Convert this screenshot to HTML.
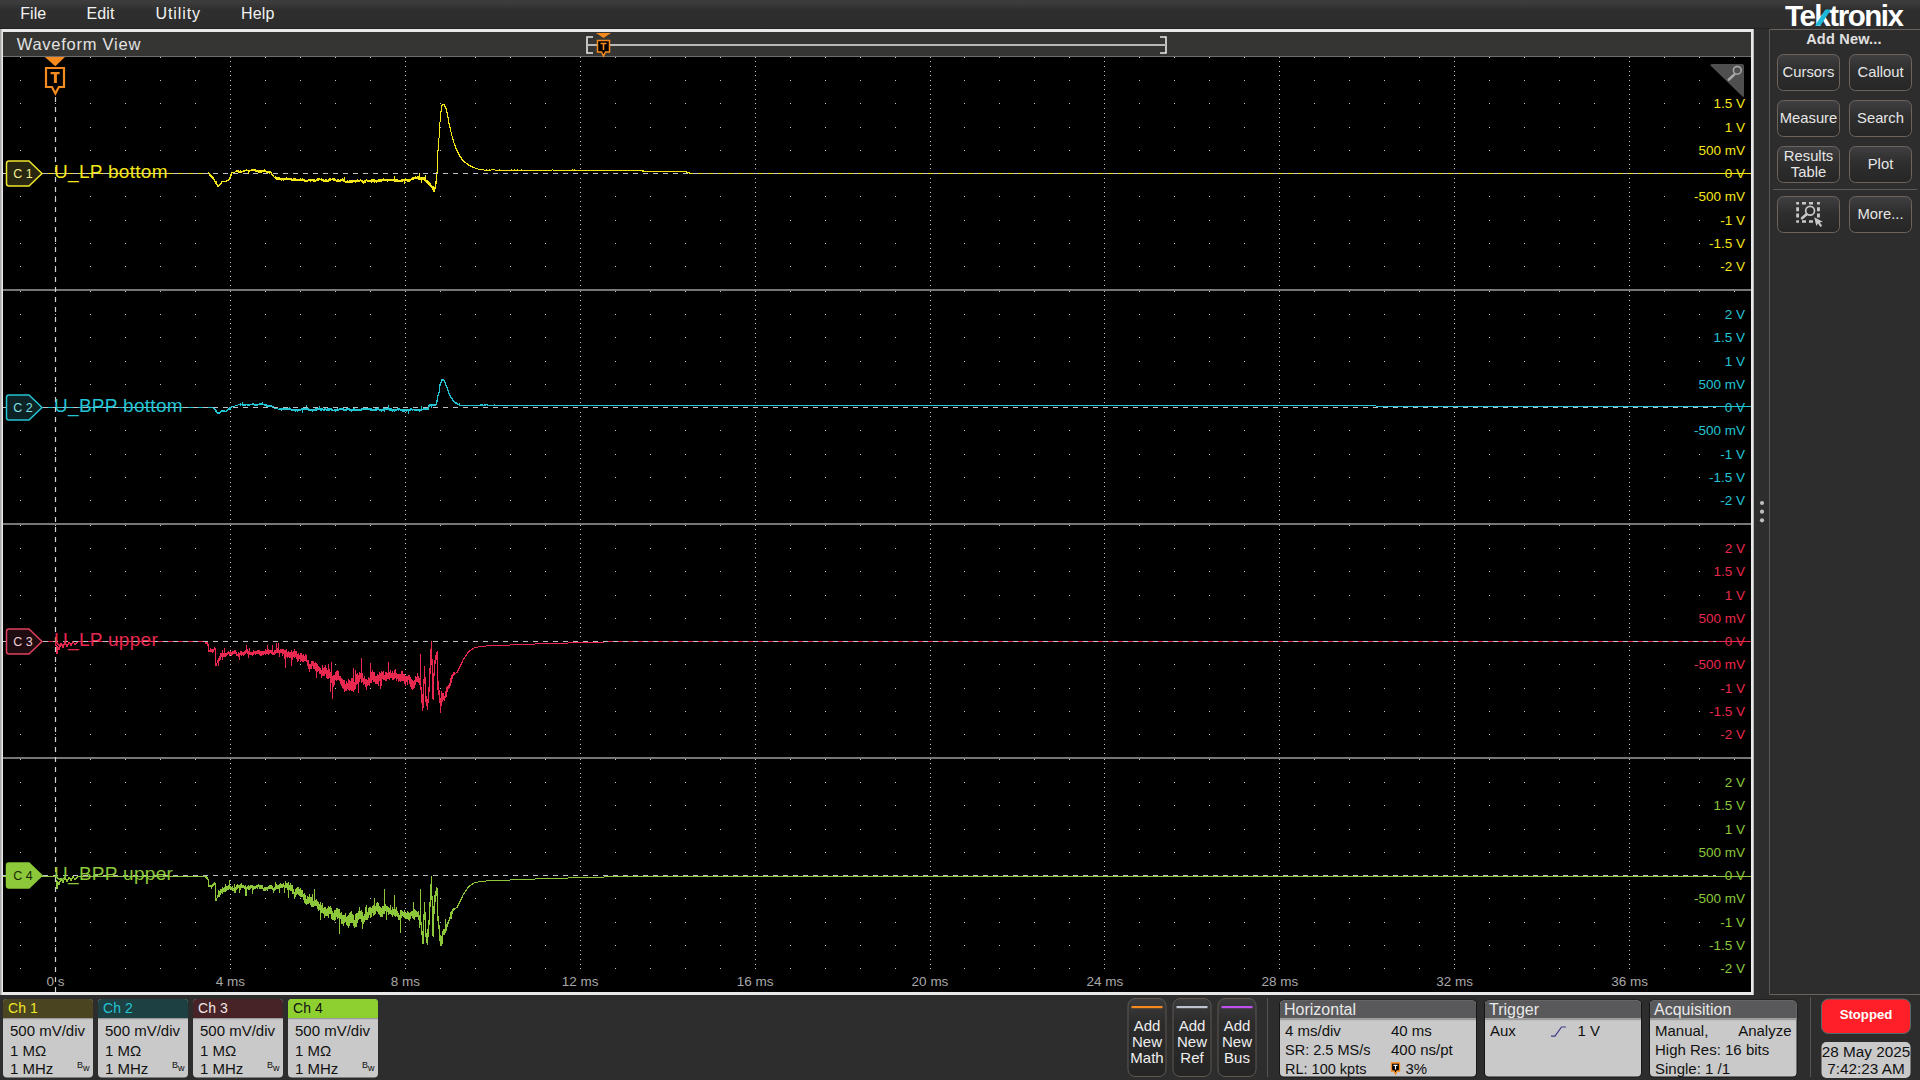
<!DOCTYPE html>
<html><head><meta charset="utf-8"><title>Waveform View</title>
<style>html,body{margin:0;padding:0;background:#2d2d2d;overflow:hidden}svg{display:block}text{font-family:"Liberation Sans",sans-serif}</style></head>
<body><svg width="1920" height="1080" viewBox="0 0 1920 1080"><defs>
<linearGradient id="mb" x1="0" y1="0" x2="0" y2="1"><stop offset="0" stop-color="#3d3d3d"/><stop offset="0.1" stop-color="#3b3b3b"/><stop offset="0.35" stop-color="#2e2e2e"/><stop offset="1" stop-color="#2d2d2d"/></linearGradient>
<linearGradient id="btn" x1="0" y1="0" x2="0" y2="1"><stop offset="0" stop-color="#404042"/><stop offset="0.45" stop-color="#2e2e2e"/><stop offset="1" stop-color="#262626"/></linearGradient>
<linearGradient id="btn2" x1="0" y1="0" x2="0" y2="1"><stop offset="0" stop-color="#3c3c3e"/><stop offset="0.3" stop-color="#2c2c2c"/><stop offset="1" stop-color="#252525"/></linearGradient>
</defs>
<rect x="0" y="0" width="1920" height="1080" fill="#2d2d2d"/>
<rect x="0" y="0" width="1920" height="29" fill="url(#mb)"/>
<rect x="0" y="28" width="1770" height="1" fill="#222"/>
<text x="20.3" y="19" font-size="16" fill="#f2f2f2" text-anchor="start" font-weight="normal" >File</text>
<text x="86.4" y="19" font-size="16" fill="#f2f2f2" text-anchor="start" font-weight="normal" letter-spacing="0.2" >Edit</text>
<text x="155.5" y="19" font-size="16" fill="#f2f2f2" text-anchor="start" font-weight="normal" letter-spacing="0.9" >Utility</text>
<text x="241" y="19" font-size="16" fill="#f2f2f2" text-anchor="start" font-weight="normal" letter-spacing="0.2" >Help</text>
<rect x="0" y="29" width="1754" height="966" fill="#e8e8e8"/>
<rect x="0" y="29" width="1.5" height="966" fill="#a8a8a8"/>
<rect x="1753" y="29" width="1" height="966" fill="#b4b4b4"/>
<rect x="3" y="32" width="1748" height="960" fill="#000"/>
<rect x="3" y="32" width="1748" height="24" fill="#353533"/>
<rect x="3" y="56" width="1748" height="1" fill="#6e6e6e"/>
<text x="16.7" y="49.7" font-size="16.5" fill="#e2e2e2" text-anchor="start" font-weight="normal" letter-spacing="0.75" >Waveform View</text>
<path d="M593,37 H587 V53 H593" fill="none" stroke="#e8e8e8" stroke-width="1.6"/>
<path d="M1160,37 H1166 V53 H1160" fill="none" stroke="#e8e8e8" stroke-width="1.6"/>
<rect x="587" y="44" width="579" height="2" fill="#b8b8b8"/>
<path d="M596,33 L611,33 L603.5,38 Z" fill="#f58a1f"/>
<path d="M597.5,40.5 H609.5 V52 H605.5 L603.5,56 L601.5,52 H597.5 Z" fill="#000" stroke="#f58a1f" stroke-width="1.5"/>
<path d="M600.5,43.5 H606.5 M603.5,43.5 V50" stroke="#f58a1f" stroke-width="1.6"/>
<rect x="3" y="289" width="1748" height="2" fill="#767676"/>
<rect x="3" y="523" width="1748" height="2" fill="#767676"/>
<rect x="3" y="757" width="1748" height="2" fill="#767676"/>
<path d="M20,57h1v1h-1zM55,57h1v1h-1zM90,57h1v1h-1zM125,57h1v1h-1zM160,57h1v1h-1zM195,57h1v1h-1zM230,57h1v1h-1zM265,57h1v1h-1zM300,57h1v1h-1zM335,57h1v1h-1zM370,57h1v1h-1zM405,57h1v1h-1zM440,57h1v1h-1zM475,57h1v1h-1zM510,57h1v1h-1zM545,57h1v1h-1zM580,57h1v1h-1zM615,57h1v1h-1zM650,57h1v1h-1zM685,57h1v1h-1zM720,57h1v1h-1zM755,57h1v1h-1zM790,57h1v1h-1zM825,57h1v1h-1zM860,57h1v1h-1zM895,57h1v1h-1zM930,57h1v1h-1zM964,57h1v1h-1zM999,57h1v1h-1zM1034,57h1v1h-1zM1069,57h1v1h-1zM1104,57h1v1h-1zM1139,57h1v1h-1zM1174,57h1v1h-1zM1209,57h1v1h-1zM1244,57h1v1h-1zM1279,57h1v1h-1zM1314,57h1v1h-1zM1349,57h1v1h-1zM1384,57h1v1h-1zM1419,57h1v1h-1zM1454,57h1v1h-1zM1489,57h1v1h-1zM1524,57h1v1h-1zM1559,57h1v1h-1zM1594,57h1v1h-1zM1629,57h1v1h-1zM1664,57h1v1h-1zM1699,57h1v1h-1zM1734,57h1v1h-1zM20,80h1v1h-1zM55,80h1v1h-1zM90,80h1v1h-1zM125,80h1v1h-1zM160,80h1v1h-1zM195,80h1v1h-1zM230,80h1v1h-1zM265,80h1v1h-1zM300,80h1v1h-1zM335,80h1v1h-1zM370,80h1v1h-1zM405,80h1v1h-1zM440,80h1v1h-1zM475,80h1v1h-1zM510,80h1v1h-1zM545,80h1v1h-1zM580,80h1v1h-1zM615,80h1v1h-1zM650,80h1v1h-1zM685,80h1v1h-1zM720,80h1v1h-1zM755,80h1v1h-1zM790,80h1v1h-1zM825,80h1v1h-1zM860,80h1v1h-1zM895,80h1v1h-1zM930,80h1v1h-1zM964,80h1v1h-1zM999,80h1v1h-1zM1034,80h1v1h-1zM1069,80h1v1h-1zM1104,80h1v1h-1zM1139,80h1v1h-1zM1174,80h1v1h-1zM1209,80h1v1h-1zM1244,80h1v1h-1zM1279,80h1v1h-1zM1314,80h1v1h-1zM1349,80h1v1h-1zM1384,80h1v1h-1zM1419,80h1v1h-1zM1454,80h1v1h-1zM1489,80h1v1h-1zM1524,80h1v1h-1zM1559,80h1v1h-1zM1594,80h1v1h-1zM1629,80h1v1h-1zM1664,80h1v1h-1zM1699,80h1v1h-1zM1734,80h1v1h-1zM20,103h1v1h-1zM55,103h1v1h-1zM90,103h1v1h-1zM125,103h1v1h-1zM160,103h1v1h-1zM195,103h1v1h-1zM230,103h1v1h-1zM265,103h1v1h-1zM300,103h1v1h-1zM335,103h1v1h-1zM370,103h1v1h-1zM405,103h1v1h-1zM440,103h1v1h-1zM475,103h1v1h-1zM510,103h1v1h-1zM545,103h1v1h-1zM580,103h1v1h-1zM615,103h1v1h-1zM650,103h1v1h-1zM685,103h1v1h-1zM720,103h1v1h-1zM755,103h1v1h-1zM790,103h1v1h-1zM825,103h1v1h-1zM860,103h1v1h-1zM895,103h1v1h-1zM930,103h1v1h-1zM964,103h1v1h-1zM999,103h1v1h-1zM1034,103h1v1h-1zM1069,103h1v1h-1zM1104,103h1v1h-1zM1139,103h1v1h-1zM1174,103h1v1h-1zM1209,103h1v1h-1zM1244,103h1v1h-1zM1279,103h1v1h-1zM1314,103h1v1h-1zM1349,103h1v1h-1zM1384,103h1v1h-1zM1419,103h1v1h-1zM1454,103h1v1h-1zM1489,103h1v1h-1zM1524,103h1v1h-1zM1559,103h1v1h-1zM1594,103h1v1h-1zM1629,103h1v1h-1zM1664,103h1v1h-1zM1699,103h1v1h-1zM1734,103h1v1h-1zM20,127h1v1h-1zM55,127h1v1h-1zM90,127h1v1h-1zM125,127h1v1h-1zM160,127h1v1h-1zM195,127h1v1h-1zM230,127h1v1h-1zM265,127h1v1h-1zM300,127h1v1h-1zM335,127h1v1h-1zM370,127h1v1h-1zM405,127h1v1h-1zM440,127h1v1h-1zM475,127h1v1h-1zM510,127h1v1h-1zM545,127h1v1h-1zM580,127h1v1h-1zM615,127h1v1h-1zM650,127h1v1h-1zM685,127h1v1h-1zM720,127h1v1h-1zM755,127h1v1h-1zM790,127h1v1h-1zM825,127h1v1h-1zM860,127h1v1h-1zM895,127h1v1h-1zM930,127h1v1h-1zM964,127h1v1h-1zM999,127h1v1h-1zM1034,127h1v1h-1zM1069,127h1v1h-1zM1104,127h1v1h-1zM1139,127h1v1h-1zM1174,127h1v1h-1zM1209,127h1v1h-1zM1244,127h1v1h-1zM1279,127h1v1h-1zM1314,127h1v1h-1zM1349,127h1v1h-1zM1384,127h1v1h-1zM1419,127h1v1h-1zM1454,127h1v1h-1zM1489,127h1v1h-1zM1524,127h1v1h-1zM1559,127h1v1h-1zM1594,127h1v1h-1zM1629,127h1v1h-1zM1664,127h1v1h-1zM1699,127h1v1h-1zM1734,127h1v1h-1zM20,150h1v1h-1zM55,150h1v1h-1zM90,150h1v1h-1zM125,150h1v1h-1zM160,150h1v1h-1zM195,150h1v1h-1zM230,150h1v1h-1zM265,150h1v1h-1zM300,150h1v1h-1zM335,150h1v1h-1zM370,150h1v1h-1zM405,150h1v1h-1zM440,150h1v1h-1zM475,150h1v1h-1zM510,150h1v1h-1zM545,150h1v1h-1zM580,150h1v1h-1zM615,150h1v1h-1zM650,150h1v1h-1zM685,150h1v1h-1zM720,150h1v1h-1zM755,150h1v1h-1zM790,150h1v1h-1zM825,150h1v1h-1zM860,150h1v1h-1zM895,150h1v1h-1zM930,150h1v1h-1zM964,150h1v1h-1zM999,150h1v1h-1zM1034,150h1v1h-1zM1069,150h1v1h-1zM1104,150h1v1h-1zM1139,150h1v1h-1zM1174,150h1v1h-1zM1209,150h1v1h-1zM1244,150h1v1h-1zM1279,150h1v1h-1zM1314,150h1v1h-1zM1349,150h1v1h-1zM1384,150h1v1h-1zM1419,150h1v1h-1zM1454,150h1v1h-1zM1489,150h1v1h-1zM1524,150h1v1h-1zM1559,150h1v1h-1zM1594,150h1v1h-1zM1629,150h1v1h-1zM1664,150h1v1h-1zM1699,150h1v1h-1zM1734,150h1v1h-1zM20,196h1v1h-1zM55,196h1v1h-1zM90,196h1v1h-1zM125,196h1v1h-1zM160,196h1v1h-1zM195,196h1v1h-1zM230,196h1v1h-1zM265,196h1v1h-1zM300,196h1v1h-1zM335,196h1v1h-1zM370,196h1v1h-1zM405,196h1v1h-1zM440,196h1v1h-1zM475,196h1v1h-1zM510,196h1v1h-1zM545,196h1v1h-1zM580,196h1v1h-1zM615,196h1v1h-1zM650,196h1v1h-1zM685,196h1v1h-1zM720,196h1v1h-1zM755,196h1v1h-1zM790,196h1v1h-1zM825,196h1v1h-1zM860,196h1v1h-1zM895,196h1v1h-1zM930,196h1v1h-1zM964,196h1v1h-1zM999,196h1v1h-1zM1034,196h1v1h-1zM1069,196h1v1h-1zM1104,196h1v1h-1zM1139,196h1v1h-1zM1174,196h1v1h-1zM1209,196h1v1h-1zM1244,196h1v1h-1zM1279,196h1v1h-1zM1314,196h1v1h-1zM1349,196h1v1h-1zM1384,196h1v1h-1zM1419,196h1v1h-1zM1454,196h1v1h-1zM1489,196h1v1h-1zM1524,196h1v1h-1zM1559,196h1v1h-1zM1594,196h1v1h-1zM1629,196h1v1h-1zM1664,196h1v1h-1zM1699,196h1v1h-1zM1734,196h1v1h-1zM20,220h1v1h-1zM55,220h1v1h-1zM90,220h1v1h-1zM125,220h1v1h-1zM160,220h1v1h-1zM195,220h1v1h-1zM230,220h1v1h-1zM265,220h1v1h-1zM300,220h1v1h-1zM335,220h1v1h-1zM370,220h1v1h-1zM405,220h1v1h-1zM440,220h1v1h-1zM475,220h1v1h-1zM510,220h1v1h-1zM545,220h1v1h-1zM580,220h1v1h-1zM615,220h1v1h-1zM650,220h1v1h-1zM685,220h1v1h-1zM720,220h1v1h-1zM755,220h1v1h-1zM790,220h1v1h-1zM825,220h1v1h-1zM860,220h1v1h-1zM895,220h1v1h-1zM930,220h1v1h-1zM964,220h1v1h-1zM999,220h1v1h-1zM1034,220h1v1h-1zM1069,220h1v1h-1zM1104,220h1v1h-1zM1139,220h1v1h-1zM1174,220h1v1h-1zM1209,220h1v1h-1zM1244,220h1v1h-1zM1279,220h1v1h-1zM1314,220h1v1h-1zM1349,220h1v1h-1zM1384,220h1v1h-1zM1419,220h1v1h-1zM1454,220h1v1h-1zM1489,220h1v1h-1zM1524,220h1v1h-1zM1559,220h1v1h-1zM1594,220h1v1h-1zM1629,220h1v1h-1zM1664,220h1v1h-1zM1699,220h1v1h-1zM1734,220h1v1h-1zM20,243h1v1h-1zM55,243h1v1h-1zM90,243h1v1h-1zM125,243h1v1h-1zM160,243h1v1h-1zM195,243h1v1h-1zM230,243h1v1h-1zM265,243h1v1h-1zM300,243h1v1h-1zM335,243h1v1h-1zM370,243h1v1h-1zM405,243h1v1h-1zM440,243h1v1h-1zM475,243h1v1h-1zM510,243h1v1h-1zM545,243h1v1h-1zM580,243h1v1h-1zM615,243h1v1h-1zM650,243h1v1h-1zM685,243h1v1h-1zM720,243h1v1h-1zM755,243h1v1h-1zM790,243h1v1h-1zM825,243h1v1h-1zM860,243h1v1h-1zM895,243h1v1h-1zM930,243h1v1h-1zM964,243h1v1h-1zM999,243h1v1h-1zM1034,243h1v1h-1zM1069,243h1v1h-1zM1104,243h1v1h-1zM1139,243h1v1h-1zM1174,243h1v1h-1zM1209,243h1v1h-1zM1244,243h1v1h-1zM1279,243h1v1h-1zM1314,243h1v1h-1zM1349,243h1v1h-1zM1384,243h1v1h-1zM1419,243h1v1h-1zM1454,243h1v1h-1zM1489,243h1v1h-1zM1524,243h1v1h-1zM1559,243h1v1h-1zM1594,243h1v1h-1zM1629,243h1v1h-1zM1664,243h1v1h-1zM1699,243h1v1h-1zM1734,243h1v1h-1zM20,266h1v1h-1zM55,266h1v1h-1zM90,266h1v1h-1zM125,266h1v1h-1zM160,266h1v1h-1zM195,266h1v1h-1zM230,266h1v1h-1zM265,266h1v1h-1zM300,266h1v1h-1zM335,266h1v1h-1zM370,266h1v1h-1zM405,266h1v1h-1zM440,266h1v1h-1zM475,266h1v1h-1zM510,266h1v1h-1zM545,266h1v1h-1zM580,266h1v1h-1zM615,266h1v1h-1zM650,266h1v1h-1zM685,266h1v1h-1zM720,266h1v1h-1zM755,266h1v1h-1zM790,266h1v1h-1zM825,266h1v1h-1zM860,266h1v1h-1zM895,266h1v1h-1zM930,266h1v1h-1zM964,266h1v1h-1zM999,266h1v1h-1zM1034,266h1v1h-1zM1069,266h1v1h-1zM1104,266h1v1h-1zM1139,266h1v1h-1zM1174,266h1v1h-1zM1209,266h1v1h-1zM1244,266h1v1h-1zM1279,266h1v1h-1zM1314,266h1v1h-1zM1349,266h1v1h-1zM1384,266h1v1h-1zM1419,266h1v1h-1zM1454,266h1v1h-1zM1489,266h1v1h-1zM1524,266h1v1h-1zM1559,266h1v1h-1zM1594,266h1v1h-1zM1629,266h1v1h-1zM1664,266h1v1h-1zM1699,266h1v1h-1zM1734,266h1v1h-1zM20,291h1v1h-1zM55,291h1v1h-1zM90,291h1v1h-1zM125,291h1v1h-1zM160,291h1v1h-1zM195,291h1v1h-1zM230,291h1v1h-1zM265,291h1v1h-1zM300,291h1v1h-1zM335,291h1v1h-1zM370,291h1v1h-1zM405,291h1v1h-1zM440,291h1v1h-1zM475,291h1v1h-1zM510,291h1v1h-1zM545,291h1v1h-1zM580,291h1v1h-1zM615,291h1v1h-1zM650,291h1v1h-1zM685,291h1v1h-1zM720,291h1v1h-1zM755,291h1v1h-1zM790,291h1v1h-1zM825,291h1v1h-1zM860,291h1v1h-1zM895,291h1v1h-1zM930,291h1v1h-1zM964,291h1v1h-1zM999,291h1v1h-1zM1034,291h1v1h-1zM1069,291h1v1h-1zM1104,291h1v1h-1zM1139,291h1v1h-1zM1174,291h1v1h-1zM1209,291h1v1h-1zM1244,291h1v1h-1zM1279,291h1v1h-1zM1314,291h1v1h-1zM1349,291h1v1h-1zM1384,291h1v1h-1zM1419,291h1v1h-1zM1454,291h1v1h-1zM1489,291h1v1h-1zM1524,291h1v1h-1zM1559,291h1v1h-1zM1594,291h1v1h-1zM1629,291h1v1h-1zM1664,291h1v1h-1zM1699,291h1v1h-1zM1734,291h1v1h-1zM20,314h1v1h-1zM55,314h1v1h-1zM90,314h1v1h-1zM125,314h1v1h-1zM160,314h1v1h-1zM195,314h1v1h-1zM230,314h1v1h-1zM265,314h1v1h-1zM300,314h1v1h-1zM335,314h1v1h-1zM370,314h1v1h-1zM405,314h1v1h-1zM440,314h1v1h-1zM475,314h1v1h-1zM510,314h1v1h-1zM545,314h1v1h-1zM580,314h1v1h-1zM615,314h1v1h-1zM650,314h1v1h-1zM685,314h1v1h-1zM720,314h1v1h-1zM755,314h1v1h-1zM790,314h1v1h-1zM825,314h1v1h-1zM860,314h1v1h-1zM895,314h1v1h-1zM930,314h1v1h-1zM964,314h1v1h-1zM999,314h1v1h-1zM1034,314h1v1h-1zM1069,314h1v1h-1zM1104,314h1v1h-1zM1139,314h1v1h-1zM1174,314h1v1h-1zM1209,314h1v1h-1zM1244,314h1v1h-1zM1279,314h1v1h-1zM1314,314h1v1h-1zM1349,314h1v1h-1zM1384,314h1v1h-1zM1419,314h1v1h-1zM1454,314h1v1h-1zM1489,314h1v1h-1zM1524,314h1v1h-1zM1559,314h1v1h-1zM1594,314h1v1h-1zM1629,314h1v1h-1zM1664,314h1v1h-1zM1699,314h1v1h-1zM1734,314h1v1h-1zM20,337h1v1h-1zM55,337h1v1h-1zM90,337h1v1h-1zM125,337h1v1h-1zM160,337h1v1h-1zM195,337h1v1h-1zM230,337h1v1h-1zM265,337h1v1h-1zM300,337h1v1h-1zM335,337h1v1h-1zM370,337h1v1h-1zM405,337h1v1h-1zM440,337h1v1h-1zM475,337h1v1h-1zM510,337h1v1h-1zM545,337h1v1h-1zM580,337h1v1h-1zM615,337h1v1h-1zM650,337h1v1h-1zM685,337h1v1h-1zM720,337h1v1h-1zM755,337h1v1h-1zM790,337h1v1h-1zM825,337h1v1h-1zM860,337h1v1h-1zM895,337h1v1h-1zM930,337h1v1h-1zM964,337h1v1h-1zM999,337h1v1h-1zM1034,337h1v1h-1zM1069,337h1v1h-1zM1104,337h1v1h-1zM1139,337h1v1h-1zM1174,337h1v1h-1zM1209,337h1v1h-1zM1244,337h1v1h-1zM1279,337h1v1h-1zM1314,337h1v1h-1zM1349,337h1v1h-1zM1384,337h1v1h-1zM1419,337h1v1h-1zM1454,337h1v1h-1zM1489,337h1v1h-1zM1524,337h1v1h-1zM1559,337h1v1h-1zM1594,337h1v1h-1zM1629,337h1v1h-1zM1664,337h1v1h-1zM1699,337h1v1h-1zM1734,337h1v1h-1zM20,361h1v1h-1zM55,361h1v1h-1zM90,361h1v1h-1zM125,361h1v1h-1zM160,361h1v1h-1zM195,361h1v1h-1zM230,361h1v1h-1zM265,361h1v1h-1zM300,361h1v1h-1zM335,361h1v1h-1zM370,361h1v1h-1zM405,361h1v1h-1zM440,361h1v1h-1zM475,361h1v1h-1zM510,361h1v1h-1zM545,361h1v1h-1zM580,361h1v1h-1zM615,361h1v1h-1zM650,361h1v1h-1zM685,361h1v1h-1zM720,361h1v1h-1zM755,361h1v1h-1zM790,361h1v1h-1zM825,361h1v1h-1zM860,361h1v1h-1zM895,361h1v1h-1zM930,361h1v1h-1zM964,361h1v1h-1zM999,361h1v1h-1zM1034,361h1v1h-1zM1069,361h1v1h-1zM1104,361h1v1h-1zM1139,361h1v1h-1zM1174,361h1v1h-1zM1209,361h1v1h-1zM1244,361h1v1h-1zM1279,361h1v1h-1zM1314,361h1v1h-1zM1349,361h1v1h-1zM1384,361h1v1h-1zM1419,361h1v1h-1zM1454,361h1v1h-1zM1489,361h1v1h-1zM1524,361h1v1h-1zM1559,361h1v1h-1zM1594,361h1v1h-1zM1629,361h1v1h-1zM1664,361h1v1h-1zM1699,361h1v1h-1zM1734,361h1v1h-1zM20,384h1v1h-1zM55,384h1v1h-1zM90,384h1v1h-1zM125,384h1v1h-1zM160,384h1v1h-1zM195,384h1v1h-1zM230,384h1v1h-1zM265,384h1v1h-1zM300,384h1v1h-1zM335,384h1v1h-1zM370,384h1v1h-1zM405,384h1v1h-1zM440,384h1v1h-1zM475,384h1v1h-1zM510,384h1v1h-1zM545,384h1v1h-1zM580,384h1v1h-1zM615,384h1v1h-1zM650,384h1v1h-1zM685,384h1v1h-1zM720,384h1v1h-1zM755,384h1v1h-1zM790,384h1v1h-1zM825,384h1v1h-1zM860,384h1v1h-1zM895,384h1v1h-1zM930,384h1v1h-1zM964,384h1v1h-1zM999,384h1v1h-1zM1034,384h1v1h-1zM1069,384h1v1h-1zM1104,384h1v1h-1zM1139,384h1v1h-1zM1174,384h1v1h-1zM1209,384h1v1h-1zM1244,384h1v1h-1zM1279,384h1v1h-1zM1314,384h1v1h-1zM1349,384h1v1h-1zM1384,384h1v1h-1zM1419,384h1v1h-1zM1454,384h1v1h-1zM1489,384h1v1h-1zM1524,384h1v1h-1zM1559,384h1v1h-1zM1594,384h1v1h-1zM1629,384h1v1h-1zM1664,384h1v1h-1zM1699,384h1v1h-1zM1734,384h1v1h-1zM20,430h1v1h-1zM55,430h1v1h-1zM90,430h1v1h-1zM125,430h1v1h-1zM160,430h1v1h-1zM195,430h1v1h-1zM230,430h1v1h-1zM265,430h1v1h-1zM300,430h1v1h-1zM335,430h1v1h-1zM370,430h1v1h-1zM405,430h1v1h-1zM440,430h1v1h-1zM475,430h1v1h-1zM510,430h1v1h-1zM545,430h1v1h-1zM580,430h1v1h-1zM615,430h1v1h-1zM650,430h1v1h-1zM685,430h1v1h-1zM720,430h1v1h-1zM755,430h1v1h-1zM790,430h1v1h-1zM825,430h1v1h-1zM860,430h1v1h-1zM895,430h1v1h-1zM930,430h1v1h-1zM964,430h1v1h-1zM999,430h1v1h-1zM1034,430h1v1h-1zM1069,430h1v1h-1zM1104,430h1v1h-1zM1139,430h1v1h-1zM1174,430h1v1h-1zM1209,430h1v1h-1zM1244,430h1v1h-1zM1279,430h1v1h-1zM1314,430h1v1h-1zM1349,430h1v1h-1zM1384,430h1v1h-1zM1419,430h1v1h-1zM1454,430h1v1h-1zM1489,430h1v1h-1zM1524,430h1v1h-1zM1559,430h1v1h-1zM1594,430h1v1h-1zM1629,430h1v1h-1zM1664,430h1v1h-1zM1699,430h1v1h-1zM1734,430h1v1h-1zM20,454h1v1h-1zM55,454h1v1h-1zM90,454h1v1h-1zM125,454h1v1h-1zM160,454h1v1h-1zM195,454h1v1h-1zM230,454h1v1h-1zM265,454h1v1h-1zM300,454h1v1h-1zM335,454h1v1h-1zM370,454h1v1h-1zM405,454h1v1h-1zM440,454h1v1h-1zM475,454h1v1h-1zM510,454h1v1h-1zM545,454h1v1h-1zM580,454h1v1h-1zM615,454h1v1h-1zM650,454h1v1h-1zM685,454h1v1h-1zM720,454h1v1h-1zM755,454h1v1h-1zM790,454h1v1h-1zM825,454h1v1h-1zM860,454h1v1h-1zM895,454h1v1h-1zM930,454h1v1h-1zM964,454h1v1h-1zM999,454h1v1h-1zM1034,454h1v1h-1zM1069,454h1v1h-1zM1104,454h1v1h-1zM1139,454h1v1h-1zM1174,454h1v1h-1zM1209,454h1v1h-1zM1244,454h1v1h-1zM1279,454h1v1h-1zM1314,454h1v1h-1zM1349,454h1v1h-1zM1384,454h1v1h-1zM1419,454h1v1h-1zM1454,454h1v1h-1zM1489,454h1v1h-1zM1524,454h1v1h-1zM1559,454h1v1h-1zM1594,454h1v1h-1zM1629,454h1v1h-1zM1664,454h1v1h-1zM1699,454h1v1h-1zM1734,454h1v1h-1zM20,477h1v1h-1zM55,477h1v1h-1zM90,477h1v1h-1zM125,477h1v1h-1zM160,477h1v1h-1zM195,477h1v1h-1zM230,477h1v1h-1zM265,477h1v1h-1zM300,477h1v1h-1zM335,477h1v1h-1zM370,477h1v1h-1zM405,477h1v1h-1zM440,477h1v1h-1zM475,477h1v1h-1zM510,477h1v1h-1zM545,477h1v1h-1zM580,477h1v1h-1zM615,477h1v1h-1zM650,477h1v1h-1zM685,477h1v1h-1zM720,477h1v1h-1zM755,477h1v1h-1zM790,477h1v1h-1zM825,477h1v1h-1zM860,477h1v1h-1zM895,477h1v1h-1zM930,477h1v1h-1zM964,477h1v1h-1zM999,477h1v1h-1zM1034,477h1v1h-1zM1069,477h1v1h-1zM1104,477h1v1h-1zM1139,477h1v1h-1zM1174,477h1v1h-1zM1209,477h1v1h-1zM1244,477h1v1h-1zM1279,477h1v1h-1zM1314,477h1v1h-1zM1349,477h1v1h-1zM1384,477h1v1h-1zM1419,477h1v1h-1zM1454,477h1v1h-1zM1489,477h1v1h-1zM1524,477h1v1h-1zM1559,477h1v1h-1zM1594,477h1v1h-1zM1629,477h1v1h-1zM1664,477h1v1h-1zM1699,477h1v1h-1zM1734,477h1v1h-1zM20,500h1v1h-1zM55,500h1v1h-1zM90,500h1v1h-1zM125,500h1v1h-1zM160,500h1v1h-1zM195,500h1v1h-1zM230,500h1v1h-1zM265,500h1v1h-1zM300,500h1v1h-1zM335,500h1v1h-1zM370,500h1v1h-1zM405,500h1v1h-1zM440,500h1v1h-1zM475,500h1v1h-1zM510,500h1v1h-1zM545,500h1v1h-1zM580,500h1v1h-1zM615,500h1v1h-1zM650,500h1v1h-1zM685,500h1v1h-1zM720,500h1v1h-1zM755,500h1v1h-1zM790,500h1v1h-1zM825,500h1v1h-1zM860,500h1v1h-1zM895,500h1v1h-1zM930,500h1v1h-1zM964,500h1v1h-1zM999,500h1v1h-1zM1034,500h1v1h-1zM1069,500h1v1h-1zM1104,500h1v1h-1zM1139,500h1v1h-1zM1174,500h1v1h-1zM1209,500h1v1h-1zM1244,500h1v1h-1zM1279,500h1v1h-1zM1314,500h1v1h-1zM1349,500h1v1h-1zM1384,500h1v1h-1zM1419,500h1v1h-1zM1454,500h1v1h-1zM1489,500h1v1h-1zM1524,500h1v1h-1zM1559,500h1v1h-1zM1594,500h1v1h-1zM1629,500h1v1h-1zM1664,500h1v1h-1zM1699,500h1v1h-1zM1734,500h1v1h-1zM20,525h1v1h-1zM55,525h1v1h-1zM90,525h1v1h-1zM125,525h1v1h-1zM160,525h1v1h-1zM195,525h1v1h-1zM230,525h1v1h-1zM265,525h1v1h-1zM300,525h1v1h-1zM335,525h1v1h-1zM370,525h1v1h-1zM405,525h1v1h-1zM440,525h1v1h-1zM475,525h1v1h-1zM510,525h1v1h-1zM545,525h1v1h-1zM580,525h1v1h-1zM615,525h1v1h-1zM650,525h1v1h-1zM685,525h1v1h-1zM720,525h1v1h-1zM755,525h1v1h-1zM790,525h1v1h-1zM825,525h1v1h-1zM860,525h1v1h-1zM895,525h1v1h-1zM930,525h1v1h-1zM964,525h1v1h-1zM999,525h1v1h-1zM1034,525h1v1h-1zM1069,525h1v1h-1zM1104,525h1v1h-1zM1139,525h1v1h-1zM1174,525h1v1h-1zM1209,525h1v1h-1zM1244,525h1v1h-1zM1279,525h1v1h-1zM1314,525h1v1h-1zM1349,525h1v1h-1zM1384,525h1v1h-1zM1419,525h1v1h-1zM1454,525h1v1h-1zM1489,525h1v1h-1zM1524,525h1v1h-1zM1559,525h1v1h-1zM1594,525h1v1h-1zM1629,525h1v1h-1zM1664,525h1v1h-1zM1699,525h1v1h-1zM1734,525h1v1h-1zM20,548h1v1h-1zM55,548h1v1h-1zM90,548h1v1h-1zM125,548h1v1h-1zM160,548h1v1h-1zM195,548h1v1h-1zM230,548h1v1h-1zM265,548h1v1h-1zM300,548h1v1h-1zM335,548h1v1h-1zM370,548h1v1h-1zM405,548h1v1h-1zM440,548h1v1h-1zM475,548h1v1h-1zM510,548h1v1h-1zM545,548h1v1h-1zM580,548h1v1h-1zM615,548h1v1h-1zM650,548h1v1h-1zM685,548h1v1h-1zM720,548h1v1h-1zM755,548h1v1h-1zM790,548h1v1h-1zM825,548h1v1h-1zM860,548h1v1h-1zM895,548h1v1h-1zM930,548h1v1h-1zM964,548h1v1h-1zM999,548h1v1h-1zM1034,548h1v1h-1zM1069,548h1v1h-1zM1104,548h1v1h-1zM1139,548h1v1h-1zM1174,548h1v1h-1zM1209,548h1v1h-1zM1244,548h1v1h-1zM1279,548h1v1h-1zM1314,548h1v1h-1zM1349,548h1v1h-1zM1384,548h1v1h-1zM1419,548h1v1h-1zM1454,548h1v1h-1zM1489,548h1v1h-1zM1524,548h1v1h-1zM1559,548h1v1h-1zM1594,548h1v1h-1zM1629,548h1v1h-1zM1664,548h1v1h-1zM1699,548h1v1h-1zM1734,548h1v1h-1zM20,571h1v1h-1zM55,571h1v1h-1zM90,571h1v1h-1zM125,571h1v1h-1zM160,571h1v1h-1zM195,571h1v1h-1zM230,571h1v1h-1zM265,571h1v1h-1zM300,571h1v1h-1zM335,571h1v1h-1zM370,571h1v1h-1zM405,571h1v1h-1zM440,571h1v1h-1zM475,571h1v1h-1zM510,571h1v1h-1zM545,571h1v1h-1zM580,571h1v1h-1zM615,571h1v1h-1zM650,571h1v1h-1zM685,571h1v1h-1zM720,571h1v1h-1zM755,571h1v1h-1zM790,571h1v1h-1zM825,571h1v1h-1zM860,571h1v1h-1zM895,571h1v1h-1zM930,571h1v1h-1zM964,571h1v1h-1zM999,571h1v1h-1zM1034,571h1v1h-1zM1069,571h1v1h-1zM1104,571h1v1h-1zM1139,571h1v1h-1zM1174,571h1v1h-1zM1209,571h1v1h-1zM1244,571h1v1h-1zM1279,571h1v1h-1zM1314,571h1v1h-1zM1349,571h1v1h-1zM1384,571h1v1h-1zM1419,571h1v1h-1zM1454,571h1v1h-1zM1489,571h1v1h-1zM1524,571h1v1h-1zM1559,571h1v1h-1zM1594,571h1v1h-1zM1629,571h1v1h-1zM1664,571h1v1h-1zM1699,571h1v1h-1zM1734,571h1v1h-1zM20,595h1v1h-1zM55,595h1v1h-1zM90,595h1v1h-1zM125,595h1v1h-1zM160,595h1v1h-1zM195,595h1v1h-1zM230,595h1v1h-1zM265,595h1v1h-1zM300,595h1v1h-1zM335,595h1v1h-1zM370,595h1v1h-1zM405,595h1v1h-1zM440,595h1v1h-1zM475,595h1v1h-1zM510,595h1v1h-1zM545,595h1v1h-1zM580,595h1v1h-1zM615,595h1v1h-1zM650,595h1v1h-1zM685,595h1v1h-1zM720,595h1v1h-1zM755,595h1v1h-1zM790,595h1v1h-1zM825,595h1v1h-1zM860,595h1v1h-1zM895,595h1v1h-1zM930,595h1v1h-1zM964,595h1v1h-1zM999,595h1v1h-1zM1034,595h1v1h-1zM1069,595h1v1h-1zM1104,595h1v1h-1zM1139,595h1v1h-1zM1174,595h1v1h-1zM1209,595h1v1h-1zM1244,595h1v1h-1zM1279,595h1v1h-1zM1314,595h1v1h-1zM1349,595h1v1h-1zM1384,595h1v1h-1zM1419,595h1v1h-1zM1454,595h1v1h-1zM1489,595h1v1h-1zM1524,595h1v1h-1zM1559,595h1v1h-1zM1594,595h1v1h-1zM1629,595h1v1h-1zM1664,595h1v1h-1zM1699,595h1v1h-1zM1734,595h1v1h-1zM20,618h1v1h-1zM55,618h1v1h-1zM90,618h1v1h-1zM125,618h1v1h-1zM160,618h1v1h-1zM195,618h1v1h-1zM230,618h1v1h-1zM265,618h1v1h-1zM300,618h1v1h-1zM335,618h1v1h-1zM370,618h1v1h-1zM405,618h1v1h-1zM440,618h1v1h-1zM475,618h1v1h-1zM510,618h1v1h-1zM545,618h1v1h-1zM580,618h1v1h-1zM615,618h1v1h-1zM650,618h1v1h-1zM685,618h1v1h-1zM720,618h1v1h-1zM755,618h1v1h-1zM790,618h1v1h-1zM825,618h1v1h-1zM860,618h1v1h-1zM895,618h1v1h-1zM930,618h1v1h-1zM964,618h1v1h-1zM999,618h1v1h-1zM1034,618h1v1h-1zM1069,618h1v1h-1zM1104,618h1v1h-1zM1139,618h1v1h-1zM1174,618h1v1h-1zM1209,618h1v1h-1zM1244,618h1v1h-1zM1279,618h1v1h-1zM1314,618h1v1h-1zM1349,618h1v1h-1zM1384,618h1v1h-1zM1419,618h1v1h-1zM1454,618h1v1h-1zM1489,618h1v1h-1zM1524,618h1v1h-1zM1559,618h1v1h-1zM1594,618h1v1h-1zM1629,618h1v1h-1zM1664,618h1v1h-1zM1699,618h1v1h-1zM1734,618h1v1h-1zM20,664h1v1h-1zM55,664h1v1h-1zM90,664h1v1h-1zM125,664h1v1h-1zM160,664h1v1h-1zM195,664h1v1h-1zM230,664h1v1h-1zM265,664h1v1h-1zM300,664h1v1h-1zM335,664h1v1h-1zM370,664h1v1h-1zM405,664h1v1h-1zM440,664h1v1h-1zM475,664h1v1h-1zM510,664h1v1h-1zM545,664h1v1h-1zM580,664h1v1h-1zM615,664h1v1h-1zM650,664h1v1h-1zM685,664h1v1h-1zM720,664h1v1h-1zM755,664h1v1h-1zM790,664h1v1h-1zM825,664h1v1h-1zM860,664h1v1h-1zM895,664h1v1h-1zM930,664h1v1h-1zM964,664h1v1h-1zM999,664h1v1h-1zM1034,664h1v1h-1zM1069,664h1v1h-1zM1104,664h1v1h-1zM1139,664h1v1h-1zM1174,664h1v1h-1zM1209,664h1v1h-1zM1244,664h1v1h-1zM1279,664h1v1h-1zM1314,664h1v1h-1zM1349,664h1v1h-1zM1384,664h1v1h-1zM1419,664h1v1h-1zM1454,664h1v1h-1zM1489,664h1v1h-1zM1524,664h1v1h-1zM1559,664h1v1h-1zM1594,664h1v1h-1zM1629,664h1v1h-1zM1664,664h1v1h-1zM1699,664h1v1h-1zM1734,664h1v1h-1zM20,688h1v1h-1zM55,688h1v1h-1zM90,688h1v1h-1zM125,688h1v1h-1zM160,688h1v1h-1zM195,688h1v1h-1zM230,688h1v1h-1zM265,688h1v1h-1zM300,688h1v1h-1zM335,688h1v1h-1zM370,688h1v1h-1zM405,688h1v1h-1zM440,688h1v1h-1zM475,688h1v1h-1zM510,688h1v1h-1zM545,688h1v1h-1zM580,688h1v1h-1zM615,688h1v1h-1zM650,688h1v1h-1zM685,688h1v1h-1zM720,688h1v1h-1zM755,688h1v1h-1zM790,688h1v1h-1zM825,688h1v1h-1zM860,688h1v1h-1zM895,688h1v1h-1zM930,688h1v1h-1zM964,688h1v1h-1zM999,688h1v1h-1zM1034,688h1v1h-1zM1069,688h1v1h-1zM1104,688h1v1h-1zM1139,688h1v1h-1zM1174,688h1v1h-1zM1209,688h1v1h-1zM1244,688h1v1h-1zM1279,688h1v1h-1zM1314,688h1v1h-1zM1349,688h1v1h-1zM1384,688h1v1h-1zM1419,688h1v1h-1zM1454,688h1v1h-1zM1489,688h1v1h-1zM1524,688h1v1h-1zM1559,688h1v1h-1zM1594,688h1v1h-1zM1629,688h1v1h-1zM1664,688h1v1h-1zM1699,688h1v1h-1zM1734,688h1v1h-1zM20,711h1v1h-1zM55,711h1v1h-1zM90,711h1v1h-1zM125,711h1v1h-1zM160,711h1v1h-1zM195,711h1v1h-1zM230,711h1v1h-1zM265,711h1v1h-1zM300,711h1v1h-1zM335,711h1v1h-1zM370,711h1v1h-1zM405,711h1v1h-1zM440,711h1v1h-1zM475,711h1v1h-1zM510,711h1v1h-1zM545,711h1v1h-1zM580,711h1v1h-1zM615,711h1v1h-1zM650,711h1v1h-1zM685,711h1v1h-1zM720,711h1v1h-1zM755,711h1v1h-1zM790,711h1v1h-1zM825,711h1v1h-1zM860,711h1v1h-1zM895,711h1v1h-1zM930,711h1v1h-1zM964,711h1v1h-1zM999,711h1v1h-1zM1034,711h1v1h-1zM1069,711h1v1h-1zM1104,711h1v1h-1zM1139,711h1v1h-1zM1174,711h1v1h-1zM1209,711h1v1h-1zM1244,711h1v1h-1zM1279,711h1v1h-1zM1314,711h1v1h-1zM1349,711h1v1h-1zM1384,711h1v1h-1zM1419,711h1v1h-1zM1454,711h1v1h-1zM1489,711h1v1h-1zM1524,711h1v1h-1zM1559,711h1v1h-1zM1594,711h1v1h-1zM1629,711h1v1h-1zM1664,711h1v1h-1zM1699,711h1v1h-1zM1734,711h1v1h-1zM20,734h1v1h-1zM55,734h1v1h-1zM90,734h1v1h-1zM125,734h1v1h-1zM160,734h1v1h-1zM195,734h1v1h-1zM230,734h1v1h-1zM265,734h1v1h-1zM300,734h1v1h-1zM335,734h1v1h-1zM370,734h1v1h-1zM405,734h1v1h-1zM440,734h1v1h-1zM475,734h1v1h-1zM510,734h1v1h-1zM545,734h1v1h-1zM580,734h1v1h-1zM615,734h1v1h-1zM650,734h1v1h-1zM685,734h1v1h-1zM720,734h1v1h-1zM755,734h1v1h-1zM790,734h1v1h-1zM825,734h1v1h-1zM860,734h1v1h-1zM895,734h1v1h-1zM930,734h1v1h-1zM964,734h1v1h-1zM999,734h1v1h-1zM1034,734h1v1h-1zM1069,734h1v1h-1zM1104,734h1v1h-1zM1139,734h1v1h-1zM1174,734h1v1h-1zM1209,734h1v1h-1zM1244,734h1v1h-1zM1279,734h1v1h-1zM1314,734h1v1h-1zM1349,734h1v1h-1zM1384,734h1v1h-1zM1419,734h1v1h-1zM1454,734h1v1h-1zM1489,734h1v1h-1zM1524,734h1v1h-1zM1559,734h1v1h-1zM1594,734h1v1h-1zM1629,734h1v1h-1zM1664,734h1v1h-1zM1699,734h1v1h-1zM1734,734h1v1h-1zM20,759h1v1h-1zM55,759h1v1h-1zM90,759h1v1h-1zM125,759h1v1h-1zM160,759h1v1h-1zM195,759h1v1h-1zM230,759h1v1h-1zM265,759h1v1h-1zM300,759h1v1h-1zM335,759h1v1h-1zM370,759h1v1h-1zM405,759h1v1h-1zM440,759h1v1h-1zM475,759h1v1h-1zM510,759h1v1h-1zM545,759h1v1h-1zM580,759h1v1h-1zM615,759h1v1h-1zM650,759h1v1h-1zM685,759h1v1h-1zM720,759h1v1h-1zM755,759h1v1h-1zM790,759h1v1h-1zM825,759h1v1h-1zM860,759h1v1h-1zM895,759h1v1h-1zM930,759h1v1h-1zM964,759h1v1h-1zM999,759h1v1h-1zM1034,759h1v1h-1zM1069,759h1v1h-1zM1104,759h1v1h-1zM1139,759h1v1h-1zM1174,759h1v1h-1zM1209,759h1v1h-1zM1244,759h1v1h-1zM1279,759h1v1h-1zM1314,759h1v1h-1zM1349,759h1v1h-1zM1384,759h1v1h-1zM1419,759h1v1h-1zM1454,759h1v1h-1zM1489,759h1v1h-1zM1524,759h1v1h-1zM1559,759h1v1h-1zM1594,759h1v1h-1zM1629,759h1v1h-1zM1664,759h1v1h-1zM1699,759h1v1h-1zM1734,759h1v1h-1zM20,782h1v1h-1zM55,782h1v1h-1zM90,782h1v1h-1zM125,782h1v1h-1zM160,782h1v1h-1zM195,782h1v1h-1zM230,782h1v1h-1zM265,782h1v1h-1zM300,782h1v1h-1zM335,782h1v1h-1zM370,782h1v1h-1zM405,782h1v1h-1zM440,782h1v1h-1zM475,782h1v1h-1zM510,782h1v1h-1zM545,782h1v1h-1zM580,782h1v1h-1zM615,782h1v1h-1zM650,782h1v1h-1zM685,782h1v1h-1zM720,782h1v1h-1zM755,782h1v1h-1zM790,782h1v1h-1zM825,782h1v1h-1zM860,782h1v1h-1zM895,782h1v1h-1zM930,782h1v1h-1zM964,782h1v1h-1zM999,782h1v1h-1zM1034,782h1v1h-1zM1069,782h1v1h-1zM1104,782h1v1h-1zM1139,782h1v1h-1zM1174,782h1v1h-1zM1209,782h1v1h-1zM1244,782h1v1h-1zM1279,782h1v1h-1zM1314,782h1v1h-1zM1349,782h1v1h-1zM1384,782h1v1h-1zM1419,782h1v1h-1zM1454,782h1v1h-1zM1489,782h1v1h-1zM1524,782h1v1h-1zM1559,782h1v1h-1zM1594,782h1v1h-1zM1629,782h1v1h-1zM1664,782h1v1h-1zM1699,782h1v1h-1zM1734,782h1v1h-1zM20,805h1v1h-1zM55,805h1v1h-1zM90,805h1v1h-1zM125,805h1v1h-1zM160,805h1v1h-1zM195,805h1v1h-1zM230,805h1v1h-1zM265,805h1v1h-1zM300,805h1v1h-1zM335,805h1v1h-1zM370,805h1v1h-1zM405,805h1v1h-1zM440,805h1v1h-1zM475,805h1v1h-1zM510,805h1v1h-1zM545,805h1v1h-1zM580,805h1v1h-1zM615,805h1v1h-1zM650,805h1v1h-1zM685,805h1v1h-1zM720,805h1v1h-1zM755,805h1v1h-1zM790,805h1v1h-1zM825,805h1v1h-1zM860,805h1v1h-1zM895,805h1v1h-1zM930,805h1v1h-1zM964,805h1v1h-1zM999,805h1v1h-1zM1034,805h1v1h-1zM1069,805h1v1h-1zM1104,805h1v1h-1zM1139,805h1v1h-1zM1174,805h1v1h-1zM1209,805h1v1h-1zM1244,805h1v1h-1zM1279,805h1v1h-1zM1314,805h1v1h-1zM1349,805h1v1h-1zM1384,805h1v1h-1zM1419,805h1v1h-1zM1454,805h1v1h-1zM1489,805h1v1h-1zM1524,805h1v1h-1zM1559,805h1v1h-1zM1594,805h1v1h-1zM1629,805h1v1h-1zM1664,805h1v1h-1zM1699,805h1v1h-1zM1734,805h1v1h-1zM20,829h1v1h-1zM55,829h1v1h-1zM90,829h1v1h-1zM125,829h1v1h-1zM160,829h1v1h-1zM195,829h1v1h-1zM230,829h1v1h-1zM265,829h1v1h-1zM300,829h1v1h-1zM335,829h1v1h-1zM370,829h1v1h-1zM405,829h1v1h-1zM440,829h1v1h-1zM475,829h1v1h-1zM510,829h1v1h-1zM545,829h1v1h-1zM580,829h1v1h-1zM615,829h1v1h-1zM650,829h1v1h-1zM685,829h1v1h-1zM720,829h1v1h-1zM755,829h1v1h-1zM790,829h1v1h-1zM825,829h1v1h-1zM860,829h1v1h-1zM895,829h1v1h-1zM930,829h1v1h-1zM964,829h1v1h-1zM999,829h1v1h-1zM1034,829h1v1h-1zM1069,829h1v1h-1zM1104,829h1v1h-1zM1139,829h1v1h-1zM1174,829h1v1h-1zM1209,829h1v1h-1zM1244,829h1v1h-1zM1279,829h1v1h-1zM1314,829h1v1h-1zM1349,829h1v1h-1zM1384,829h1v1h-1zM1419,829h1v1h-1zM1454,829h1v1h-1zM1489,829h1v1h-1zM1524,829h1v1h-1zM1559,829h1v1h-1zM1594,829h1v1h-1zM1629,829h1v1h-1zM1664,829h1v1h-1zM1699,829h1v1h-1zM1734,829h1v1h-1zM20,852h1v1h-1zM55,852h1v1h-1zM90,852h1v1h-1zM125,852h1v1h-1zM160,852h1v1h-1zM195,852h1v1h-1zM230,852h1v1h-1zM265,852h1v1h-1zM300,852h1v1h-1zM335,852h1v1h-1zM370,852h1v1h-1zM405,852h1v1h-1zM440,852h1v1h-1zM475,852h1v1h-1zM510,852h1v1h-1zM545,852h1v1h-1zM580,852h1v1h-1zM615,852h1v1h-1zM650,852h1v1h-1zM685,852h1v1h-1zM720,852h1v1h-1zM755,852h1v1h-1zM790,852h1v1h-1zM825,852h1v1h-1zM860,852h1v1h-1zM895,852h1v1h-1zM930,852h1v1h-1zM964,852h1v1h-1zM999,852h1v1h-1zM1034,852h1v1h-1zM1069,852h1v1h-1zM1104,852h1v1h-1zM1139,852h1v1h-1zM1174,852h1v1h-1zM1209,852h1v1h-1zM1244,852h1v1h-1zM1279,852h1v1h-1zM1314,852h1v1h-1zM1349,852h1v1h-1zM1384,852h1v1h-1zM1419,852h1v1h-1zM1454,852h1v1h-1zM1489,852h1v1h-1zM1524,852h1v1h-1zM1559,852h1v1h-1zM1594,852h1v1h-1zM1629,852h1v1h-1zM1664,852h1v1h-1zM1699,852h1v1h-1zM1734,852h1v1h-1zM20,898h1v1h-1zM55,898h1v1h-1zM90,898h1v1h-1zM125,898h1v1h-1zM160,898h1v1h-1zM195,898h1v1h-1zM230,898h1v1h-1zM265,898h1v1h-1zM300,898h1v1h-1zM335,898h1v1h-1zM370,898h1v1h-1zM405,898h1v1h-1zM440,898h1v1h-1zM475,898h1v1h-1zM510,898h1v1h-1zM545,898h1v1h-1zM580,898h1v1h-1zM615,898h1v1h-1zM650,898h1v1h-1zM685,898h1v1h-1zM720,898h1v1h-1zM755,898h1v1h-1zM790,898h1v1h-1zM825,898h1v1h-1zM860,898h1v1h-1zM895,898h1v1h-1zM930,898h1v1h-1zM964,898h1v1h-1zM999,898h1v1h-1zM1034,898h1v1h-1zM1069,898h1v1h-1zM1104,898h1v1h-1zM1139,898h1v1h-1zM1174,898h1v1h-1zM1209,898h1v1h-1zM1244,898h1v1h-1zM1279,898h1v1h-1zM1314,898h1v1h-1zM1349,898h1v1h-1zM1384,898h1v1h-1zM1419,898h1v1h-1zM1454,898h1v1h-1zM1489,898h1v1h-1zM1524,898h1v1h-1zM1559,898h1v1h-1zM1594,898h1v1h-1zM1629,898h1v1h-1zM1664,898h1v1h-1zM1699,898h1v1h-1zM1734,898h1v1h-1zM20,922h1v1h-1zM55,922h1v1h-1zM90,922h1v1h-1zM125,922h1v1h-1zM160,922h1v1h-1zM195,922h1v1h-1zM230,922h1v1h-1zM265,922h1v1h-1zM300,922h1v1h-1zM335,922h1v1h-1zM370,922h1v1h-1zM405,922h1v1h-1zM440,922h1v1h-1zM475,922h1v1h-1zM510,922h1v1h-1zM545,922h1v1h-1zM580,922h1v1h-1zM615,922h1v1h-1zM650,922h1v1h-1zM685,922h1v1h-1zM720,922h1v1h-1zM755,922h1v1h-1zM790,922h1v1h-1zM825,922h1v1h-1zM860,922h1v1h-1zM895,922h1v1h-1zM930,922h1v1h-1zM964,922h1v1h-1zM999,922h1v1h-1zM1034,922h1v1h-1zM1069,922h1v1h-1zM1104,922h1v1h-1zM1139,922h1v1h-1zM1174,922h1v1h-1zM1209,922h1v1h-1zM1244,922h1v1h-1zM1279,922h1v1h-1zM1314,922h1v1h-1zM1349,922h1v1h-1zM1384,922h1v1h-1zM1419,922h1v1h-1zM1454,922h1v1h-1zM1489,922h1v1h-1zM1524,922h1v1h-1zM1559,922h1v1h-1zM1594,922h1v1h-1zM1629,922h1v1h-1zM1664,922h1v1h-1zM1699,922h1v1h-1zM1734,922h1v1h-1zM20,945h1v1h-1zM55,945h1v1h-1zM90,945h1v1h-1zM125,945h1v1h-1zM160,945h1v1h-1zM195,945h1v1h-1zM230,945h1v1h-1zM265,945h1v1h-1zM300,945h1v1h-1zM335,945h1v1h-1zM370,945h1v1h-1zM405,945h1v1h-1zM440,945h1v1h-1zM475,945h1v1h-1zM510,945h1v1h-1zM545,945h1v1h-1zM580,945h1v1h-1zM615,945h1v1h-1zM650,945h1v1h-1zM685,945h1v1h-1zM720,945h1v1h-1zM755,945h1v1h-1zM790,945h1v1h-1zM825,945h1v1h-1zM860,945h1v1h-1zM895,945h1v1h-1zM930,945h1v1h-1zM964,945h1v1h-1zM999,945h1v1h-1zM1034,945h1v1h-1zM1069,945h1v1h-1zM1104,945h1v1h-1zM1139,945h1v1h-1zM1174,945h1v1h-1zM1209,945h1v1h-1zM1244,945h1v1h-1zM1279,945h1v1h-1zM1314,945h1v1h-1zM1349,945h1v1h-1zM1384,945h1v1h-1zM1419,945h1v1h-1zM1454,945h1v1h-1zM1489,945h1v1h-1zM1524,945h1v1h-1zM1559,945h1v1h-1zM1594,945h1v1h-1zM1629,945h1v1h-1zM1664,945h1v1h-1zM1699,945h1v1h-1zM1734,945h1v1h-1zM20,968h1v1h-1zM55,968h1v1h-1zM90,968h1v1h-1zM125,968h1v1h-1zM160,968h1v1h-1zM195,968h1v1h-1zM230,968h1v1h-1zM265,968h1v1h-1zM300,968h1v1h-1zM335,968h1v1h-1zM370,968h1v1h-1zM405,968h1v1h-1zM440,968h1v1h-1zM475,968h1v1h-1zM510,968h1v1h-1zM545,968h1v1h-1zM580,968h1v1h-1zM615,968h1v1h-1zM650,968h1v1h-1zM685,968h1v1h-1zM720,968h1v1h-1zM755,968h1v1h-1zM790,968h1v1h-1zM825,968h1v1h-1zM860,968h1v1h-1zM895,968h1v1h-1zM930,968h1v1h-1zM964,968h1v1h-1zM999,968h1v1h-1zM1034,968h1v1h-1zM1069,968h1v1h-1zM1104,968h1v1h-1zM1139,968h1v1h-1zM1174,968h1v1h-1zM1209,968h1v1h-1zM1244,968h1v1h-1zM1279,968h1v1h-1zM1314,968h1v1h-1zM1349,968h1v1h-1zM1384,968h1v1h-1zM1419,968h1v1h-1zM1454,968h1v1h-1zM1489,968h1v1h-1zM1524,968h1v1h-1zM1559,968h1v1h-1zM1594,968h1v1h-1zM1629,968h1v1h-1zM1664,968h1v1h-1zM1699,968h1v1h-1zM1734,968h1v1h-1zM230,57h1v1h-1zM230,61h1v1h-1zM230,66h1v1h-1zM230,71h1v1h-1zM230,75h1v1h-1zM230,80h1v1h-1zM230,85h1v1h-1zM230,89h1v1h-1zM230,94h1v1h-1zM230,99h1v1h-1zM230,103h1v1h-1zM230,108h1v1h-1zM230,113h1v1h-1zM230,117h1v1h-1zM230,122h1v1h-1zM230,127h1v1h-1zM230,131h1v1h-1zM230,136h1v1h-1zM230,141h1v1h-1zM230,145h1v1h-1zM230,150h1v1h-1zM230,155h1v1h-1zM230,159h1v1h-1zM230,164h1v1h-1zM230,168h1v1h-1zM230,178h1v1h-1zM230,182h1v1h-1zM230,187h1v1h-1zM230,192h1v1h-1zM230,196h1v1h-1zM230,201h1v1h-1zM230,206h1v1h-1zM230,210h1v1h-1zM230,215h1v1h-1zM230,220h1v1h-1zM230,224h1v1h-1zM230,229h1v1h-1zM230,234h1v1h-1zM230,238h1v1h-1zM230,243h1v1h-1zM230,248h1v1h-1zM230,252h1v1h-1zM230,257h1v1h-1zM230,262h1v1h-1zM230,266h1v1h-1zM230,271h1v1h-1zM230,276h1v1h-1zM230,280h1v1h-1zM230,285h1v1h-1zM230,291h1v1h-1zM230,295h1v1h-1zM230,300h1v1h-1zM230,305h1v1h-1zM230,309h1v1h-1zM230,314h1v1h-1zM230,319h1v1h-1zM230,323h1v1h-1zM230,328h1v1h-1zM230,333h1v1h-1zM230,337h1v1h-1zM230,342h1v1h-1zM230,347h1v1h-1zM230,351h1v1h-1zM230,356h1v1h-1zM230,361h1v1h-1zM230,365h1v1h-1zM230,370h1v1h-1zM230,375h1v1h-1zM230,379h1v1h-1zM230,384h1v1h-1zM230,389h1v1h-1zM230,393h1v1h-1zM230,398h1v1h-1zM230,402h1v1h-1zM230,412h1v1h-1zM230,416h1v1h-1zM230,421h1v1h-1zM230,426h1v1h-1zM230,430h1v1h-1zM230,435h1v1h-1zM230,440h1v1h-1zM230,444h1v1h-1zM230,449h1v1h-1zM230,454h1v1h-1zM230,458h1v1h-1zM230,463h1v1h-1zM230,468h1v1h-1zM230,472h1v1h-1zM230,477h1v1h-1zM230,482h1v1h-1zM230,486h1v1h-1zM230,491h1v1h-1zM230,496h1v1h-1zM230,500h1v1h-1zM230,505h1v1h-1zM230,510h1v1h-1zM230,514h1v1h-1zM230,519h1v1h-1zM230,525h1v1h-1zM230,529h1v1h-1zM230,534h1v1h-1zM230,539h1v1h-1zM230,543h1v1h-1zM230,548h1v1h-1zM230,553h1v1h-1zM230,557h1v1h-1zM230,562h1v1h-1zM230,567h1v1h-1zM230,571h1v1h-1zM230,576h1v1h-1zM230,581h1v1h-1zM230,585h1v1h-1zM230,590h1v1h-1zM230,595h1v1h-1zM230,599h1v1h-1zM230,604h1v1h-1zM230,609h1v1h-1zM230,613h1v1h-1zM230,618h1v1h-1zM230,623h1v1h-1zM230,627h1v1h-1zM230,632h1v1h-1zM230,636h1v1h-1zM230,646h1v1h-1zM230,650h1v1h-1zM230,655h1v1h-1zM230,660h1v1h-1zM230,664h1v1h-1zM230,669h1v1h-1zM230,674h1v1h-1zM230,678h1v1h-1zM230,683h1v1h-1zM230,688h1v1h-1zM230,692h1v1h-1zM230,697h1v1h-1zM230,702h1v1h-1zM230,706h1v1h-1zM230,711h1v1h-1zM230,716h1v1h-1zM230,720h1v1h-1zM230,725h1v1h-1zM230,730h1v1h-1zM230,734h1v1h-1zM230,739h1v1h-1zM230,744h1v1h-1zM230,748h1v1h-1zM230,753h1v1h-1zM230,759h1v1h-1zM230,763h1v1h-1zM230,768h1v1h-1zM230,773h1v1h-1zM230,777h1v1h-1zM230,782h1v1h-1zM230,787h1v1h-1zM230,791h1v1h-1zM230,796h1v1h-1zM230,801h1v1h-1zM230,805h1v1h-1zM230,810h1v1h-1zM230,815h1v1h-1zM230,819h1v1h-1zM230,824h1v1h-1zM230,829h1v1h-1zM230,833h1v1h-1zM230,838h1v1h-1zM230,843h1v1h-1zM230,847h1v1h-1zM230,852h1v1h-1zM230,857h1v1h-1zM230,861h1v1h-1zM230,866h1v1h-1zM230,870h1v1h-1zM230,880h1v1h-1zM230,884h1v1h-1zM230,889h1v1h-1zM230,894h1v1h-1zM230,898h1v1h-1zM230,903h1v1h-1zM230,908h1v1h-1zM230,912h1v1h-1zM230,917h1v1h-1zM230,922h1v1h-1zM230,926h1v1h-1zM230,931h1v1h-1zM230,936h1v1h-1zM230,940h1v1h-1zM230,945h1v1h-1zM230,950h1v1h-1zM230,954h1v1h-1zM230,959h1v1h-1zM230,964h1v1h-1zM230,968h1v1h-1zM230,973h1v1h-1zM230,978h1v1h-1zM230,982h1v1h-1zM230,987h1v1h-1zM405,57h1v1h-1zM405,61h1v1h-1zM405,66h1v1h-1zM405,71h1v1h-1zM405,75h1v1h-1zM405,80h1v1h-1zM405,85h1v1h-1zM405,89h1v1h-1zM405,94h1v1h-1zM405,99h1v1h-1zM405,103h1v1h-1zM405,108h1v1h-1zM405,113h1v1h-1zM405,117h1v1h-1zM405,122h1v1h-1zM405,127h1v1h-1zM405,131h1v1h-1zM405,136h1v1h-1zM405,141h1v1h-1zM405,145h1v1h-1zM405,150h1v1h-1zM405,155h1v1h-1zM405,159h1v1h-1zM405,164h1v1h-1zM405,168h1v1h-1zM405,178h1v1h-1zM405,182h1v1h-1zM405,187h1v1h-1zM405,192h1v1h-1zM405,196h1v1h-1zM405,201h1v1h-1zM405,206h1v1h-1zM405,210h1v1h-1zM405,215h1v1h-1zM405,220h1v1h-1zM405,224h1v1h-1zM405,229h1v1h-1zM405,234h1v1h-1zM405,238h1v1h-1zM405,243h1v1h-1zM405,248h1v1h-1zM405,252h1v1h-1zM405,257h1v1h-1zM405,262h1v1h-1zM405,266h1v1h-1zM405,271h1v1h-1zM405,276h1v1h-1zM405,280h1v1h-1zM405,285h1v1h-1zM405,291h1v1h-1zM405,295h1v1h-1zM405,300h1v1h-1zM405,305h1v1h-1zM405,309h1v1h-1zM405,314h1v1h-1zM405,319h1v1h-1zM405,323h1v1h-1zM405,328h1v1h-1zM405,333h1v1h-1zM405,337h1v1h-1zM405,342h1v1h-1zM405,347h1v1h-1zM405,351h1v1h-1zM405,356h1v1h-1zM405,361h1v1h-1zM405,365h1v1h-1zM405,370h1v1h-1zM405,375h1v1h-1zM405,379h1v1h-1zM405,384h1v1h-1zM405,389h1v1h-1zM405,393h1v1h-1zM405,398h1v1h-1zM405,402h1v1h-1zM405,412h1v1h-1zM405,416h1v1h-1zM405,421h1v1h-1zM405,426h1v1h-1zM405,430h1v1h-1zM405,435h1v1h-1zM405,440h1v1h-1zM405,444h1v1h-1zM405,449h1v1h-1zM405,454h1v1h-1zM405,458h1v1h-1zM405,463h1v1h-1zM405,468h1v1h-1zM405,472h1v1h-1zM405,477h1v1h-1zM405,482h1v1h-1zM405,486h1v1h-1zM405,491h1v1h-1zM405,496h1v1h-1zM405,500h1v1h-1zM405,505h1v1h-1zM405,510h1v1h-1zM405,514h1v1h-1zM405,519h1v1h-1zM405,525h1v1h-1zM405,529h1v1h-1zM405,534h1v1h-1zM405,539h1v1h-1zM405,543h1v1h-1zM405,548h1v1h-1zM405,553h1v1h-1zM405,557h1v1h-1zM405,562h1v1h-1zM405,567h1v1h-1zM405,571h1v1h-1zM405,576h1v1h-1zM405,581h1v1h-1zM405,585h1v1h-1zM405,590h1v1h-1zM405,595h1v1h-1zM405,599h1v1h-1zM405,604h1v1h-1zM405,609h1v1h-1zM405,613h1v1h-1zM405,618h1v1h-1zM405,623h1v1h-1zM405,627h1v1h-1zM405,632h1v1h-1zM405,636h1v1h-1zM405,646h1v1h-1zM405,650h1v1h-1zM405,655h1v1h-1zM405,660h1v1h-1zM405,664h1v1h-1zM405,669h1v1h-1zM405,674h1v1h-1zM405,678h1v1h-1zM405,683h1v1h-1zM405,688h1v1h-1zM405,692h1v1h-1zM405,697h1v1h-1zM405,702h1v1h-1zM405,706h1v1h-1zM405,711h1v1h-1zM405,716h1v1h-1zM405,720h1v1h-1zM405,725h1v1h-1zM405,730h1v1h-1zM405,734h1v1h-1zM405,739h1v1h-1zM405,744h1v1h-1zM405,748h1v1h-1zM405,753h1v1h-1zM405,759h1v1h-1zM405,763h1v1h-1zM405,768h1v1h-1zM405,773h1v1h-1zM405,777h1v1h-1zM405,782h1v1h-1zM405,787h1v1h-1zM405,791h1v1h-1zM405,796h1v1h-1zM405,801h1v1h-1zM405,805h1v1h-1zM405,810h1v1h-1zM405,815h1v1h-1zM405,819h1v1h-1zM405,824h1v1h-1zM405,829h1v1h-1zM405,833h1v1h-1zM405,838h1v1h-1zM405,843h1v1h-1zM405,847h1v1h-1zM405,852h1v1h-1zM405,857h1v1h-1zM405,861h1v1h-1zM405,866h1v1h-1zM405,870h1v1h-1zM405,880h1v1h-1zM405,884h1v1h-1zM405,889h1v1h-1zM405,894h1v1h-1zM405,898h1v1h-1zM405,903h1v1h-1zM405,908h1v1h-1zM405,912h1v1h-1zM405,917h1v1h-1zM405,922h1v1h-1zM405,926h1v1h-1zM405,931h1v1h-1zM405,936h1v1h-1zM405,940h1v1h-1zM405,945h1v1h-1zM405,950h1v1h-1zM405,954h1v1h-1zM405,959h1v1h-1zM405,964h1v1h-1zM405,968h1v1h-1zM405,973h1v1h-1zM405,978h1v1h-1zM405,982h1v1h-1zM405,987h1v1h-1zM580,57h1v1h-1zM580,61h1v1h-1zM580,66h1v1h-1zM580,71h1v1h-1zM580,75h1v1h-1zM580,80h1v1h-1zM580,85h1v1h-1zM580,89h1v1h-1zM580,94h1v1h-1zM580,99h1v1h-1zM580,103h1v1h-1zM580,108h1v1h-1zM580,113h1v1h-1zM580,117h1v1h-1zM580,122h1v1h-1zM580,127h1v1h-1zM580,131h1v1h-1zM580,136h1v1h-1zM580,141h1v1h-1zM580,145h1v1h-1zM580,150h1v1h-1zM580,155h1v1h-1zM580,159h1v1h-1zM580,164h1v1h-1zM580,168h1v1h-1zM580,178h1v1h-1zM580,182h1v1h-1zM580,187h1v1h-1zM580,192h1v1h-1zM580,196h1v1h-1zM580,201h1v1h-1zM580,206h1v1h-1zM580,210h1v1h-1zM580,215h1v1h-1zM580,220h1v1h-1zM580,224h1v1h-1zM580,229h1v1h-1zM580,234h1v1h-1zM580,238h1v1h-1zM580,243h1v1h-1zM580,248h1v1h-1zM580,252h1v1h-1zM580,257h1v1h-1zM580,262h1v1h-1zM580,266h1v1h-1zM580,271h1v1h-1zM580,276h1v1h-1zM580,280h1v1h-1zM580,285h1v1h-1zM580,291h1v1h-1zM580,295h1v1h-1zM580,300h1v1h-1zM580,305h1v1h-1zM580,309h1v1h-1zM580,314h1v1h-1zM580,319h1v1h-1zM580,323h1v1h-1zM580,328h1v1h-1zM580,333h1v1h-1zM580,337h1v1h-1zM580,342h1v1h-1zM580,347h1v1h-1zM580,351h1v1h-1zM580,356h1v1h-1zM580,361h1v1h-1zM580,365h1v1h-1zM580,370h1v1h-1zM580,375h1v1h-1zM580,379h1v1h-1zM580,384h1v1h-1zM580,389h1v1h-1zM580,393h1v1h-1zM580,398h1v1h-1zM580,402h1v1h-1zM580,412h1v1h-1zM580,416h1v1h-1zM580,421h1v1h-1zM580,426h1v1h-1zM580,430h1v1h-1zM580,435h1v1h-1zM580,440h1v1h-1zM580,444h1v1h-1zM580,449h1v1h-1zM580,454h1v1h-1zM580,458h1v1h-1zM580,463h1v1h-1zM580,468h1v1h-1zM580,472h1v1h-1zM580,477h1v1h-1zM580,482h1v1h-1zM580,486h1v1h-1zM580,491h1v1h-1zM580,496h1v1h-1zM580,500h1v1h-1zM580,505h1v1h-1zM580,510h1v1h-1zM580,514h1v1h-1zM580,519h1v1h-1zM580,525h1v1h-1zM580,529h1v1h-1zM580,534h1v1h-1zM580,539h1v1h-1zM580,543h1v1h-1zM580,548h1v1h-1zM580,553h1v1h-1zM580,557h1v1h-1zM580,562h1v1h-1zM580,567h1v1h-1zM580,571h1v1h-1zM580,576h1v1h-1zM580,581h1v1h-1zM580,585h1v1h-1zM580,590h1v1h-1zM580,595h1v1h-1zM580,599h1v1h-1zM580,604h1v1h-1zM580,609h1v1h-1zM580,613h1v1h-1zM580,618h1v1h-1zM580,623h1v1h-1zM580,627h1v1h-1zM580,632h1v1h-1zM580,636h1v1h-1zM580,646h1v1h-1zM580,650h1v1h-1zM580,655h1v1h-1zM580,660h1v1h-1zM580,664h1v1h-1zM580,669h1v1h-1zM580,674h1v1h-1zM580,678h1v1h-1zM580,683h1v1h-1zM580,688h1v1h-1zM580,692h1v1h-1zM580,697h1v1h-1zM580,702h1v1h-1zM580,706h1v1h-1zM580,711h1v1h-1zM580,716h1v1h-1zM580,720h1v1h-1zM580,725h1v1h-1zM580,730h1v1h-1zM580,734h1v1h-1zM580,739h1v1h-1zM580,744h1v1h-1zM580,748h1v1h-1zM580,753h1v1h-1zM580,759h1v1h-1zM580,763h1v1h-1zM580,768h1v1h-1zM580,773h1v1h-1zM580,777h1v1h-1zM580,782h1v1h-1zM580,787h1v1h-1zM580,791h1v1h-1zM580,796h1v1h-1zM580,801h1v1h-1zM580,805h1v1h-1zM580,810h1v1h-1zM580,815h1v1h-1zM580,819h1v1h-1zM580,824h1v1h-1zM580,829h1v1h-1zM580,833h1v1h-1zM580,838h1v1h-1zM580,843h1v1h-1zM580,847h1v1h-1zM580,852h1v1h-1zM580,857h1v1h-1zM580,861h1v1h-1zM580,866h1v1h-1zM580,870h1v1h-1zM580,880h1v1h-1zM580,884h1v1h-1zM580,889h1v1h-1zM580,894h1v1h-1zM580,898h1v1h-1zM580,903h1v1h-1zM580,908h1v1h-1zM580,912h1v1h-1zM580,917h1v1h-1zM580,922h1v1h-1zM580,926h1v1h-1zM580,931h1v1h-1zM580,936h1v1h-1zM580,940h1v1h-1zM580,945h1v1h-1zM580,950h1v1h-1zM580,954h1v1h-1zM580,959h1v1h-1zM580,964h1v1h-1zM580,968h1v1h-1zM580,973h1v1h-1zM580,978h1v1h-1zM580,982h1v1h-1zM580,987h1v1h-1zM755,57h1v1h-1zM755,61h1v1h-1zM755,66h1v1h-1zM755,71h1v1h-1zM755,75h1v1h-1zM755,80h1v1h-1zM755,85h1v1h-1zM755,89h1v1h-1zM755,94h1v1h-1zM755,99h1v1h-1zM755,103h1v1h-1zM755,108h1v1h-1zM755,113h1v1h-1zM755,117h1v1h-1zM755,122h1v1h-1zM755,127h1v1h-1zM755,131h1v1h-1zM755,136h1v1h-1zM755,141h1v1h-1zM755,145h1v1h-1zM755,150h1v1h-1zM755,155h1v1h-1zM755,159h1v1h-1zM755,164h1v1h-1zM755,168h1v1h-1zM755,178h1v1h-1zM755,182h1v1h-1zM755,187h1v1h-1zM755,192h1v1h-1zM755,196h1v1h-1zM755,201h1v1h-1zM755,206h1v1h-1zM755,210h1v1h-1zM755,215h1v1h-1zM755,220h1v1h-1zM755,224h1v1h-1zM755,229h1v1h-1zM755,234h1v1h-1zM755,238h1v1h-1zM755,243h1v1h-1zM755,248h1v1h-1zM755,252h1v1h-1zM755,257h1v1h-1zM755,262h1v1h-1zM755,266h1v1h-1zM755,271h1v1h-1zM755,276h1v1h-1zM755,280h1v1h-1zM755,285h1v1h-1zM755,291h1v1h-1zM755,295h1v1h-1zM755,300h1v1h-1zM755,305h1v1h-1zM755,309h1v1h-1zM755,314h1v1h-1zM755,319h1v1h-1zM755,323h1v1h-1zM755,328h1v1h-1zM755,333h1v1h-1zM755,337h1v1h-1zM755,342h1v1h-1zM755,347h1v1h-1zM755,351h1v1h-1zM755,356h1v1h-1zM755,361h1v1h-1zM755,365h1v1h-1zM755,370h1v1h-1zM755,375h1v1h-1zM755,379h1v1h-1zM755,384h1v1h-1zM755,389h1v1h-1zM755,393h1v1h-1zM755,398h1v1h-1zM755,402h1v1h-1zM755,412h1v1h-1zM755,416h1v1h-1zM755,421h1v1h-1zM755,426h1v1h-1zM755,430h1v1h-1zM755,435h1v1h-1zM755,440h1v1h-1zM755,444h1v1h-1zM755,449h1v1h-1zM755,454h1v1h-1zM755,458h1v1h-1zM755,463h1v1h-1zM755,468h1v1h-1zM755,472h1v1h-1zM755,477h1v1h-1zM755,482h1v1h-1zM755,486h1v1h-1zM755,491h1v1h-1zM755,496h1v1h-1zM755,500h1v1h-1zM755,505h1v1h-1zM755,510h1v1h-1zM755,514h1v1h-1zM755,519h1v1h-1zM755,525h1v1h-1zM755,529h1v1h-1zM755,534h1v1h-1zM755,539h1v1h-1zM755,543h1v1h-1zM755,548h1v1h-1zM755,553h1v1h-1zM755,557h1v1h-1zM755,562h1v1h-1zM755,567h1v1h-1zM755,571h1v1h-1zM755,576h1v1h-1zM755,581h1v1h-1zM755,585h1v1h-1zM755,590h1v1h-1zM755,595h1v1h-1zM755,599h1v1h-1zM755,604h1v1h-1zM755,609h1v1h-1zM755,613h1v1h-1zM755,618h1v1h-1zM755,623h1v1h-1zM755,627h1v1h-1zM755,632h1v1h-1zM755,636h1v1h-1zM755,646h1v1h-1zM755,650h1v1h-1zM755,655h1v1h-1zM755,660h1v1h-1zM755,664h1v1h-1zM755,669h1v1h-1zM755,674h1v1h-1zM755,678h1v1h-1zM755,683h1v1h-1zM755,688h1v1h-1zM755,692h1v1h-1zM755,697h1v1h-1zM755,702h1v1h-1zM755,706h1v1h-1zM755,711h1v1h-1zM755,716h1v1h-1zM755,720h1v1h-1zM755,725h1v1h-1zM755,730h1v1h-1zM755,734h1v1h-1zM755,739h1v1h-1zM755,744h1v1h-1zM755,748h1v1h-1zM755,753h1v1h-1zM755,759h1v1h-1zM755,763h1v1h-1zM755,768h1v1h-1zM755,773h1v1h-1zM755,777h1v1h-1zM755,782h1v1h-1zM755,787h1v1h-1zM755,791h1v1h-1zM755,796h1v1h-1zM755,801h1v1h-1zM755,805h1v1h-1zM755,810h1v1h-1zM755,815h1v1h-1zM755,819h1v1h-1zM755,824h1v1h-1zM755,829h1v1h-1zM755,833h1v1h-1zM755,838h1v1h-1zM755,843h1v1h-1zM755,847h1v1h-1zM755,852h1v1h-1zM755,857h1v1h-1zM755,861h1v1h-1zM755,866h1v1h-1zM755,870h1v1h-1zM755,880h1v1h-1zM755,884h1v1h-1zM755,889h1v1h-1zM755,894h1v1h-1zM755,898h1v1h-1zM755,903h1v1h-1zM755,908h1v1h-1zM755,912h1v1h-1zM755,917h1v1h-1zM755,922h1v1h-1zM755,926h1v1h-1zM755,931h1v1h-1zM755,936h1v1h-1zM755,940h1v1h-1zM755,945h1v1h-1zM755,950h1v1h-1zM755,954h1v1h-1zM755,959h1v1h-1zM755,964h1v1h-1zM755,968h1v1h-1zM755,973h1v1h-1zM755,978h1v1h-1zM755,982h1v1h-1zM755,987h1v1h-1zM930,57h1v1h-1zM930,61h1v1h-1zM930,66h1v1h-1zM930,71h1v1h-1zM930,75h1v1h-1zM930,80h1v1h-1zM930,85h1v1h-1zM930,89h1v1h-1zM930,94h1v1h-1zM930,99h1v1h-1zM930,103h1v1h-1zM930,108h1v1h-1zM930,113h1v1h-1zM930,117h1v1h-1zM930,122h1v1h-1zM930,127h1v1h-1zM930,131h1v1h-1zM930,136h1v1h-1zM930,141h1v1h-1zM930,145h1v1h-1zM930,150h1v1h-1zM930,155h1v1h-1zM930,159h1v1h-1zM930,164h1v1h-1zM930,168h1v1h-1zM930,178h1v1h-1zM930,182h1v1h-1zM930,187h1v1h-1zM930,192h1v1h-1zM930,196h1v1h-1zM930,201h1v1h-1zM930,206h1v1h-1zM930,210h1v1h-1zM930,215h1v1h-1zM930,220h1v1h-1zM930,224h1v1h-1zM930,229h1v1h-1zM930,234h1v1h-1zM930,238h1v1h-1zM930,243h1v1h-1zM930,248h1v1h-1zM930,252h1v1h-1zM930,257h1v1h-1zM930,262h1v1h-1zM930,266h1v1h-1zM930,271h1v1h-1zM930,276h1v1h-1zM930,280h1v1h-1zM930,285h1v1h-1zM930,291h1v1h-1zM930,295h1v1h-1zM930,300h1v1h-1zM930,305h1v1h-1zM930,309h1v1h-1zM930,314h1v1h-1zM930,319h1v1h-1zM930,323h1v1h-1zM930,328h1v1h-1zM930,333h1v1h-1zM930,337h1v1h-1zM930,342h1v1h-1zM930,347h1v1h-1zM930,351h1v1h-1zM930,356h1v1h-1zM930,361h1v1h-1zM930,365h1v1h-1zM930,370h1v1h-1zM930,375h1v1h-1zM930,379h1v1h-1zM930,384h1v1h-1zM930,389h1v1h-1zM930,393h1v1h-1zM930,398h1v1h-1zM930,402h1v1h-1zM930,412h1v1h-1zM930,416h1v1h-1zM930,421h1v1h-1zM930,426h1v1h-1zM930,430h1v1h-1zM930,435h1v1h-1zM930,440h1v1h-1zM930,444h1v1h-1zM930,449h1v1h-1zM930,454h1v1h-1zM930,458h1v1h-1zM930,463h1v1h-1zM930,468h1v1h-1zM930,472h1v1h-1zM930,477h1v1h-1zM930,482h1v1h-1zM930,486h1v1h-1zM930,491h1v1h-1zM930,496h1v1h-1zM930,500h1v1h-1zM930,505h1v1h-1zM930,510h1v1h-1zM930,514h1v1h-1zM930,519h1v1h-1zM930,525h1v1h-1zM930,529h1v1h-1zM930,534h1v1h-1zM930,539h1v1h-1zM930,543h1v1h-1zM930,548h1v1h-1zM930,553h1v1h-1zM930,557h1v1h-1zM930,562h1v1h-1zM930,567h1v1h-1zM930,571h1v1h-1zM930,576h1v1h-1zM930,581h1v1h-1zM930,585h1v1h-1zM930,590h1v1h-1zM930,595h1v1h-1zM930,599h1v1h-1zM930,604h1v1h-1zM930,609h1v1h-1zM930,613h1v1h-1zM930,618h1v1h-1zM930,623h1v1h-1zM930,627h1v1h-1zM930,632h1v1h-1zM930,636h1v1h-1zM930,646h1v1h-1zM930,650h1v1h-1zM930,655h1v1h-1zM930,660h1v1h-1zM930,664h1v1h-1zM930,669h1v1h-1zM930,674h1v1h-1zM930,678h1v1h-1zM930,683h1v1h-1zM930,688h1v1h-1zM930,692h1v1h-1zM930,697h1v1h-1zM930,702h1v1h-1zM930,706h1v1h-1zM930,711h1v1h-1zM930,716h1v1h-1zM930,720h1v1h-1zM930,725h1v1h-1zM930,730h1v1h-1zM930,734h1v1h-1zM930,739h1v1h-1zM930,744h1v1h-1zM930,748h1v1h-1zM930,753h1v1h-1zM930,759h1v1h-1zM930,763h1v1h-1zM930,768h1v1h-1zM930,773h1v1h-1zM930,777h1v1h-1zM930,782h1v1h-1zM930,787h1v1h-1zM930,791h1v1h-1zM930,796h1v1h-1zM930,801h1v1h-1zM930,805h1v1h-1zM930,810h1v1h-1zM930,815h1v1h-1zM930,819h1v1h-1zM930,824h1v1h-1zM930,829h1v1h-1zM930,833h1v1h-1zM930,838h1v1h-1zM930,843h1v1h-1zM930,847h1v1h-1zM930,852h1v1h-1zM930,857h1v1h-1zM930,861h1v1h-1zM930,866h1v1h-1zM930,870h1v1h-1zM930,880h1v1h-1zM930,884h1v1h-1zM930,889h1v1h-1zM930,894h1v1h-1zM930,898h1v1h-1zM930,903h1v1h-1zM930,908h1v1h-1zM930,912h1v1h-1zM930,917h1v1h-1zM930,922h1v1h-1zM930,926h1v1h-1zM930,931h1v1h-1zM930,936h1v1h-1zM930,940h1v1h-1zM930,945h1v1h-1zM930,950h1v1h-1zM930,954h1v1h-1zM930,959h1v1h-1zM930,964h1v1h-1zM930,968h1v1h-1zM930,973h1v1h-1zM930,978h1v1h-1zM930,982h1v1h-1zM930,987h1v1h-1zM1104,57h1v1h-1zM1104,61h1v1h-1zM1104,66h1v1h-1zM1104,71h1v1h-1zM1104,75h1v1h-1zM1104,80h1v1h-1zM1104,85h1v1h-1zM1104,89h1v1h-1zM1104,94h1v1h-1zM1104,99h1v1h-1zM1104,103h1v1h-1zM1104,108h1v1h-1zM1104,113h1v1h-1zM1104,117h1v1h-1zM1104,122h1v1h-1zM1104,127h1v1h-1zM1104,131h1v1h-1zM1104,136h1v1h-1zM1104,141h1v1h-1zM1104,145h1v1h-1zM1104,150h1v1h-1zM1104,155h1v1h-1zM1104,159h1v1h-1zM1104,164h1v1h-1zM1104,168h1v1h-1zM1104,178h1v1h-1zM1104,182h1v1h-1zM1104,187h1v1h-1zM1104,192h1v1h-1zM1104,196h1v1h-1zM1104,201h1v1h-1zM1104,206h1v1h-1zM1104,210h1v1h-1zM1104,215h1v1h-1zM1104,220h1v1h-1zM1104,224h1v1h-1zM1104,229h1v1h-1zM1104,234h1v1h-1zM1104,238h1v1h-1zM1104,243h1v1h-1zM1104,248h1v1h-1zM1104,252h1v1h-1zM1104,257h1v1h-1zM1104,262h1v1h-1zM1104,266h1v1h-1zM1104,271h1v1h-1zM1104,276h1v1h-1zM1104,280h1v1h-1zM1104,285h1v1h-1zM1104,291h1v1h-1zM1104,295h1v1h-1zM1104,300h1v1h-1zM1104,305h1v1h-1zM1104,309h1v1h-1zM1104,314h1v1h-1zM1104,319h1v1h-1zM1104,323h1v1h-1zM1104,328h1v1h-1zM1104,333h1v1h-1zM1104,337h1v1h-1zM1104,342h1v1h-1zM1104,347h1v1h-1zM1104,351h1v1h-1zM1104,356h1v1h-1zM1104,361h1v1h-1zM1104,365h1v1h-1zM1104,370h1v1h-1zM1104,375h1v1h-1zM1104,379h1v1h-1zM1104,384h1v1h-1zM1104,389h1v1h-1zM1104,393h1v1h-1zM1104,398h1v1h-1zM1104,402h1v1h-1zM1104,412h1v1h-1zM1104,416h1v1h-1zM1104,421h1v1h-1zM1104,426h1v1h-1zM1104,430h1v1h-1zM1104,435h1v1h-1zM1104,440h1v1h-1zM1104,444h1v1h-1zM1104,449h1v1h-1zM1104,454h1v1h-1zM1104,458h1v1h-1zM1104,463h1v1h-1zM1104,468h1v1h-1zM1104,472h1v1h-1zM1104,477h1v1h-1zM1104,482h1v1h-1zM1104,486h1v1h-1zM1104,491h1v1h-1zM1104,496h1v1h-1zM1104,500h1v1h-1zM1104,505h1v1h-1zM1104,510h1v1h-1zM1104,514h1v1h-1zM1104,519h1v1h-1zM1104,525h1v1h-1zM1104,529h1v1h-1zM1104,534h1v1h-1zM1104,539h1v1h-1zM1104,543h1v1h-1zM1104,548h1v1h-1zM1104,553h1v1h-1zM1104,557h1v1h-1zM1104,562h1v1h-1zM1104,567h1v1h-1zM1104,571h1v1h-1zM1104,576h1v1h-1zM1104,581h1v1h-1zM1104,585h1v1h-1zM1104,590h1v1h-1zM1104,595h1v1h-1zM1104,599h1v1h-1zM1104,604h1v1h-1zM1104,609h1v1h-1zM1104,613h1v1h-1zM1104,618h1v1h-1zM1104,623h1v1h-1zM1104,627h1v1h-1zM1104,632h1v1h-1zM1104,636h1v1h-1zM1104,646h1v1h-1zM1104,650h1v1h-1zM1104,655h1v1h-1zM1104,660h1v1h-1zM1104,664h1v1h-1zM1104,669h1v1h-1zM1104,674h1v1h-1zM1104,678h1v1h-1zM1104,683h1v1h-1zM1104,688h1v1h-1zM1104,692h1v1h-1zM1104,697h1v1h-1zM1104,702h1v1h-1zM1104,706h1v1h-1zM1104,711h1v1h-1zM1104,716h1v1h-1zM1104,720h1v1h-1zM1104,725h1v1h-1zM1104,730h1v1h-1zM1104,734h1v1h-1zM1104,739h1v1h-1zM1104,744h1v1h-1zM1104,748h1v1h-1zM1104,753h1v1h-1zM1104,759h1v1h-1zM1104,763h1v1h-1zM1104,768h1v1h-1zM1104,773h1v1h-1zM1104,777h1v1h-1zM1104,782h1v1h-1zM1104,787h1v1h-1zM1104,791h1v1h-1zM1104,796h1v1h-1zM1104,801h1v1h-1zM1104,805h1v1h-1zM1104,810h1v1h-1zM1104,815h1v1h-1zM1104,819h1v1h-1zM1104,824h1v1h-1zM1104,829h1v1h-1zM1104,833h1v1h-1zM1104,838h1v1h-1zM1104,843h1v1h-1zM1104,847h1v1h-1zM1104,852h1v1h-1zM1104,857h1v1h-1zM1104,861h1v1h-1zM1104,866h1v1h-1zM1104,870h1v1h-1zM1104,880h1v1h-1zM1104,884h1v1h-1zM1104,889h1v1h-1zM1104,894h1v1h-1zM1104,898h1v1h-1zM1104,903h1v1h-1zM1104,908h1v1h-1zM1104,912h1v1h-1zM1104,917h1v1h-1zM1104,922h1v1h-1zM1104,926h1v1h-1zM1104,931h1v1h-1zM1104,936h1v1h-1zM1104,940h1v1h-1zM1104,945h1v1h-1zM1104,950h1v1h-1zM1104,954h1v1h-1zM1104,959h1v1h-1zM1104,964h1v1h-1zM1104,968h1v1h-1zM1104,973h1v1h-1zM1104,978h1v1h-1zM1104,982h1v1h-1zM1104,987h1v1h-1zM1279,57h1v1h-1zM1279,61h1v1h-1zM1279,66h1v1h-1zM1279,71h1v1h-1zM1279,75h1v1h-1zM1279,80h1v1h-1zM1279,85h1v1h-1zM1279,89h1v1h-1zM1279,94h1v1h-1zM1279,99h1v1h-1zM1279,103h1v1h-1zM1279,108h1v1h-1zM1279,113h1v1h-1zM1279,117h1v1h-1zM1279,122h1v1h-1zM1279,127h1v1h-1zM1279,131h1v1h-1zM1279,136h1v1h-1zM1279,141h1v1h-1zM1279,145h1v1h-1zM1279,150h1v1h-1zM1279,155h1v1h-1zM1279,159h1v1h-1zM1279,164h1v1h-1zM1279,168h1v1h-1zM1279,178h1v1h-1zM1279,182h1v1h-1zM1279,187h1v1h-1zM1279,192h1v1h-1zM1279,196h1v1h-1zM1279,201h1v1h-1zM1279,206h1v1h-1zM1279,210h1v1h-1zM1279,215h1v1h-1zM1279,220h1v1h-1zM1279,224h1v1h-1zM1279,229h1v1h-1zM1279,234h1v1h-1zM1279,238h1v1h-1zM1279,243h1v1h-1zM1279,248h1v1h-1zM1279,252h1v1h-1zM1279,257h1v1h-1zM1279,262h1v1h-1zM1279,266h1v1h-1zM1279,271h1v1h-1zM1279,276h1v1h-1zM1279,280h1v1h-1zM1279,285h1v1h-1zM1279,291h1v1h-1zM1279,295h1v1h-1zM1279,300h1v1h-1zM1279,305h1v1h-1zM1279,309h1v1h-1zM1279,314h1v1h-1zM1279,319h1v1h-1zM1279,323h1v1h-1zM1279,328h1v1h-1zM1279,333h1v1h-1zM1279,337h1v1h-1zM1279,342h1v1h-1zM1279,347h1v1h-1zM1279,351h1v1h-1zM1279,356h1v1h-1zM1279,361h1v1h-1zM1279,365h1v1h-1zM1279,370h1v1h-1zM1279,375h1v1h-1zM1279,379h1v1h-1zM1279,384h1v1h-1zM1279,389h1v1h-1zM1279,393h1v1h-1zM1279,398h1v1h-1zM1279,402h1v1h-1zM1279,412h1v1h-1zM1279,416h1v1h-1zM1279,421h1v1h-1zM1279,426h1v1h-1zM1279,430h1v1h-1zM1279,435h1v1h-1zM1279,440h1v1h-1zM1279,444h1v1h-1zM1279,449h1v1h-1zM1279,454h1v1h-1zM1279,458h1v1h-1zM1279,463h1v1h-1zM1279,468h1v1h-1zM1279,472h1v1h-1zM1279,477h1v1h-1zM1279,482h1v1h-1zM1279,486h1v1h-1zM1279,491h1v1h-1zM1279,496h1v1h-1zM1279,500h1v1h-1zM1279,505h1v1h-1zM1279,510h1v1h-1zM1279,514h1v1h-1zM1279,519h1v1h-1zM1279,525h1v1h-1zM1279,529h1v1h-1zM1279,534h1v1h-1zM1279,539h1v1h-1zM1279,543h1v1h-1zM1279,548h1v1h-1zM1279,553h1v1h-1zM1279,557h1v1h-1zM1279,562h1v1h-1zM1279,567h1v1h-1zM1279,571h1v1h-1zM1279,576h1v1h-1zM1279,581h1v1h-1zM1279,585h1v1h-1zM1279,590h1v1h-1zM1279,595h1v1h-1zM1279,599h1v1h-1zM1279,604h1v1h-1zM1279,609h1v1h-1zM1279,613h1v1h-1zM1279,618h1v1h-1zM1279,623h1v1h-1zM1279,627h1v1h-1zM1279,632h1v1h-1zM1279,636h1v1h-1zM1279,646h1v1h-1zM1279,650h1v1h-1zM1279,655h1v1h-1zM1279,660h1v1h-1zM1279,664h1v1h-1zM1279,669h1v1h-1zM1279,674h1v1h-1zM1279,678h1v1h-1zM1279,683h1v1h-1zM1279,688h1v1h-1zM1279,692h1v1h-1zM1279,697h1v1h-1zM1279,702h1v1h-1zM1279,706h1v1h-1zM1279,711h1v1h-1zM1279,716h1v1h-1zM1279,720h1v1h-1zM1279,725h1v1h-1zM1279,730h1v1h-1zM1279,734h1v1h-1zM1279,739h1v1h-1zM1279,744h1v1h-1zM1279,748h1v1h-1zM1279,753h1v1h-1zM1279,759h1v1h-1zM1279,763h1v1h-1zM1279,768h1v1h-1zM1279,773h1v1h-1zM1279,777h1v1h-1zM1279,782h1v1h-1zM1279,787h1v1h-1zM1279,791h1v1h-1zM1279,796h1v1h-1zM1279,801h1v1h-1zM1279,805h1v1h-1zM1279,810h1v1h-1zM1279,815h1v1h-1zM1279,819h1v1h-1zM1279,824h1v1h-1zM1279,829h1v1h-1zM1279,833h1v1h-1zM1279,838h1v1h-1zM1279,843h1v1h-1zM1279,847h1v1h-1zM1279,852h1v1h-1zM1279,857h1v1h-1zM1279,861h1v1h-1zM1279,866h1v1h-1zM1279,870h1v1h-1zM1279,880h1v1h-1zM1279,884h1v1h-1zM1279,889h1v1h-1zM1279,894h1v1h-1zM1279,898h1v1h-1zM1279,903h1v1h-1zM1279,908h1v1h-1zM1279,912h1v1h-1zM1279,917h1v1h-1zM1279,922h1v1h-1zM1279,926h1v1h-1zM1279,931h1v1h-1zM1279,936h1v1h-1zM1279,940h1v1h-1zM1279,945h1v1h-1zM1279,950h1v1h-1zM1279,954h1v1h-1zM1279,959h1v1h-1zM1279,964h1v1h-1zM1279,968h1v1h-1zM1279,973h1v1h-1zM1279,978h1v1h-1zM1279,982h1v1h-1zM1279,987h1v1h-1zM1454,57h1v1h-1zM1454,61h1v1h-1zM1454,66h1v1h-1zM1454,71h1v1h-1zM1454,75h1v1h-1zM1454,80h1v1h-1zM1454,85h1v1h-1zM1454,89h1v1h-1zM1454,94h1v1h-1zM1454,99h1v1h-1zM1454,103h1v1h-1zM1454,108h1v1h-1zM1454,113h1v1h-1zM1454,117h1v1h-1zM1454,122h1v1h-1zM1454,127h1v1h-1zM1454,131h1v1h-1zM1454,136h1v1h-1zM1454,141h1v1h-1zM1454,145h1v1h-1zM1454,150h1v1h-1zM1454,155h1v1h-1zM1454,159h1v1h-1zM1454,164h1v1h-1zM1454,168h1v1h-1zM1454,178h1v1h-1zM1454,182h1v1h-1zM1454,187h1v1h-1zM1454,192h1v1h-1zM1454,196h1v1h-1zM1454,201h1v1h-1zM1454,206h1v1h-1zM1454,210h1v1h-1zM1454,215h1v1h-1zM1454,220h1v1h-1zM1454,224h1v1h-1zM1454,229h1v1h-1zM1454,234h1v1h-1zM1454,238h1v1h-1zM1454,243h1v1h-1zM1454,248h1v1h-1zM1454,252h1v1h-1zM1454,257h1v1h-1zM1454,262h1v1h-1zM1454,266h1v1h-1zM1454,271h1v1h-1zM1454,276h1v1h-1zM1454,280h1v1h-1zM1454,285h1v1h-1zM1454,291h1v1h-1zM1454,295h1v1h-1zM1454,300h1v1h-1zM1454,305h1v1h-1zM1454,309h1v1h-1zM1454,314h1v1h-1zM1454,319h1v1h-1zM1454,323h1v1h-1zM1454,328h1v1h-1zM1454,333h1v1h-1zM1454,337h1v1h-1zM1454,342h1v1h-1zM1454,347h1v1h-1zM1454,351h1v1h-1zM1454,356h1v1h-1zM1454,361h1v1h-1zM1454,365h1v1h-1zM1454,370h1v1h-1zM1454,375h1v1h-1zM1454,379h1v1h-1zM1454,384h1v1h-1zM1454,389h1v1h-1zM1454,393h1v1h-1zM1454,398h1v1h-1zM1454,402h1v1h-1zM1454,412h1v1h-1zM1454,416h1v1h-1zM1454,421h1v1h-1zM1454,426h1v1h-1zM1454,430h1v1h-1zM1454,435h1v1h-1zM1454,440h1v1h-1zM1454,444h1v1h-1zM1454,449h1v1h-1zM1454,454h1v1h-1zM1454,458h1v1h-1zM1454,463h1v1h-1zM1454,468h1v1h-1zM1454,472h1v1h-1zM1454,477h1v1h-1zM1454,482h1v1h-1zM1454,486h1v1h-1zM1454,491h1v1h-1zM1454,496h1v1h-1zM1454,500h1v1h-1zM1454,505h1v1h-1zM1454,510h1v1h-1zM1454,514h1v1h-1zM1454,519h1v1h-1zM1454,525h1v1h-1zM1454,529h1v1h-1zM1454,534h1v1h-1zM1454,539h1v1h-1zM1454,543h1v1h-1zM1454,548h1v1h-1zM1454,553h1v1h-1zM1454,557h1v1h-1zM1454,562h1v1h-1zM1454,567h1v1h-1zM1454,571h1v1h-1zM1454,576h1v1h-1zM1454,581h1v1h-1zM1454,585h1v1h-1zM1454,590h1v1h-1zM1454,595h1v1h-1zM1454,599h1v1h-1zM1454,604h1v1h-1zM1454,609h1v1h-1zM1454,613h1v1h-1zM1454,618h1v1h-1zM1454,623h1v1h-1zM1454,627h1v1h-1zM1454,632h1v1h-1zM1454,636h1v1h-1zM1454,646h1v1h-1zM1454,650h1v1h-1zM1454,655h1v1h-1zM1454,660h1v1h-1zM1454,664h1v1h-1zM1454,669h1v1h-1zM1454,674h1v1h-1zM1454,678h1v1h-1zM1454,683h1v1h-1zM1454,688h1v1h-1zM1454,692h1v1h-1zM1454,697h1v1h-1zM1454,702h1v1h-1zM1454,706h1v1h-1zM1454,711h1v1h-1zM1454,716h1v1h-1zM1454,720h1v1h-1zM1454,725h1v1h-1zM1454,730h1v1h-1zM1454,734h1v1h-1zM1454,739h1v1h-1zM1454,744h1v1h-1zM1454,748h1v1h-1zM1454,753h1v1h-1zM1454,759h1v1h-1zM1454,763h1v1h-1zM1454,768h1v1h-1zM1454,773h1v1h-1zM1454,777h1v1h-1zM1454,782h1v1h-1zM1454,787h1v1h-1zM1454,791h1v1h-1zM1454,796h1v1h-1zM1454,801h1v1h-1zM1454,805h1v1h-1zM1454,810h1v1h-1zM1454,815h1v1h-1zM1454,819h1v1h-1zM1454,824h1v1h-1zM1454,829h1v1h-1zM1454,833h1v1h-1zM1454,838h1v1h-1zM1454,843h1v1h-1zM1454,847h1v1h-1zM1454,852h1v1h-1zM1454,857h1v1h-1zM1454,861h1v1h-1zM1454,866h1v1h-1zM1454,870h1v1h-1zM1454,880h1v1h-1zM1454,884h1v1h-1zM1454,889h1v1h-1zM1454,894h1v1h-1zM1454,898h1v1h-1zM1454,903h1v1h-1zM1454,908h1v1h-1zM1454,912h1v1h-1zM1454,917h1v1h-1zM1454,922h1v1h-1zM1454,926h1v1h-1zM1454,931h1v1h-1zM1454,936h1v1h-1zM1454,940h1v1h-1zM1454,945h1v1h-1zM1454,950h1v1h-1zM1454,954h1v1h-1zM1454,959h1v1h-1zM1454,964h1v1h-1zM1454,968h1v1h-1zM1454,973h1v1h-1zM1454,978h1v1h-1zM1454,982h1v1h-1zM1454,987h1v1h-1zM1629,57h1v1h-1zM1629,61h1v1h-1zM1629,66h1v1h-1zM1629,71h1v1h-1zM1629,75h1v1h-1zM1629,80h1v1h-1zM1629,85h1v1h-1zM1629,89h1v1h-1zM1629,94h1v1h-1zM1629,99h1v1h-1zM1629,103h1v1h-1zM1629,108h1v1h-1zM1629,113h1v1h-1zM1629,117h1v1h-1zM1629,122h1v1h-1zM1629,127h1v1h-1zM1629,131h1v1h-1zM1629,136h1v1h-1zM1629,141h1v1h-1zM1629,145h1v1h-1zM1629,150h1v1h-1zM1629,155h1v1h-1zM1629,159h1v1h-1zM1629,164h1v1h-1zM1629,168h1v1h-1zM1629,178h1v1h-1zM1629,182h1v1h-1zM1629,187h1v1h-1zM1629,192h1v1h-1zM1629,196h1v1h-1zM1629,201h1v1h-1zM1629,206h1v1h-1zM1629,210h1v1h-1zM1629,215h1v1h-1zM1629,220h1v1h-1zM1629,224h1v1h-1zM1629,229h1v1h-1zM1629,234h1v1h-1zM1629,238h1v1h-1zM1629,243h1v1h-1zM1629,248h1v1h-1zM1629,252h1v1h-1zM1629,257h1v1h-1zM1629,262h1v1h-1zM1629,266h1v1h-1zM1629,271h1v1h-1zM1629,276h1v1h-1zM1629,280h1v1h-1zM1629,285h1v1h-1zM1629,291h1v1h-1zM1629,295h1v1h-1zM1629,300h1v1h-1zM1629,305h1v1h-1zM1629,309h1v1h-1zM1629,314h1v1h-1zM1629,319h1v1h-1zM1629,323h1v1h-1zM1629,328h1v1h-1zM1629,333h1v1h-1zM1629,337h1v1h-1zM1629,342h1v1h-1zM1629,347h1v1h-1zM1629,351h1v1h-1zM1629,356h1v1h-1zM1629,361h1v1h-1zM1629,365h1v1h-1zM1629,370h1v1h-1zM1629,375h1v1h-1zM1629,379h1v1h-1zM1629,384h1v1h-1zM1629,389h1v1h-1zM1629,393h1v1h-1zM1629,398h1v1h-1zM1629,402h1v1h-1zM1629,412h1v1h-1zM1629,416h1v1h-1zM1629,421h1v1h-1zM1629,426h1v1h-1zM1629,430h1v1h-1zM1629,435h1v1h-1zM1629,440h1v1h-1zM1629,444h1v1h-1zM1629,449h1v1h-1zM1629,454h1v1h-1zM1629,458h1v1h-1zM1629,463h1v1h-1zM1629,468h1v1h-1zM1629,472h1v1h-1zM1629,477h1v1h-1zM1629,482h1v1h-1zM1629,486h1v1h-1zM1629,491h1v1h-1zM1629,496h1v1h-1zM1629,500h1v1h-1zM1629,505h1v1h-1zM1629,510h1v1h-1zM1629,514h1v1h-1zM1629,519h1v1h-1zM1629,525h1v1h-1zM1629,529h1v1h-1zM1629,534h1v1h-1zM1629,539h1v1h-1zM1629,543h1v1h-1zM1629,548h1v1h-1zM1629,553h1v1h-1zM1629,557h1v1h-1zM1629,562h1v1h-1zM1629,567h1v1h-1zM1629,571h1v1h-1zM1629,576h1v1h-1zM1629,581h1v1h-1zM1629,585h1v1h-1zM1629,590h1v1h-1zM1629,595h1v1h-1zM1629,599h1v1h-1zM1629,604h1v1h-1zM1629,609h1v1h-1zM1629,613h1v1h-1zM1629,618h1v1h-1zM1629,623h1v1h-1zM1629,627h1v1h-1zM1629,632h1v1h-1zM1629,636h1v1h-1zM1629,646h1v1h-1zM1629,650h1v1h-1zM1629,655h1v1h-1zM1629,660h1v1h-1zM1629,664h1v1h-1zM1629,669h1v1h-1zM1629,674h1v1h-1zM1629,678h1v1h-1zM1629,683h1v1h-1zM1629,688h1v1h-1zM1629,692h1v1h-1zM1629,697h1v1h-1zM1629,702h1v1h-1zM1629,706h1v1h-1zM1629,711h1v1h-1zM1629,716h1v1h-1zM1629,720h1v1h-1zM1629,725h1v1h-1zM1629,730h1v1h-1zM1629,734h1v1h-1zM1629,739h1v1h-1zM1629,744h1v1h-1zM1629,748h1v1h-1zM1629,753h1v1h-1zM1629,759h1v1h-1zM1629,763h1v1h-1zM1629,768h1v1h-1zM1629,773h1v1h-1zM1629,777h1v1h-1zM1629,782h1v1h-1zM1629,787h1v1h-1zM1629,791h1v1h-1zM1629,796h1v1h-1zM1629,801h1v1h-1zM1629,805h1v1h-1zM1629,810h1v1h-1zM1629,815h1v1h-1zM1629,819h1v1h-1zM1629,824h1v1h-1zM1629,829h1v1h-1zM1629,833h1v1h-1zM1629,838h1v1h-1zM1629,843h1v1h-1zM1629,847h1v1h-1zM1629,852h1v1h-1zM1629,857h1v1h-1zM1629,861h1v1h-1zM1629,866h1v1h-1zM1629,870h1v1h-1zM1629,880h1v1h-1zM1629,884h1v1h-1zM1629,889h1v1h-1zM1629,894h1v1h-1zM1629,898h1v1h-1zM1629,903h1v1h-1zM1629,908h1v1h-1zM1629,912h1v1h-1zM1629,917h1v1h-1zM1629,922h1v1h-1zM1629,926h1v1h-1zM1629,931h1v1h-1zM1629,936h1v1h-1zM1629,940h1v1h-1zM1629,945h1v1h-1zM1629,950h1v1h-1zM1629,954h1v1h-1zM1629,959h1v1h-1zM1629,964h1v1h-1zM1629,968h1v1h-1zM1629,973h1v1h-1zM1629,978h1v1h-1zM1629,982h1v1h-1zM1629,987h1v1h-1z" fill="#c4c4c4" shape-rendering="crispEdges"/>
<rect x="1710.5" y="95.6" width="36.5" height="16" fill="#000"/>
<rect x="1721.7" y="118.9" width="25.3" height="16" fill="#000"/>
<rect x="1695.5" y="142.2" width="51.5" height="16" fill="#000"/>
<rect x="1721.7" y="165.5" width="25.3" height="16" fill="#000"/>
<rect x="1691.0" y="188.8" width="56.0" height="16" fill="#000"/>
<rect x="1717.2" y="212.1" width="29.8" height="16" fill="#000"/>
<rect x="1706.0" y="235.4" width="41.0" height="16" fill="#000"/>
<rect x="1717.2" y="258.7" width="29.8" height="16" fill="#000"/>
<rect x="1721.7" y="306.3" width="25.3" height="16" fill="#000"/>
<rect x="1710.5" y="329.6" width="36.5" height="16" fill="#000"/>
<rect x="1721.7" y="352.9" width="25.3" height="16" fill="#000"/>
<rect x="1695.5" y="376.2" width="51.5" height="16" fill="#000"/>
<rect x="1721.7" y="399.5" width="25.3" height="16" fill="#000"/>
<rect x="1691.0" y="422.8" width="56.0" height="16" fill="#000"/>
<rect x="1717.2" y="446.1" width="29.8" height="16" fill="#000"/>
<rect x="1706.0" y="469.4" width="41.0" height="16" fill="#000"/>
<rect x="1717.2" y="492.7" width="29.8" height="16" fill="#000"/>
<rect x="1721.7" y="540.3" width="25.3" height="16" fill="#000"/>
<rect x="1710.5" y="563.6" width="36.5" height="16" fill="#000"/>
<rect x="1721.7" y="586.9" width="25.3" height="16" fill="#000"/>
<rect x="1695.5" y="610.2" width="51.5" height="16" fill="#000"/>
<rect x="1721.7" y="633.5" width="25.3" height="16" fill="#000"/>
<rect x="1691.0" y="656.8" width="56.0" height="16" fill="#000"/>
<rect x="1717.2" y="680.1" width="29.8" height="16" fill="#000"/>
<rect x="1706.0" y="703.4" width="41.0" height="16" fill="#000"/>
<rect x="1717.2" y="726.7" width="29.8" height="16" fill="#000"/>
<rect x="1721.7" y="774.3" width="25.3" height="16" fill="#000"/>
<rect x="1710.5" y="797.6" width="36.5" height="16" fill="#000"/>
<rect x="1721.7" y="820.9" width="25.3" height="16" fill="#000"/>
<rect x="1695.5" y="844.2" width="51.5" height="16" fill="#000"/>
<rect x="1721.7" y="867.5" width="25.3" height="16" fill="#000"/>
<rect x="1691.0" y="890.8" width="56.0" height="16" fill="#000"/>
<rect x="1717.2" y="914.1" width="29.8" height="16" fill="#000"/>
<rect x="1706.0" y="937.4" width="41.0" height="16" fill="#000"/>
<rect x="1717.2" y="960.7" width="29.8" height="16" fill="#000"/>
<rect x="44.5" y="973" width="22.0" height="17" fill="#000"/>
<rect x="213.8" y="973" width="33.3" height="17" fill="#000"/>
<rect x="388.7" y="973" width="33.3" height="17" fill="#000"/>
<rect x="559.8" y="973" width="40.8" height="17" fill="#000"/>
<rect x="734.7" y="973" width="40.8" height="17" fill="#000"/>
<rect x="909.6" y="973" width="40.8" height="17" fill="#000"/>
<rect x="1084.5" y="973" width="40.8" height="17" fill="#000"/>
<rect x="1259.4" y="973" width="40.8" height="17" fill="#000"/>
<rect x="1434.3" y="973" width="40.8" height="17" fill="#000"/>
<rect x="1609.2" y="973" width="40.8" height="17" fill="#000"/>
<path d="M3,173h1V174h-1zM4,173h1V174h-1zM5,173h1V174h-1zM6,173h1V174h-1zM7,173h1V174h-1zM8,173h1V174h-1zM9,173h1V174h-1zM10,173h1V174h-1zM11,173h1V174h-1zM12,173h1V174h-1zM13,173h1V174h-1zM14,173h1V174h-1zM15,173h1V174h-1zM16,173h1V174h-1zM17,173h1V174h-1zM18,173h1V174h-1zM19,173h1V174h-1zM20,173h1V174h-1zM21,173h1V174h-1zM22,173h1V174h-1zM23,173h1V174h-1zM24,173h1V174h-1zM25,173h1V174h-1zM26,173h1V174h-1zM27,173h1V174h-1zM28,173h1V174h-1zM29,173h1V174h-1zM30,173h1V174h-1zM31,173h1V174h-1zM32,173h1V174h-1zM33,173h1V174h-1zM34,173h1V174h-1zM35,173h1V174h-1zM36,173h1V174h-1zM37,173h1V174h-1zM38,173h1V174h-1zM39,173h1V174h-1zM40,173h1V174h-1zM41,173h1V174h-1zM42,173h1V174h-1zM43,173h1V174h-1zM44,173h1V174h-1zM45,173h1V174h-1zM46,173h1V174h-1zM47,173h1V174h-1zM48,173h1V174h-1zM49,173h1V174h-1zM50,173h1V174h-1zM51,173h1V174h-1zM52,173h1V174h-1zM53,173h1V174h-1zM54,173h1V174h-1zM55,173h1V174h-1zM56,173h1V174h-1zM57,173h1V174h-1zM58,173h1V174h-1zM59,173h1V174h-1zM60,173h1V174h-1zM61,173h1V174h-1zM62,173h1V174h-1zM63,173h1V174h-1zM64,173h1V174h-1zM65,173h1V174h-1zM66,173h1V174h-1zM67,173h1V174h-1zM68,173h1V174h-1zM69,173h1V174h-1zM70,173h1V174h-1zM71,173h1V174h-1zM72,173h1V174h-1zM73,173h1V174h-1zM74,173h1V174h-1zM75,173h1V174h-1zM76,173h1V174h-1zM77,173h1V174h-1zM78,173h1V174h-1zM79,173h1V174h-1zM80,173h1V174h-1zM81,173h1V174h-1zM82,173h1V174h-1zM83,173h1V174h-1zM84,173h1V174h-1zM85,173h1V174h-1zM86,173h1V174h-1zM87,173h1V174h-1zM88,173h1V174h-1zM89,173h1V174h-1zM90,173h1V174h-1zM91,173h1V174h-1zM92,173h1V174h-1zM93,173h1V174h-1zM94,173h1V174h-1zM95,173h1V174h-1zM96,173h1V174h-1zM97,173h1V174h-1zM98,173h1V174h-1zM99,173h1V174h-1zM100,173h1V174h-1zM101,173h1V174h-1zM102,173h1V174h-1zM103,173h1V174h-1zM104,173h1V174h-1zM105,173h1V174h-1zM106,173h1V174h-1zM107,173h1V174h-1zM108,173h1V174h-1zM109,173h1V174h-1zM110,173h1V174h-1zM111,173h1V174h-1zM112,173h1V174h-1zM113,173h1V174h-1zM114,173h1V174h-1zM115,173h1V174h-1zM116,173h1V174h-1zM117,173h1V174h-1zM118,173h1V174h-1zM119,173h1V174h-1zM120,173h1V174h-1zM121,173h1V174h-1zM122,173h1V174h-1zM123,173h1V174h-1zM124,173h1V174h-1zM125,173h1V174h-1zM126,173h1V174h-1zM127,173h1V174h-1zM128,173h1V174h-1zM129,173h1V174h-1zM130,173h1V174h-1zM131,173h1V174h-1zM132,173h1V174h-1zM133,173h1V174h-1zM134,173h1V174h-1zM135,173h1V174h-1zM136,173h1V174h-1zM137,173h1V174h-1zM138,173h1V174h-1zM139,173h1V174h-1zM140,173h1V174h-1zM141,173h1V174h-1zM142,173h1V174h-1zM143,173h1V174h-1zM144,173h1V174h-1zM145,173h1V174h-1zM146,173h1V174h-1zM147,173h1V174h-1zM148,173h1V174h-1zM149,173h1V174h-1zM150,173h1V174h-1zM151,173h1V174h-1zM152,173h1V174h-1zM153,173h1V174h-1zM154,173h1V174h-1zM155,173h1V174h-1zM156,173h1V174h-1zM157,173h1V174h-1zM158,173h1V174h-1zM159,173h1V174h-1zM160,173h1V174h-1zM161,173h1V174h-1zM162,173h1V174h-1zM163,173h1V174h-1zM164,173h1V174h-1zM165,173h1V174h-1zM166,173h1V174h-1zM167,173h1V174h-1zM168,173h1V174h-1zM169,173h1V174h-1zM170,173h1V174h-1zM171,173h1V174h-1zM172,173h1V174h-1zM173,173h1V174h-1zM174,173h1V174h-1zM175,173h1V174h-1zM176,173h1V174h-1zM177,173h1V174h-1zM178,173h1V174h-1zM179,173h1V174h-1zM180,173h1V174h-1zM181,173h1V174h-1zM182,173h1V174h-1zM183,173h1V174h-1zM184,173h1V174h-1zM185,173h1V174h-1zM186,173h1V174h-1zM187,173h1V174h-1zM188,173h1V174h-1zM189,173h1V174h-1zM190,173h1V174h-1zM191,173h1V174h-1zM192,173h1V174h-1zM193,173h1V174h-1zM194,173h1V174h-1zM195,173h1V174h-1zM196,173h1V174h-1zM197,173h1V174h-1zM198,173h1V174h-1zM199,173h1V174h-1zM200,173h1V174h-1zM201,173h1V174h-1zM202,173h1V174h-1zM203,173h1V174h-1zM204,173h1V174h-1zM205,173h1V174h-1zM206,173h1V174h-1zM207,173h1V174h-1zM208,172h1V174h-1zM209,173h1V176h-1zM210,174h1V177h-1zM211,175h1V178h-1zM212,176h1V179h-1zM213,177h1V180h-1zM214,179h1V182h-1zM215,181h1V184h-1zM216,181h1V185h-1zM217,184h1V187h-1zM218,185h1V187h-1zM219,184h1V186h-1zM220,183h1V185h-1zM221,181h1V184h-1zM222,181h1V182h-1zM223,181h1V182h-1zM224,181h1V182h-1zM225,181h1V182h-1zM226,180h1V182h-1zM227,180h1V181h-1zM228,179h1V181h-1zM229,177h1V180h-1zM230,174h1V178h-1zM231,172h1V176h-1zM232,172h1V173h-1zM233,172h1V173h-1zM234,172h1V173h-1zM235,171h1V172h-1zM236,170h1V172h-1zM237,170h1V172h-1zM238,170h1V173h-1zM239,171h1V173h-1zM240,170h1V173h-1zM241,171h1V173h-1zM242,171h1V172h-1zM243,170h1V172h-1zM244,170h1V172h-1zM245,170h1V171h-1zM246,169h1V171h-1zM247,170h1V171h-1zM248,170h1V174h-1zM249,170h1V172h-1zM250,170h1V171h-1zM251,169h1V171h-1zM252,169h1V171h-1zM253,169h1V171h-1zM254,169h1V171h-1zM255,169h1V172h-1zM256,170h1V172h-1zM257,170h1V172h-1zM258,170h1V173h-1zM259,170h1V173h-1zM260,170h1V173h-1zM261,170h1V173h-1zM262,170h1V172h-1zM263,170h1V172h-1zM264,169h1V172h-1zM265,170h1V172h-1zM266,171h1V173h-1zM267,171h1V173h-1zM268,171h1V173h-1zM269,171h1V174h-1zM270,171h1V173h-1zM271,172h1V175h-1zM272,174h1V176h-1zM273,175h1V177h-1zM274,177h1V178h-1zM275,176h1V179h-1zM276,177h1V180h-1zM277,177h1V180h-1zM278,177h1V180h-1zM279,177h1V180h-1zM280,178h1V180h-1zM281,178h1V181h-1zM282,178h1V180h-1zM283,178h1V181h-1zM284,178h1V180h-1zM285,178h1V180h-1zM286,177h1V180h-1zM287,178h1V180h-1zM288,178h1V180h-1zM289,178h1V180h-1zM290,178h1V180h-1zM291,178h1V181h-1zM292,179h1V181h-1zM293,178h1V181h-1zM294,178h1V181h-1zM295,178h1V181h-1zM296,179h1V181h-1zM297,179h1V181h-1zM298,179h1V181h-1zM299,179h1V181h-1zM300,178h1V181h-1zM301,179h1V181h-1zM302,178h1V181h-1zM303,179h1V181h-1zM304,179h1V182h-1zM305,180h1V182h-1zM306,180h1V182h-1zM307,180h1V182h-1zM308,179h1V181h-1zM309,179h1V181h-1zM310,179h1V182h-1zM311,179h1V181h-1zM312,179h1V181h-1zM313,179h1V182h-1zM314,179h1V182h-1zM315,180h1V182h-1zM316,179h1V181h-1zM317,178h1V181h-1zM318,178h1V181h-1zM319,178h1V180h-1zM320,179h1V180h-1zM321,178h1V181h-1zM322,179h1V181h-1zM323,179h1V182h-1zM324,180h1V182h-1zM325,179h1V182h-1zM326,179h1V182h-1zM327,180h1V182h-1zM328,179h1V182h-1zM329,178h1V181h-1zM330,178h1V181h-1zM331,179h1V180h-1zM332,178h1V180h-1zM333,178h1V181h-1zM334,178h1V181h-1zM335,179h1V181h-1zM336,180h1V182h-1zM337,179h1V182h-1zM338,179h1V182h-1zM339,180h1V182h-1zM340,179h1V182h-1zM341,179h1V181h-1zM342,178h1V181h-1zM343,179h1V182h-1zM344,177h1V182h-1zM345,181h1V183h-1zM346,181h1V183h-1zM347,180h1V183h-1zM348,181h1V183h-1zM349,180h1V183h-1zM350,180h1V183h-1zM351,180h1V183h-1zM352,180h1V183h-1zM353,180h1V182h-1zM354,180h1V182h-1zM355,180h1V183h-1zM356,180h1V182h-1zM357,179h1V182h-1zM358,180h1V182h-1zM359,180h1V182h-1zM360,179h1V181h-1zM361,180h1V182h-1zM362,180h1V183h-1zM363,181h1V184h-1zM364,180h1V183h-1zM365,180h1V183h-1zM366,179h1V181h-1zM367,180h1V182h-1zM368,180h1V182h-1zM369,180h1V182h-1zM370,180h1V182h-1zM371,179h1V183h-1zM372,179h1V182h-1zM373,179h1V182h-1zM374,179h1V183h-1zM375,180h1V182h-1zM376,180h1V183h-1zM377,180h1V182h-1zM378,179h1V182h-1zM379,179h1V182h-1zM380,179h1V182h-1zM381,179h1V182h-1zM382,179h1V181h-1zM383,178h1V181h-1zM384,179h1V181h-1zM385,179h1V181h-1zM386,179h1V181h-1zM387,179h1V182h-1zM388,179h1V181h-1zM389,179h1V181h-1zM390,179h1V181h-1zM391,179h1V181h-1zM392,179h1V181h-1zM393,179h1V181h-1zM394,176h1V182h-1zM395,179h1V182h-1zM396,179h1V182h-1zM397,179h1V182h-1zM398,180h1V182h-1zM399,180h1V182h-1zM400,180h1V182h-1zM401,179h1V182h-1zM402,179h1V182h-1zM403,179h1V181h-1zM404,179h1V184h-1zM405,178h1V181h-1zM406,179h1V181h-1zM407,179h1V182h-1zM408,179h1V182h-1zM409,179h1V182h-1zM410,179h1V181h-1zM411,178h1V180h-1zM412,177h1V180h-1zM413,177h1V180h-1zM414,177h1V179h-1zM415,176h1V179h-1zM416,177h1V179h-1zM417,176h1V179h-1zM418,176h1V180h-1zM419,173h1V180h-1zM420,177h1V180h-1zM421,177h1V183h-1zM422,177h1V180h-1zM423,177h1V180h-1zM424,177h1V181h-1zM425,175h1V182h-1zM426,180h1V183h-1zM427,180h1V184h-1zM428,181h1V185h-1zM429,182h1V186h-1zM430,183h1V187h-1zM431,185h1V188h-1zM432,186h1V190h-1zM433,186h1V192h-1zM434,187h1V192h-1zM435,181h1V189h-1zM436,172h1V184h-1zM437,150h1V173h-1zM438,138h1V151h-1zM439,122h1V138h-1zM440,111h1V122h-1zM441,105h1V112h-1zM442,104h1V106h-1zM443,104h1V105h-1zM444,104h1V107h-1zM445,106h1V109h-1zM446,108h1V113h-1zM447,112h1V118h-1zM448,117h1V124h-1zM449,123h1V128h-1zM450,127h1V132h-1zM451,132h1V136h-1zM452,136h1V140h-1zM453,139h1V143h-1zM454,143h1V146h-1zM455,145h1V149h-1zM456,148h1V151h-1zM457,150h1V153h-1zM458,152h1V155h-1zM459,154h1V157h-1zM460,156h1V158h-1zM461,157h1V160h-1zM462,159h1V161h-1zM463,160h1V162h-1zM464,161h1V163h-1zM465,162h1V163h-1zM466,163h1V164h-1zM467,163h1V165h-1zM468,164h1V166h-1zM469,165h1V166h-1zM470,165h1V167h-1zM471,166h1V167h-1zM472,166h1V168h-1zM473,167h1V168h-1zM474,167h1V168h-1zM475,168h1V169h-1zM476,168h1V169h-1zM477,168h1V169h-1zM478,169h1V170h-1zM479,169h1V170h-1zM480,169h1V170h-1zM481,169h1V170h-1zM482,169h1V170h-1zM483,169h1V170h-1zM484,170h1V171h-1zM485,170h1V171h-1zM486,169h1V171h-1zM487,170h1V171h-1zM488,170h1V171h-1zM489,169h1V171h-1zM490,170h1V171h-1zM491,169h1V170h-1zM492,169h1V170h-1zM493,169h1V170h-1zM494,169h1V170h-1zM495,170h1V171h-1zM496,170h1V171h-1zM497,170h1V171h-1zM498,170h1V171h-1zM499,169h1V171h-1zM500,170h1V171h-1zM501,170h1V171h-1zM502,170h1V171h-1zM503,170h1V171h-1zM504,170h1V171h-1zM505,170h1V171h-1zM506,170h1V171h-1zM507,170h1V171h-1zM508,170h1V171h-1zM509,170h1V171h-1zM510,170h1V171h-1zM511,169h1V171h-1zM512,170h1V171h-1zM513,170h1V171h-1zM514,169h1V171h-1zM515,170h1V171h-1zM516,170h1V171h-1zM517,169h1V171h-1zM518,170h1V171h-1zM519,170h1V171h-1zM520,170h1V171h-1zM521,169h1V171h-1zM522,170h1V171h-1zM523,170h1V171h-1zM524,170h1V171h-1zM525,170h1V171h-1zM526,170h1V171h-1zM527,170h1V171h-1zM528,170h1V171h-1zM529,170h1V171h-1zM530,170h1V171h-1zM531,170h1V171h-1zM532,170h1V171h-1zM533,170h1V171h-1zM534,170h1V171h-1zM535,170h1V171h-1zM536,170h1V171h-1zM537,170h1V171h-1zM538,170h1V171h-1zM539,170h1V171h-1zM540,170h1V171h-1zM541,170h1V171h-1zM542,170h1V171h-1zM543,170h1V171h-1zM544,170h1V171h-1zM545,170h1V171h-1zM546,170h1V171h-1zM547,170h1V171h-1zM548,170h1V171h-1zM549,170h1V171h-1zM550,170h1V171h-1zM551,170h1V171h-1zM552,169h1V170h-1zM553,170h1V171h-1zM554,170h1V171h-1zM555,170h1V171h-1zM556,170h1V171h-1zM557,170h1V171h-1zM558,170h1V171h-1zM559,170h1V171h-1zM560,170h1V171h-1zM561,170h1V171h-1zM562,170h1V171h-1zM563,170h1V171h-1zM564,170h1V171h-1zM565,170h1V171h-1zM566,170h1V171h-1zM567,170h1V171h-1zM568,170h1V171h-1zM569,170h1V171h-1zM570,170h1V171h-1zM571,170h1V171h-1zM572,169h1V171h-1zM573,170h1V171h-1zM574,169h1V171h-1zM575,170h1V171h-1zM576,170h1V171h-1zM577,170h1V171h-1zM578,170h1V171h-1zM579,170h1V171h-1zM580,170h1V171h-1zM581,170h1V171h-1zM582,170h1V171h-1zM583,170h1V171h-1zM584,170h1V171h-1zM585,170h1V171h-1zM586,170h1V171h-1zM587,170h1V171h-1zM588,170h1V171h-1zM589,170h1V171h-1zM590,170h1V171h-1zM591,170h1V171h-1zM592,170h1V171h-1zM593,170h1V171h-1zM594,170h1V171h-1zM595,170h1V171h-1zM596,170h1V171h-1zM597,170h1V171h-1zM598,170h1V171h-1zM599,170h1V171h-1zM600,170h1V171h-1zM601,170h1V171h-1zM602,170h1V171h-1zM603,170h1V171h-1zM604,170h1V171h-1zM605,170h1V171h-1zM606,170h1V171h-1zM607,170h1V171h-1zM608,170h1V171h-1zM609,170h1V171h-1zM610,170h1V171h-1zM611,170h1V171h-1zM612,170h1V171h-1zM613,170h1V171h-1zM614,170h1V171h-1zM615,170h1V171h-1zM616,170h1V171h-1zM617,170h1V171h-1zM618,170h1V171h-1zM619,170h1V171h-1zM620,170h1V171h-1zM621,170h1V171h-1zM622,170h1V171h-1zM623,170h1V171h-1zM624,170h1V171h-1zM625,170h1V171h-1zM626,170h1V171h-1zM627,170h1V171h-1zM628,170h1V171h-1zM629,170h1V171h-1zM630,170h1V171h-1zM631,170h1V171h-1zM632,170h1V171h-1zM633,170h1V171h-1zM634,170h1V171h-1zM635,170h1V171h-1zM636,170h1V171h-1zM637,170h1V171h-1zM638,170h1V171h-1zM639,170h1V171h-1zM640,170h1V171h-1zM641,170h1V171h-1zM642,170h1V172h-1zM643,170h1V172h-1zM644,171h1V172h-1zM645,171h1V172h-1zM646,171h1V172h-1zM647,171h1V172h-1zM648,171h1V172h-1zM649,171h1V172h-1zM650,171h1V172h-1zM651,171h1V172h-1zM652,171h1V172h-1zM653,171h1V172h-1zM654,171h1V172h-1zM655,171h1V172h-1zM656,171h1V172h-1zM657,171h1V172h-1zM658,171h1V172h-1zM659,171h1V172h-1zM660,171h1V172h-1zM661,171h1V172h-1zM662,171h1V172h-1zM663,171h1V172h-1zM664,171h1V172h-1zM665,171h1V172h-1zM666,171h1V172h-1zM667,171h1V172h-1zM668,171h1V172h-1zM669,171h1V172h-1zM670,171h1V172h-1zM671,171h1V172h-1zM672,171h1V172h-1zM673,171h1V172h-1zM674,171h1V172h-1zM675,171h1V172h-1zM676,171h1V172h-1zM677,171h1V172h-1zM678,171h1V172h-1zM679,171h1V172h-1zM680,171h1V172h-1zM681,171h1V172h-1zM682,171h1V172h-1zM683,171h1V172h-1zM684,171h1V172h-1zM685,171h1V172h-1zM686,171h1V173h-1zM687,172h1V173h-1zM688,172h1V173h-1zM689,172h1V174h-1zM690,173h1V174h-1zM691,173h1V174h-1zM692,173h1V174h-1zM693,173h1V174h-1zM694,173h1V174h-1zM695,173h1V174h-1zM696,173h1V174h-1zM697,173h1V174h-1zM698,173h1V174h-1zM699,173h1V174h-1zM700,173h1V174h-1zM701,173h1V174h-1zM702,173h1V174h-1zM703,173h1V174h-1zM704,173h1V174h-1zM705,173h1V174h-1zM706,173h1V174h-1zM707,173h1V174h-1zM708,173h1V174h-1zM709,173h1V174h-1zM710,173h1V174h-1zM711,173h1V174h-1zM712,173h1V174h-1zM713,173h1V174h-1zM714,173h1V174h-1zM715,173h1V174h-1zM716,173h1V174h-1zM717,173h1V174h-1zM718,173h1V174h-1zM719,173h1V174h-1zM720,173h1V174h-1zM721,173h1V174h-1zM722,173h1V174h-1zM723,173h1V174h-1zM724,173h1V174h-1zM725,173h1V174h-1zM726,173h1V174h-1zM727,173h1V174h-1zM728,173h1V174h-1zM729,173h1V174h-1zM730,173h1V174h-1zM731,173h1V174h-1zM732,173h1V174h-1zM733,173h1V174h-1zM734,173h1V174h-1zM735,173h1V174h-1zM736,173h1V174h-1zM737,173h1V174h-1zM738,173h1V174h-1zM739,173h1V174h-1zM740,173h1V174h-1zM741,173h1V174h-1zM742,173h1V174h-1zM743,173h1V174h-1zM744,173h1V174h-1zM745,173h1V174h-1zM746,173h1V174h-1zM747,173h1V174h-1zM748,173h1V174h-1zM749,173h1V174h-1zM750,173h1V174h-1zM751,173h1V174h-1zM752,173h1V174h-1zM753,173h1V174h-1zM754,173h1V174h-1zM755,173h1V174h-1zM756,173h1V174h-1zM757,173h1V174h-1zM758,173h1V174h-1zM759,173h1V174h-1zM760,173h1V174h-1zM761,173h1V174h-1zM762,173h1V174h-1zM763,173h1V174h-1zM764,173h1V174h-1zM765,173h1V174h-1zM766,173h1V174h-1zM767,173h1V174h-1zM768,173h1V174h-1zM769,173h1V174h-1zM770,173h1V174h-1zM771,173h1V174h-1zM772,173h1V174h-1zM773,173h1V174h-1zM774,173h1V174h-1zM775,173h1V174h-1zM776,173h1V174h-1zM777,173h1V174h-1zM778,173h1V174h-1zM779,173h1V174h-1zM780,173h1V174h-1zM781,173h1V174h-1zM782,173h1V174h-1zM783,173h1V174h-1zM784,173h1V174h-1zM785,173h1V174h-1zM786,173h1V174h-1zM787,173h1V174h-1zM788,173h1V174h-1zM789,173h1V174h-1zM790,173h1V174h-1zM791,173h1V174h-1zM792,173h1V174h-1zM793,173h1V174h-1zM794,173h1V174h-1zM795,173h1V174h-1zM796,173h1V174h-1zM797,173h1V174h-1zM798,173h1V174h-1zM799,173h1V174h-1zM800,173h1V174h-1zM801,173h1V174h-1zM802,173h1V174h-1zM803,173h1V174h-1zM804,173h1V174h-1zM805,173h1V174h-1zM806,173h1V174h-1zM807,173h1V174h-1zM808,173h1V174h-1zM809,173h1V174h-1zM810,173h1V174h-1zM811,173h1V174h-1zM812,173h1V174h-1zM813,173h1V174h-1zM814,173h1V174h-1zM815,173h1V174h-1zM816,173h1V174h-1zM817,173h1V174h-1zM818,173h1V174h-1zM819,173h1V174h-1zM820,173h1V174h-1zM821,173h1V174h-1zM822,173h1V174h-1zM823,173h1V174h-1zM824,173h1V174h-1zM825,173h1V174h-1zM826,173h1V174h-1zM827,173h1V174h-1zM828,173h1V174h-1zM829,173h1V174h-1zM830,173h1V174h-1zM831,173h1V174h-1zM832,173h1V174h-1zM833,173h1V174h-1zM834,173h1V174h-1zM835,173h1V174h-1zM836,173h1V174h-1zM837,173h1V174h-1zM838,173h1V174h-1zM839,173h1V174h-1zM840,173h1V174h-1zM841,173h1V174h-1zM842,173h1V174h-1zM843,173h1V174h-1zM844,173h1V174h-1zM845,173h1V174h-1zM846,173h1V174h-1zM847,173h1V174h-1zM848,173h1V174h-1zM849,173h1V174h-1zM850,173h1V174h-1zM851,173h1V174h-1zM852,173h1V174h-1zM853,173h1V174h-1zM854,173h1V174h-1zM855,173h1V174h-1zM856,173h1V174h-1zM857,173h1V174h-1zM858,173h1V174h-1zM859,173h1V174h-1zM860,173h1V174h-1zM861,173h1V174h-1zM862,173h1V174h-1zM863,173h1V174h-1zM864,173h1V174h-1zM865,173h1V174h-1zM866,173h1V174h-1zM867,173h1V174h-1zM868,173h1V174h-1zM869,173h1V174h-1zM870,173h1V174h-1zM871,173h1V174h-1zM872,173h1V174h-1zM873,173h1V174h-1zM874,173h1V174h-1zM875,173h1V174h-1zM876,173h1V174h-1zM877,173h1V174h-1zM878,173h1V174h-1zM879,173h1V174h-1zM880,173h1V174h-1zM881,173h1V174h-1zM882,173h1V174h-1zM883,173h1V174h-1zM884,173h1V174h-1zM885,173h1V174h-1zM886,173h1V174h-1zM887,173h1V174h-1zM888,173h1V174h-1zM889,173h1V174h-1zM890,173h1V174h-1zM891,173h1V174h-1zM892,173h1V174h-1zM893,173h1V174h-1zM894,173h1V174h-1zM895,173h1V174h-1zM896,173h1V174h-1zM897,173h1V174h-1zM898,173h1V174h-1zM899,173h1V174h-1zM900,173h1V174h-1zM901,173h1V174h-1zM902,173h1V174h-1zM903,173h1V174h-1zM904,173h1V174h-1zM905,173h1V174h-1zM906,173h1V174h-1zM907,173h1V174h-1zM908,173h1V174h-1zM909,173h1V174h-1zM910,173h1V174h-1zM911,173h1V174h-1zM912,173h1V174h-1zM913,173h1V174h-1zM914,173h1V174h-1zM915,173h1V174h-1zM916,173h1V174h-1zM917,173h1V174h-1zM918,173h1V174h-1zM919,173h1V174h-1zM920,173h1V174h-1zM921,173h1V174h-1zM922,173h1V174h-1zM923,173h1V174h-1zM924,173h1V174h-1zM925,173h1V174h-1zM926,173h1V174h-1zM927,173h1V174h-1zM928,173h1V174h-1zM929,173h1V174h-1zM930,173h1V174h-1zM931,173h1V174h-1zM932,173h1V174h-1zM933,173h1V174h-1zM934,173h1V174h-1zM935,173h1V174h-1zM936,173h1V174h-1zM937,173h1V174h-1zM938,173h1V174h-1zM939,173h1V174h-1zM940,173h1V174h-1zM941,173h1V174h-1zM942,173h1V174h-1zM943,173h1V174h-1zM944,173h1V174h-1zM945,173h1V174h-1zM946,173h1V174h-1zM947,173h1V174h-1zM948,173h1V174h-1zM949,173h1V174h-1zM950,173h1V174h-1zM951,173h1V174h-1zM952,173h1V174h-1zM953,173h1V174h-1zM954,173h1V174h-1zM955,173h1V174h-1zM956,173h1V174h-1zM957,173h1V174h-1zM958,173h1V174h-1zM959,173h1V174h-1zM960,173h1V174h-1zM961,173h1V174h-1zM962,173h1V174h-1zM963,173h1V174h-1zM964,173h1V174h-1zM965,173h1V174h-1zM966,173h1V174h-1zM967,173h1V174h-1zM968,173h1V174h-1zM969,173h1V174h-1zM970,173h1V174h-1zM971,173h1V174h-1zM972,173h1V174h-1zM973,173h1V174h-1zM974,173h1V174h-1zM975,173h1V174h-1zM976,173h1V174h-1zM977,173h1V174h-1zM978,173h1V174h-1zM979,173h1V174h-1zM980,173h1V174h-1zM981,173h1V174h-1zM982,173h1V174h-1zM983,173h1V174h-1zM984,173h1V174h-1zM985,173h1V174h-1zM986,173h1V174h-1zM987,173h1V174h-1zM988,173h1V174h-1zM989,173h1V174h-1zM990,173h1V174h-1zM991,173h1V174h-1zM992,173h1V174h-1zM993,173h1V174h-1zM994,173h1V174h-1zM995,173h1V174h-1zM996,173h1V174h-1zM997,173h1V174h-1zM998,173h1V174h-1zM999,173h1V174h-1zM1000,173h1V174h-1zM1001,173h1V174h-1zM1002,173h1V174h-1zM1003,173h1V174h-1zM1004,173h1V174h-1zM1005,173h1V174h-1zM1006,173h1V174h-1zM1007,173h1V174h-1zM1008,173h1V174h-1zM1009,173h1V174h-1zM1010,173h1V174h-1zM1011,173h1V174h-1zM1012,173h1V174h-1zM1013,173h1V174h-1zM1014,173h1V174h-1zM1015,173h1V174h-1zM1016,173h1V174h-1zM1017,173h1V174h-1zM1018,173h1V174h-1zM1019,173h1V174h-1zM1020,173h1V174h-1zM1021,173h1V174h-1zM1022,173h1V174h-1zM1023,173h1V174h-1zM1024,173h1V174h-1zM1025,173h1V174h-1zM1026,173h1V174h-1zM1027,173h1V174h-1zM1028,173h1V174h-1zM1029,173h1V174h-1zM1030,173h1V174h-1zM1031,173h1V174h-1zM1032,173h1V174h-1zM1033,173h1V174h-1zM1034,173h1V174h-1zM1035,173h1V174h-1zM1036,173h1V174h-1zM1037,173h1V174h-1zM1038,173h1V174h-1zM1039,173h1V174h-1zM1040,173h1V174h-1zM1041,173h1V174h-1zM1042,173h1V174h-1zM1043,173h1V174h-1zM1044,173h1V174h-1zM1045,173h1V174h-1zM1046,173h1V174h-1zM1047,173h1V174h-1zM1048,173h1V174h-1zM1049,173h1V174h-1zM1050,173h1V174h-1zM1051,173h1V174h-1zM1052,173h1V174h-1zM1053,173h1V174h-1zM1054,173h1V174h-1zM1055,173h1V174h-1zM1056,173h1V174h-1zM1057,173h1V174h-1zM1058,173h1V174h-1zM1059,173h1V174h-1zM1060,173h1V174h-1zM1061,173h1V174h-1zM1062,173h1V174h-1zM1063,173h1V174h-1zM1064,173h1V174h-1zM1065,173h1V174h-1zM1066,173h1V174h-1zM1067,173h1V174h-1zM1068,173h1V174h-1zM1069,173h1V174h-1zM1070,173h1V174h-1zM1071,173h1V174h-1zM1072,173h1V174h-1zM1073,173h1V174h-1zM1074,173h1V174h-1zM1075,173h1V174h-1zM1076,173h1V174h-1zM1077,173h1V174h-1zM1078,173h1V174h-1zM1079,173h1V174h-1zM1080,173h1V174h-1zM1081,173h1V174h-1zM1082,173h1V174h-1zM1083,173h1V174h-1zM1084,173h1V174h-1zM1085,173h1V174h-1zM1086,173h1V174h-1zM1087,173h1V174h-1zM1088,173h1V174h-1zM1089,173h1V174h-1zM1090,173h1V174h-1zM1091,173h1V174h-1zM1092,173h1V174h-1zM1093,173h1V174h-1zM1094,173h1V174h-1zM1095,173h1V174h-1zM1096,173h1V174h-1zM1097,173h1V174h-1zM1098,173h1V174h-1zM1099,173h1V174h-1zM1100,173h1V174h-1zM1101,173h1V174h-1zM1102,173h1V174h-1zM1103,173h1V174h-1zM1104,173h1V174h-1zM1105,173h1V174h-1zM1106,173h1V174h-1zM1107,173h1V174h-1zM1108,173h1V174h-1zM1109,173h1V174h-1zM1110,173h1V174h-1zM1111,173h1V174h-1zM1112,173h1V174h-1zM1113,173h1V174h-1zM1114,173h1V174h-1zM1115,173h1V174h-1zM1116,173h1V174h-1zM1117,173h1V174h-1zM1118,173h1V174h-1zM1119,173h1V174h-1zM1120,173h1V174h-1zM1121,173h1V174h-1zM1122,173h1V174h-1zM1123,173h1V174h-1zM1124,173h1V174h-1zM1125,173h1V174h-1zM1126,173h1V174h-1zM1127,173h1V174h-1zM1128,173h1V174h-1zM1129,173h1V174h-1zM1130,173h1V174h-1zM1131,173h1V174h-1zM1132,173h1V174h-1zM1133,173h1V174h-1zM1134,173h1V174h-1zM1135,173h1V174h-1zM1136,173h1V174h-1zM1137,173h1V174h-1zM1138,173h1V174h-1zM1139,173h1V174h-1zM1140,173h1V174h-1zM1141,173h1V174h-1zM1142,173h1V174h-1zM1143,173h1V174h-1zM1144,173h1V174h-1zM1145,173h1V174h-1zM1146,173h1V174h-1zM1147,173h1V174h-1zM1148,173h1V174h-1zM1149,173h1V174h-1zM1150,173h1V174h-1zM1151,173h1V174h-1zM1152,173h1V174h-1zM1153,173h1V174h-1zM1154,173h1V174h-1zM1155,173h1V174h-1zM1156,173h1V174h-1zM1157,173h1V174h-1zM1158,173h1V174h-1zM1159,173h1V174h-1zM1160,173h1V174h-1zM1161,173h1V174h-1zM1162,173h1V174h-1zM1163,173h1V174h-1zM1164,173h1V174h-1zM1165,173h1V174h-1zM1166,173h1V174h-1zM1167,173h1V174h-1zM1168,173h1V174h-1zM1169,173h1V174h-1zM1170,173h1V174h-1zM1171,173h1V174h-1zM1172,173h1V174h-1zM1173,173h1V174h-1zM1174,173h1V174h-1zM1175,173h1V174h-1zM1176,173h1V174h-1zM1177,173h1V174h-1zM1178,173h1V174h-1zM1179,173h1V174h-1zM1180,173h1V174h-1zM1181,173h1V174h-1zM1182,173h1V174h-1zM1183,173h1V174h-1zM1184,173h1V174h-1zM1185,173h1V174h-1zM1186,173h1V174h-1zM1187,173h1V174h-1zM1188,173h1V174h-1zM1189,173h1V174h-1zM1190,173h1V174h-1zM1191,173h1V174h-1zM1192,173h1V174h-1zM1193,173h1V174h-1zM1194,173h1V174h-1zM1195,173h1V174h-1zM1196,173h1V174h-1zM1197,173h1V174h-1zM1198,173h1V174h-1zM1199,173h1V174h-1zM1200,173h1V174h-1zM1201,173h1V174h-1zM1202,173h1V174h-1zM1203,173h1V174h-1zM1204,173h1V174h-1zM1205,173h1V174h-1zM1206,173h1V174h-1zM1207,173h1V174h-1zM1208,173h1V174h-1zM1209,173h1V174h-1zM1210,173h1V174h-1zM1211,173h1V174h-1zM1212,173h1V174h-1zM1213,173h1V174h-1zM1214,173h1V174h-1zM1215,173h1V174h-1zM1216,173h1V174h-1zM1217,173h1V174h-1zM1218,173h1V174h-1zM1219,173h1V174h-1zM1220,173h1V174h-1zM1221,173h1V174h-1zM1222,173h1V174h-1zM1223,173h1V174h-1zM1224,173h1V174h-1zM1225,173h1V174h-1zM1226,173h1V174h-1zM1227,173h1V174h-1zM1228,173h1V174h-1zM1229,173h1V174h-1zM1230,173h1V174h-1zM1231,173h1V174h-1zM1232,173h1V174h-1zM1233,173h1V174h-1zM1234,173h1V174h-1zM1235,173h1V174h-1zM1236,173h1V174h-1zM1237,173h1V174h-1zM1238,173h1V174h-1zM1239,173h1V174h-1zM1240,173h1V174h-1zM1241,173h1V174h-1zM1242,173h1V174h-1zM1243,173h1V174h-1zM1244,173h1V174h-1zM1245,173h1V174h-1zM1246,173h1V174h-1zM1247,173h1V174h-1zM1248,173h1V174h-1zM1249,173h1V174h-1zM1250,173h1V174h-1zM1251,173h1V174h-1zM1252,173h1V174h-1zM1253,173h1V174h-1zM1254,173h1V174h-1zM1255,173h1V174h-1zM1256,173h1V174h-1zM1257,173h1V174h-1zM1258,173h1V174h-1zM1259,173h1V174h-1zM1260,173h1V174h-1zM1261,173h1V174h-1zM1262,173h1V174h-1zM1263,173h1V174h-1zM1264,173h1V174h-1zM1265,173h1V174h-1zM1266,173h1V174h-1zM1267,173h1V174h-1zM1268,173h1V174h-1zM1269,173h1V174h-1zM1270,173h1V174h-1zM1271,173h1V174h-1zM1272,173h1V174h-1zM1273,173h1V174h-1zM1274,173h1V174h-1zM1275,173h1V174h-1zM1276,173h1V174h-1zM1277,173h1V174h-1zM1278,173h1V174h-1zM1279,173h1V174h-1zM1280,173h1V174h-1zM1281,173h1V174h-1zM1282,173h1V174h-1zM1283,173h1V174h-1zM1284,173h1V174h-1zM1285,173h1V174h-1zM1286,173h1V174h-1zM1287,173h1V174h-1zM1288,173h1V174h-1zM1289,173h1V174h-1zM1290,173h1V174h-1zM1291,173h1V174h-1zM1292,173h1V174h-1zM1293,173h1V174h-1zM1294,173h1V174h-1zM1295,173h1V174h-1zM1296,173h1V174h-1zM1297,173h1V174h-1zM1298,173h1V174h-1zM1299,173h1V174h-1zM1300,173h1V174h-1zM1301,173h1V174h-1zM1302,173h1V174h-1zM1303,173h1V174h-1zM1304,173h1V174h-1zM1305,173h1V174h-1zM1306,173h1V174h-1zM1307,173h1V174h-1zM1308,173h1V174h-1zM1309,173h1V174h-1zM1310,173h1V174h-1zM1311,173h1V174h-1zM1312,173h1V174h-1zM1313,173h1V174h-1zM1314,173h1V174h-1zM1315,173h1V174h-1zM1316,173h1V174h-1zM1317,173h1V174h-1zM1318,173h1V174h-1zM1319,173h1V174h-1zM1320,173h1V174h-1zM1321,173h1V174h-1zM1322,173h1V174h-1zM1323,173h1V174h-1zM1324,173h1V174h-1zM1325,173h1V174h-1zM1326,173h1V174h-1zM1327,173h1V174h-1zM1328,173h1V174h-1zM1329,173h1V174h-1zM1330,173h1V174h-1zM1331,173h1V174h-1zM1332,173h1V174h-1zM1333,173h1V174h-1zM1334,173h1V174h-1zM1335,173h1V174h-1zM1336,173h1V174h-1zM1337,173h1V174h-1zM1338,173h1V174h-1zM1339,173h1V174h-1zM1340,173h1V174h-1zM1341,173h1V174h-1zM1342,173h1V174h-1zM1343,173h1V174h-1zM1344,173h1V174h-1zM1345,173h1V174h-1zM1346,173h1V174h-1zM1347,173h1V174h-1zM1348,173h1V174h-1zM1349,173h1V174h-1zM1350,173h1V174h-1zM1351,173h1V174h-1zM1352,173h1V174h-1zM1353,173h1V174h-1zM1354,173h1V174h-1zM1355,173h1V174h-1zM1356,173h1V174h-1zM1357,173h1V174h-1zM1358,173h1V174h-1zM1359,173h1V174h-1zM1360,173h1V174h-1zM1361,173h1V174h-1zM1362,173h1V174h-1zM1363,173h1V174h-1zM1364,173h1V174h-1zM1365,173h1V174h-1zM1366,173h1V174h-1zM1367,173h1V174h-1zM1368,173h1V174h-1zM1369,173h1V174h-1zM1370,173h1V174h-1zM1371,173h1V174h-1zM1372,173h1V174h-1zM1373,173h1V174h-1zM1374,173h1V174h-1zM1375,173h1V174h-1zM1376,173h1V174h-1zM1377,173h1V174h-1zM1378,173h1V174h-1zM1379,173h1V174h-1zM1380,173h1V174h-1zM1381,173h1V174h-1zM1382,173h1V174h-1zM1383,173h1V174h-1zM1384,173h1V174h-1zM1385,173h1V174h-1zM1386,173h1V174h-1zM1387,173h1V174h-1zM1388,173h1V174h-1zM1389,173h1V174h-1zM1390,173h1V174h-1zM1391,173h1V174h-1zM1392,173h1V174h-1zM1393,173h1V174h-1zM1394,173h1V174h-1zM1395,173h1V174h-1zM1396,173h1V174h-1zM1397,173h1V174h-1zM1398,173h1V174h-1zM1399,173h1V174h-1zM1400,173h1V174h-1zM1401,173h1V174h-1zM1402,173h1V174h-1zM1403,173h1V174h-1zM1404,173h1V174h-1zM1405,173h1V174h-1zM1406,173h1V174h-1zM1407,173h1V174h-1zM1408,173h1V174h-1zM1409,173h1V174h-1zM1410,173h1V174h-1zM1411,173h1V174h-1zM1412,173h1V174h-1zM1413,173h1V174h-1zM1414,173h1V174h-1zM1415,173h1V174h-1zM1416,173h1V174h-1zM1417,173h1V174h-1zM1418,173h1V174h-1zM1419,173h1V174h-1zM1420,173h1V174h-1zM1421,173h1V174h-1zM1422,173h1V174h-1zM1423,173h1V174h-1zM1424,173h1V174h-1zM1425,173h1V174h-1zM1426,173h1V174h-1zM1427,173h1V174h-1zM1428,173h1V174h-1zM1429,173h1V174h-1zM1430,173h1V174h-1zM1431,173h1V174h-1zM1432,173h1V174h-1zM1433,173h1V174h-1zM1434,173h1V174h-1zM1435,173h1V174h-1zM1436,173h1V174h-1zM1437,173h1V174h-1zM1438,173h1V174h-1zM1439,173h1V174h-1zM1440,173h1V174h-1zM1441,173h1V174h-1zM1442,173h1V174h-1zM1443,173h1V174h-1zM1444,173h1V174h-1zM1445,173h1V174h-1zM1446,173h1V174h-1zM1447,173h1V174h-1zM1448,173h1V174h-1zM1449,173h1V174h-1zM1450,173h1V174h-1zM1451,173h1V174h-1zM1452,173h1V174h-1zM1453,173h1V174h-1zM1454,173h1V174h-1zM1455,173h1V174h-1zM1456,173h1V174h-1zM1457,173h1V174h-1zM1458,173h1V174h-1zM1459,173h1V174h-1zM1460,173h1V174h-1zM1461,173h1V174h-1zM1462,173h1V174h-1zM1463,173h1V174h-1zM1464,173h1V174h-1zM1465,173h1V174h-1zM1466,173h1V174h-1zM1467,173h1V174h-1zM1468,173h1V174h-1zM1469,173h1V174h-1zM1470,173h1V174h-1zM1471,173h1V174h-1zM1472,173h1V174h-1zM1473,173h1V174h-1zM1474,173h1V174h-1zM1475,173h1V174h-1zM1476,173h1V174h-1zM1477,173h1V174h-1zM1478,173h1V174h-1zM1479,173h1V174h-1zM1480,173h1V174h-1zM1481,173h1V174h-1zM1482,173h1V174h-1zM1483,173h1V174h-1zM1484,173h1V174h-1zM1485,173h1V174h-1zM1486,173h1V174h-1zM1487,173h1V174h-1zM1488,173h1V174h-1zM1489,173h1V174h-1zM1490,173h1V174h-1zM1491,173h1V174h-1zM1492,173h1V174h-1zM1493,173h1V174h-1zM1494,173h1V174h-1zM1495,173h1V174h-1zM1496,173h1V174h-1zM1497,173h1V174h-1zM1498,173h1V174h-1zM1499,173h1V174h-1zM1500,173h1V174h-1zM1501,173h1V174h-1zM1502,173h1V174h-1zM1503,173h1V174h-1zM1504,173h1V174h-1zM1505,173h1V174h-1zM1506,173h1V174h-1zM1507,173h1V174h-1zM1508,173h1V174h-1zM1509,173h1V174h-1zM1510,173h1V174h-1zM1511,173h1V174h-1zM1512,173h1V174h-1zM1513,173h1V174h-1zM1514,173h1V174h-1zM1515,173h1V174h-1zM1516,173h1V174h-1zM1517,173h1V174h-1zM1518,173h1V174h-1zM1519,173h1V174h-1zM1520,173h1V174h-1zM1521,173h1V174h-1zM1522,173h1V174h-1zM1523,173h1V174h-1zM1524,173h1V174h-1zM1525,173h1V174h-1zM1526,173h1V174h-1zM1527,173h1V174h-1zM1528,173h1V174h-1zM1529,173h1V174h-1zM1530,173h1V174h-1zM1531,173h1V174h-1zM1532,173h1V174h-1zM1533,173h1V174h-1zM1534,173h1V174h-1zM1535,173h1V174h-1zM1536,173h1V174h-1zM1537,173h1V174h-1zM1538,173h1V174h-1zM1539,173h1V174h-1zM1540,173h1V174h-1zM1541,173h1V174h-1zM1542,173h1V174h-1zM1543,173h1V174h-1zM1544,173h1V174h-1zM1545,173h1V174h-1zM1546,173h1V174h-1zM1547,173h1V174h-1zM1548,173h1V174h-1zM1549,173h1V174h-1zM1550,173h1V174h-1zM1551,173h1V174h-1zM1552,173h1V174h-1zM1553,173h1V174h-1zM1554,173h1V174h-1zM1555,173h1V174h-1zM1556,173h1V174h-1zM1557,173h1V174h-1zM1558,173h1V174h-1zM1559,173h1V174h-1zM1560,173h1V174h-1zM1561,173h1V174h-1zM1562,173h1V174h-1zM1563,173h1V174h-1zM1564,173h1V174h-1zM1565,173h1V174h-1zM1566,173h1V174h-1zM1567,173h1V174h-1zM1568,173h1V174h-1zM1569,173h1V174h-1zM1570,173h1V174h-1zM1571,173h1V174h-1zM1572,173h1V174h-1zM1573,173h1V174h-1zM1574,173h1V174h-1zM1575,173h1V174h-1zM1576,173h1V174h-1zM1577,173h1V174h-1zM1578,173h1V174h-1zM1579,173h1V174h-1zM1580,173h1V174h-1zM1581,173h1V174h-1zM1582,173h1V174h-1zM1583,173h1V174h-1zM1584,173h1V174h-1zM1585,173h1V174h-1zM1586,173h1V174h-1zM1587,173h1V174h-1zM1588,173h1V174h-1zM1589,173h1V174h-1zM1590,173h1V174h-1zM1591,173h1V174h-1zM1592,173h1V174h-1zM1593,173h1V174h-1zM1594,173h1V174h-1zM1595,173h1V174h-1zM1596,173h1V174h-1zM1597,173h1V174h-1zM1598,173h1V174h-1zM1599,173h1V174h-1zM1600,173h1V174h-1zM1601,173h1V174h-1zM1602,173h1V174h-1zM1603,173h1V174h-1zM1604,173h1V174h-1zM1605,173h1V174h-1zM1606,173h1V174h-1zM1607,173h1V174h-1zM1608,173h1V174h-1zM1609,173h1V174h-1zM1610,173h1V174h-1zM1611,173h1V174h-1zM1612,173h1V174h-1zM1613,173h1V174h-1zM1614,173h1V174h-1zM1615,173h1V174h-1zM1616,173h1V174h-1zM1617,173h1V174h-1zM1618,173h1V174h-1zM1619,173h1V174h-1zM1620,173h1V174h-1zM1621,173h1V174h-1zM1622,173h1V174h-1zM1623,173h1V174h-1zM1624,173h1V174h-1zM1625,173h1V174h-1zM1626,173h1V174h-1zM1627,173h1V174h-1zM1628,173h1V174h-1zM1629,173h1V174h-1zM1630,173h1V174h-1zM1631,173h1V174h-1zM1632,173h1V174h-1zM1633,173h1V174h-1zM1634,173h1V174h-1zM1635,173h1V174h-1zM1636,173h1V174h-1zM1637,173h1V174h-1zM1638,173h1V174h-1zM1639,173h1V174h-1zM1640,173h1V174h-1zM1641,173h1V174h-1zM1642,173h1V174h-1zM1643,173h1V174h-1zM1644,173h1V174h-1zM1645,173h1V174h-1zM1646,173h1V174h-1zM1647,173h1V174h-1zM1648,173h1V174h-1zM1649,173h1V174h-1zM1650,173h1V174h-1zM1651,173h1V174h-1zM1652,173h1V174h-1zM1653,173h1V174h-1zM1654,173h1V174h-1zM1655,173h1V174h-1zM1656,173h1V174h-1zM1657,173h1V174h-1zM1658,173h1V174h-1zM1659,173h1V174h-1zM1660,173h1V174h-1zM1661,173h1V174h-1zM1662,173h1V174h-1zM1663,173h1V174h-1zM1664,173h1V174h-1zM1665,173h1V174h-1zM1666,173h1V174h-1zM1667,173h1V174h-1zM1668,173h1V174h-1zM1669,173h1V174h-1zM1670,173h1V174h-1zM1671,173h1V174h-1zM1672,173h1V174h-1zM1673,173h1V174h-1zM1674,173h1V174h-1zM1675,173h1V174h-1zM1676,173h1V174h-1zM1677,173h1V174h-1zM1678,173h1V174h-1zM1679,173h1V174h-1zM1680,173h1V174h-1zM1681,173h1V174h-1zM1682,173h1V174h-1zM1683,173h1V174h-1zM1684,173h1V174h-1zM1685,173h1V174h-1zM1686,173h1V174h-1zM1687,173h1V174h-1zM1688,173h1V174h-1zM1689,173h1V174h-1zM1690,173h1V174h-1zM1691,173h1V174h-1zM1692,173h1V174h-1zM1693,173h1V174h-1zM1694,173h1V174h-1zM1695,173h1V174h-1zM1696,173h1V174h-1zM1697,173h1V174h-1zM1698,173h1V174h-1zM1699,173h1V174h-1zM1700,173h1V174h-1zM1701,173h1V174h-1zM1702,173h1V174h-1zM1703,173h1V174h-1zM1704,173h1V174h-1zM1705,173h1V174h-1zM1706,173h1V174h-1zM1707,173h1V174h-1zM1708,173h1V174h-1zM1709,173h1V174h-1zM1710,173h1V174h-1zM1711,173h1V174h-1zM1712,173h1V174h-1zM1713,173h1V174h-1zM1714,173h1V174h-1zM1715,173h1V174h-1zM1716,173h1V174h-1zM1717,173h1V174h-1zM1718,173h1V174h-1zM1719,173h1V174h-1zM1720,173h1V174h-1zM1721,173h1V174h-1zM1722,173h1V174h-1zM1723,173h1V174h-1zM1724,173h1V174h-1zM1725,173h1V174h-1zM1726,173h1V174h-1zM1727,173h1V174h-1zM1728,173h1V174h-1zM1729,173h1V174h-1zM1730,173h1V174h-1zM1731,173h1V174h-1zM1732,173h1V174h-1zM1733,173h1V174h-1zM1734,173h1V174h-1zM1735,173h1V174h-1zM1736,173h1V174h-1zM1737,173h1V174h-1zM1738,173h1V174h-1zM1739,173h1V174h-1zM1740,173h1V174h-1zM1741,173h1V174h-1zM1742,173h1V174h-1zM1743,173h1V174h-1zM1744,173h1V174h-1zM1745,173h1V174h-1zM1746,173h1V174h-1zM1747,173h1V174h-1zM1748,173h1V174h-1zM1749,173h1V174h-1zM1750,173h1V174h-1z" fill="#f5e61a" shape-rendering="crispEdges"/>
<path d="M3,407h1V408h-1zM4,407h1V408h-1zM5,407h1V408h-1zM6,407h1V408h-1zM7,407h1V408h-1zM8,407h1V408h-1zM9,407h1V408h-1zM10,407h1V408h-1zM11,407h1V408h-1zM12,407h1V408h-1zM13,407h1V408h-1zM14,407h1V408h-1zM15,407h1V408h-1zM16,407h1V408h-1zM17,407h1V408h-1zM18,407h1V408h-1zM19,407h1V408h-1zM20,407h1V408h-1zM21,407h1V408h-1zM22,407h1V408h-1zM23,407h1V408h-1zM24,407h1V408h-1zM25,407h1V408h-1zM26,407h1V408h-1zM27,407h1V408h-1zM28,407h1V408h-1zM29,407h1V408h-1zM30,407h1V408h-1zM31,407h1V408h-1zM32,407h1V408h-1zM33,407h1V408h-1zM34,407h1V408h-1zM35,407h1V408h-1zM36,407h1V408h-1zM37,407h1V408h-1zM38,407h1V408h-1zM39,407h1V408h-1zM40,407h1V408h-1zM41,407h1V408h-1zM42,407h1V408h-1zM43,407h1V408h-1zM44,407h1V408h-1zM45,407h1V408h-1zM46,407h1V408h-1zM47,407h1V408h-1zM48,407h1V408h-1zM49,407h1V408h-1zM50,407h1V408h-1zM51,407h1V408h-1zM52,407h1V408h-1zM53,407h1V408h-1zM54,407h1V408h-1zM55,407h1V408h-1zM56,407h1V408h-1zM57,407h1V408h-1zM58,407h1V408h-1zM59,407h1V408h-1zM60,407h1V408h-1zM61,407h1V408h-1zM62,407h1V408h-1zM63,407h1V408h-1zM64,407h1V408h-1zM65,407h1V408h-1zM66,407h1V408h-1zM67,407h1V408h-1zM68,407h1V408h-1zM69,407h1V408h-1zM70,407h1V408h-1zM71,407h1V408h-1zM72,407h1V408h-1zM73,407h1V408h-1zM74,407h1V408h-1zM75,407h1V408h-1zM76,407h1V408h-1zM77,407h1V408h-1zM78,407h1V408h-1zM79,407h1V408h-1zM80,407h1V408h-1zM81,407h1V408h-1zM82,407h1V408h-1zM83,407h1V408h-1zM84,407h1V408h-1zM85,407h1V408h-1zM86,407h1V408h-1zM87,407h1V408h-1zM88,407h1V408h-1zM89,407h1V408h-1zM90,407h1V408h-1zM91,407h1V408h-1zM92,407h1V408h-1zM93,407h1V408h-1zM94,407h1V408h-1zM95,407h1V408h-1zM96,407h1V408h-1zM97,407h1V408h-1zM98,407h1V408h-1zM99,407h1V408h-1zM100,407h1V408h-1zM101,407h1V408h-1zM102,407h1V408h-1zM103,407h1V408h-1zM104,407h1V408h-1zM105,407h1V408h-1zM106,407h1V408h-1zM107,407h1V408h-1zM108,407h1V408h-1zM109,407h1V408h-1zM110,407h1V408h-1zM111,407h1V408h-1zM112,407h1V408h-1zM113,407h1V408h-1zM114,407h1V408h-1zM115,407h1V408h-1zM116,407h1V408h-1zM117,407h1V408h-1zM118,407h1V408h-1zM119,407h1V408h-1zM120,407h1V408h-1zM121,407h1V408h-1zM122,407h1V408h-1zM123,407h1V408h-1zM124,407h1V408h-1zM125,407h1V408h-1zM126,407h1V408h-1zM127,407h1V408h-1zM128,407h1V408h-1zM129,407h1V408h-1zM130,407h1V408h-1zM131,407h1V408h-1zM132,407h1V408h-1zM133,407h1V408h-1zM134,407h1V408h-1zM135,407h1V408h-1zM136,407h1V408h-1zM137,407h1V408h-1zM138,407h1V408h-1zM139,407h1V408h-1zM140,407h1V408h-1zM141,407h1V408h-1zM142,407h1V408h-1zM143,407h1V408h-1zM144,407h1V408h-1zM145,407h1V408h-1zM146,407h1V408h-1zM147,407h1V408h-1zM148,407h1V408h-1zM149,407h1V408h-1zM150,407h1V408h-1zM151,407h1V408h-1zM152,407h1V408h-1zM153,407h1V408h-1zM154,407h1V408h-1zM155,407h1V408h-1zM156,407h1V408h-1zM157,407h1V408h-1zM158,407h1V408h-1zM159,407h1V408h-1zM160,407h1V408h-1zM161,407h1V408h-1zM162,407h1V408h-1zM163,407h1V408h-1zM164,407h1V408h-1zM165,407h1V408h-1zM166,407h1V408h-1zM167,407h1V408h-1zM168,407h1V408h-1zM169,407h1V408h-1zM170,407h1V408h-1zM171,407h1V408h-1zM172,407h1V408h-1zM173,407h1V408h-1zM174,407h1V408h-1zM175,407h1V408h-1zM176,407h1V408h-1zM177,407h1V408h-1zM178,407h1V408h-1zM179,407h1V408h-1zM180,407h1V408h-1zM181,407h1V408h-1zM182,407h1V408h-1zM183,407h1V408h-1zM184,407h1V408h-1zM185,407h1V408h-1zM186,407h1V408h-1zM187,407h1V408h-1zM188,407h1V408h-1zM189,407h1V408h-1zM190,407h1V408h-1zM191,407h1V408h-1zM192,407h1V408h-1zM193,407h1V408h-1zM194,407h1V408h-1zM195,407h1V408h-1zM196,407h1V408h-1zM197,407h1V408h-1zM198,407h1V408h-1zM199,407h1V408h-1zM200,407h1V408h-1zM201,407h1V408h-1zM202,407h1V408h-1zM203,407h1V408h-1zM204,407h1V408h-1zM205,407h1V408h-1zM206,407h1V408h-1zM207,407h1V408h-1zM208,407h1V408h-1zM209,407h1V408h-1zM210,407h1V408h-1zM211,407h1V408h-1zM212,407h1V408h-1zM213,407h1V409h-1zM214,408h1V410h-1zM215,409h1V412h-1zM216,410h1V413h-1zM217,412h1V414h-1zM218,412h1V414h-1zM219,412h1V414h-1zM220,411h1V413h-1zM221,410h1V412h-1zM222,410h1V412h-1zM223,410h1V412h-1zM224,410h1V412h-1zM225,411h1V412h-1zM226,410h1V412h-1zM227,409h1V411h-1zM228,408h1V410h-1zM229,407h1V410h-1zM230,407h1V410h-1zM231,406h1V408h-1zM232,406h1V407h-1zM233,406h1V407h-1zM234,406h1V407h-1zM235,405h1V406h-1zM236,405h1V406h-1zM237,405h1V406h-1zM238,404h1V405h-1zM239,404h1V405h-1zM240,403h1V406h-1zM241,404h1V405h-1zM242,402h1V406h-1zM243,404h1V406h-1zM244,404h1V406h-1zM245,404h1V406h-1zM246,404h1V405h-1zM247,404h1V406h-1zM248,404h1V406h-1zM249,404h1V406h-1zM250,404h1V405h-1zM251,404h1V405h-1zM252,403h1V405h-1zM253,403h1V405h-1zM254,404h1V406h-1zM255,404h1V406h-1zM256,404h1V406h-1zM257,404h1V406h-1zM258,404h1V405h-1zM259,403h1V405h-1zM260,403h1V405h-1zM261,403h1V405h-1zM262,402h1V405h-1zM263,404h1V405h-1zM264,404h1V406h-1zM265,404h1V406h-1zM266,404h1V407h-1zM267,405h1V407h-1zM268,405h1V407h-1zM269,405h1V407h-1zM270,405h1V407h-1zM271,405h1V407h-1zM272,406h1V408h-1zM273,406h1V408h-1zM274,407h1V409h-1zM275,408h1V409h-1zM276,408h1V409h-1zM277,408h1V409h-1zM278,409h1V410h-1zM279,408h1V410h-1zM280,408h1V410h-1zM281,408h1V411h-1zM282,408h1V410h-1zM283,407h1V410h-1zM284,407h1V410h-1zM285,407h1V410h-1zM286,407h1V410h-1zM287,407h1V410h-1zM288,408h1V410h-1zM289,407h1V410h-1zM290,408h1V410h-1zM291,409h1V411h-1zM292,409h1V411h-1zM293,409h1V411h-1zM294,409h1V411h-1zM295,409h1V412h-1zM296,409h1V411h-1zM297,409h1V412h-1zM298,409h1V411h-1zM299,409h1V411h-1zM300,409h1V411h-1zM301,408h1V410h-1zM302,408h1V413h-1zM303,407h1V410h-1zM304,408h1V410h-1zM305,408h1V410h-1zM306,405h1V410h-1zM307,408h1V410h-1zM308,408h1V411h-1zM309,409h1V411h-1zM310,409h1V411h-1zM311,409h1V411h-1zM312,409h1V412h-1zM313,409h1V411h-1zM314,409h1V411h-1zM315,408h1V411h-1zM316,408h1V411h-1zM317,408h1V410h-1zM318,408h1V410h-1zM319,406h1V410h-1zM320,408h1V411h-1zM321,408h1V411h-1zM322,408h1V410h-1zM323,409h1V411h-1zM324,408h1V411h-1zM325,408h1V410h-1zM326,409h1V411h-1zM327,408h1V411h-1zM328,408h1V411h-1zM329,408h1V411h-1zM330,408h1V410h-1zM331,408h1V411h-1zM332,409h1V411h-1zM333,410h1V411h-1zM334,409h1V411h-1zM335,409h1V412h-1zM336,409h1V411h-1zM337,408h1V411h-1zM338,409h1V411h-1zM339,408h1V410h-1zM340,408h1V410h-1zM341,408h1V410h-1zM342,408h1V410h-1zM343,408h1V411h-1zM344,409h1V411h-1zM345,409h1V411h-1zM346,408h1V411h-1zM347,408h1V410h-1zM348,408h1V410h-1zM349,408h1V411h-1zM350,409h1V411h-1zM351,409h1V412h-1zM352,409h1V411h-1zM353,408h1V411h-1zM354,408h1V411h-1zM355,409h1V411h-1zM356,409h1V411h-1zM357,409h1V411h-1zM358,409h1V411h-1zM359,409h1V411h-1zM360,409h1V411h-1zM361,408h1V411h-1zM362,408h1V410h-1zM363,408h1V410h-1zM364,408h1V410h-1zM365,408h1V410h-1zM366,408h1V410h-1zM367,408h1V410h-1zM368,408h1V410h-1zM369,408h1V410h-1zM370,408h1V411h-1zM371,408h1V411h-1zM372,409h1V411h-1zM373,409h1V411h-1zM374,409h1V411h-1zM375,408h1V411h-1zM376,408h1V411h-1zM377,408h1V410h-1zM378,407h1V410h-1zM379,409h1V411h-1zM380,409h1V411h-1zM381,409h1V412h-1zM382,409h1V411h-1zM383,408h1V411h-1zM384,408h1V412h-1zM385,408h1V410h-1zM386,408h1V410h-1zM387,408h1V410h-1zM388,405h1V410h-1zM389,408h1V411h-1zM390,408h1V411h-1zM391,408h1V411h-1zM392,409h1V412h-1zM393,409h1V411h-1zM394,409h1V412h-1zM395,409h1V411h-1zM396,409h1V411h-1zM397,408h1V410h-1zM398,408h1V411h-1zM399,408h1V410h-1zM400,409h1V411h-1zM401,409h1V411h-1zM402,409h1V412h-1zM403,409h1V412h-1zM404,409h1V412h-1zM405,409h1V411h-1zM406,409h1V412h-1zM407,409h1V411h-1zM408,409h1V414h-1zM409,409h1V411h-1zM410,408h1V411h-1zM411,408h1V410h-1zM412,409h1V411h-1zM413,409h1V410h-1zM414,409h1V411h-1zM415,409h1V411h-1zM416,409h1V411h-1zM417,409h1V411h-1zM418,409h1V411h-1zM419,409h1V412h-1zM420,409h1V411h-1zM421,406h1V411h-1zM422,409h1V410h-1zM423,408h1V410h-1zM424,408h1V410h-1zM425,408h1V410h-1zM426,408h1V410h-1zM427,407h1V410h-1zM428,405h1V410h-1zM429,404h1V407h-1zM430,404h1V406h-1zM431,404h1V408h-1zM432,404h1V406h-1zM433,404h1V406h-1zM434,404h1V406h-1zM435,404h1V406h-1zM436,400h1V405h-1zM437,395h1V402h-1zM438,392h1V396h-1zM439,384h1V393h-1zM440,382h1V386h-1zM441,379h1V383h-1zM442,379h1V381h-1zM443,379h1V381h-1zM444,380h1V383h-1zM445,382h1V386h-1zM446,385h1V388h-1zM447,387h1V391h-1zM448,390h1V394h-1zM449,393h1V396h-1zM450,395h1V398h-1zM451,397h1V399h-1zM452,398h1V401h-1zM453,400h1V402h-1zM454,401h1V403h-1zM455,402h1V404h-1zM456,402h1V404h-1zM457,403h1V405h-1zM458,404h1V405h-1zM459,403h1V406h-1zM460,405h1V406h-1zM461,405h1V406h-1zM462,405h1V406h-1zM463,405h1V406h-1zM464,405h1V406h-1zM465,405h1V406h-1zM466,405h1V406h-1zM467,405h1V406h-1zM468,405h1V406h-1zM469,405h1V406h-1zM470,405h1V406h-1zM471,405h1V406h-1zM472,405h1V406h-1zM473,405h1V406h-1zM474,405h1V406h-1zM475,405h1V406h-1zM476,405h1V406h-1zM477,405h1V406h-1zM478,405h1V406h-1zM479,405h1V406h-1zM480,404h1V406h-1zM481,404h1V406h-1zM482,404h1V406h-1zM483,405h1V406h-1zM484,404h1V406h-1zM485,404h1V406h-1zM486,404h1V405h-1zM487,404h1V406h-1zM488,405h1V406h-1zM489,405h1V406h-1zM490,405h1V406h-1zM491,405h1V406h-1zM492,405h1V406h-1zM493,405h1V406h-1zM494,404h1V406h-1zM495,405h1V406h-1zM496,405h1V406h-1zM497,405h1V406h-1zM498,405h1V406h-1zM499,405h1V406h-1zM500,405h1V406h-1zM501,405h1V406h-1zM502,405h1V406h-1zM503,405h1V406h-1zM504,405h1V406h-1zM505,405h1V406h-1zM506,405h1V406h-1zM507,405h1V406h-1zM508,405h1V406h-1zM509,405h1V406h-1zM510,405h1V406h-1zM511,405h1V406h-1zM512,405h1V406h-1zM513,405h1V406h-1zM514,405h1V406h-1zM515,405h1V406h-1zM516,405h1V406h-1zM517,405h1V406h-1zM518,405h1V406h-1zM519,405h1V406h-1zM520,405h1V406h-1zM521,405h1V406h-1zM522,405h1V406h-1zM523,405h1V406h-1zM524,405h1V406h-1zM525,405h1V406h-1zM526,405h1V406h-1zM527,405h1V406h-1zM528,405h1V406h-1zM529,405h1V406h-1zM530,405h1V406h-1zM531,405h1V406h-1zM532,405h1V406h-1zM533,405h1V406h-1zM534,405h1V406h-1zM535,405h1V406h-1zM536,405h1V406h-1zM537,405h1V406h-1zM538,405h1V406h-1zM539,405h1V406h-1zM540,405h1V406h-1zM541,405h1V406h-1zM542,405h1V406h-1zM543,405h1V406h-1zM544,405h1V406h-1zM545,405h1V406h-1zM546,405h1V406h-1zM547,405h1V406h-1zM548,405h1V406h-1zM549,405h1V406h-1zM550,405h1V406h-1zM551,405h1V406h-1zM552,405h1V406h-1zM553,405h1V406h-1zM554,405h1V406h-1zM555,405h1V406h-1zM556,405h1V406h-1zM557,405h1V406h-1zM558,405h1V406h-1zM559,405h1V406h-1zM560,405h1V406h-1zM561,405h1V406h-1zM562,405h1V406h-1zM563,405h1V406h-1zM564,405h1V406h-1zM565,405h1V406h-1zM566,405h1V406h-1zM567,405h1V406h-1zM568,405h1V406h-1zM569,405h1V406h-1zM570,405h1V406h-1zM571,405h1V406h-1zM572,405h1V406h-1zM573,405h1V406h-1zM574,405h1V406h-1zM575,405h1V406h-1zM576,405h1V406h-1zM577,405h1V406h-1zM578,405h1V406h-1zM579,405h1V406h-1zM580,405h1V406h-1zM581,405h1V406h-1zM582,405h1V406h-1zM583,405h1V406h-1zM584,405h1V406h-1zM585,405h1V406h-1zM586,405h1V406h-1zM587,405h1V406h-1zM588,405h1V406h-1zM589,405h1V406h-1zM590,405h1V406h-1zM591,405h1V406h-1zM592,405h1V406h-1zM593,405h1V406h-1zM594,405h1V406h-1zM595,405h1V406h-1zM596,405h1V406h-1zM597,405h1V406h-1zM598,405h1V406h-1zM599,405h1V406h-1zM600,405h1V406h-1zM601,405h1V406h-1zM602,405h1V406h-1zM603,405h1V406h-1zM604,405h1V406h-1zM605,405h1V406h-1zM606,405h1V406h-1zM607,405h1V406h-1zM608,405h1V406h-1zM609,405h1V406h-1zM610,405h1V406h-1zM611,405h1V406h-1zM612,405h1V406h-1zM613,405h1V406h-1zM614,405h1V406h-1zM615,405h1V406h-1zM616,405h1V406h-1zM617,405h1V406h-1zM618,405h1V406h-1zM619,405h1V406h-1zM620,405h1V406h-1zM621,405h1V406h-1zM622,405h1V406h-1zM623,405h1V406h-1zM624,405h1V406h-1zM625,405h1V406h-1zM626,405h1V406h-1zM627,405h1V406h-1zM628,405h1V406h-1zM629,405h1V406h-1zM630,405h1V406h-1zM631,405h1V406h-1zM632,405h1V406h-1zM633,405h1V406h-1zM634,405h1V406h-1zM635,405h1V406h-1zM636,405h1V406h-1zM637,405h1V406h-1zM638,405h1V406h-1zM639,405h1V406h-1zM640,405h1V406h-1zM641,405h1V406h-1zM642,405h1V406h-1zM643,405h1V406h-1zM644,405h1V406h-1zM645,405h1V406h-1zM646,405h1V406h-1zM647,405h1V406h-1zM648,405h1V406h-1zM649,405h1V406h-1zM650,405h1V406h-1zM651,405h1V406h-1zM652,405h1V406h-1zM653,405h1V406h-1zM654,405h1V406h-1zM655,405h1V406h-1zM656,405h1V406h-1zM657,405h1V406h-1zM658,405h1V406h-1zM659,405h1V406h-1zM660,405h1V406h-1zM661,405h1V406h-1zM662,405h1V406h-1zM663,405h1V406h-1zM664,405h1V406h-1zM665,405h1V406h-1zM666,405h1V406h-1zM667,405h1V406h-1zM668,405h1V406h-1zM669,405h1V406h-1zM670,405h1V406h-1zM671,405h1V406h-1zM672,405h1V406h-1zM673,405h1V406h-1zM674,405h1V406h-1zM675,405h1V406h-1zM676,405h1V406h-1zM677,405h1V406h-1zM678,405h1V406h-1zM679,405h1V406h-1zM680,405h1V406h-1zM681,405h1V406h-1zM682,405h1V406h-1zM683,405h1V406h-1zM684,405h1V406h-1zM685,405h1V406h-1zM686,405h1V406h-1zM687,405h1V406h-1zM688,405h1V406h-1zM689,405h1V406h-1zM690,405h1V406h-1zM691,405h1V406h-1zM692,405h1V406h-1zM693,405h1V406h-1zM694,405h1V406h-1zM695,405h1V406h-1zM696,405h1V406h-1zM697,405h1V406h-1zM698,405h1V406h-1zM699,405h1V406h-1zM700,405h1V406h-1zM701,405h1V406h-1zM702,405h1V406h-1zM703,405h1V406h-1zM704,405h1V406h-1zM705,405h1V406h-1zM706,405h1V406h-1zM707,405h1V406h-1zM708,405h1V406h-1zM709,405h1V406h-1zM710,405h1V406h-1zM711,405h1V406h-1zM712,405h1V406h-1zM713,405h1V406h-1zM714,405h1V406h-1zM715,405h1V406h-1zM716,405h1V406h-1zM717,405h1V406h-1zM718,405h1V406h-1zM719,405h1V406h-1zM720,405h1V406h-1zM721,405h1V406h-1zM722,405h1V406h-1zM723,405h1V406h-1zM724,405h1V406h-1zM725,405h1V406h-1zM726,405h1V406h-1zM727,405h1V406h-1zM728,405h1V406h-1zM729,405h1V406h-1zM730,405h1V406h-1zM731,405h1V406h-1zM732,405h1V406h-1zM733,405h1V406h-1zM734,405h1V406h-1zM735,405h1V406h-1zM736,405h1V406h-1zM737,405h1V406h-1zM738,405h1V406h-1zM739,405h1V406h-1zM740,405h1V406h-1zM741,405h1V406h-1zM742,405h1V406h-1zM743,405h1V406h-1zM744,405h1V406h-1zM745,405h1V406h-1zM746,405h1V406h-1zM747,405h1V406h-1zM748,405h1V406h-1zM749,405h1V406h-1zM750,405h1V406h-1zM751,405h1V406h-1zM752,405h1V406h-1zM753,405h1V406h-1zM754,405h1V406h-1zM755,405h1V406h-1zM756,405h1V406h-1zM757,405h1V406h-1zM758,405h1V406h-1zM759,405h1V406h-1zM760,405h1V406h-1zM761,405h1V406h-1zM762,405h1V406h-1zM763,405h1V406h-1zM764,405h1V406h-1zM765,405h1V406h-1zM766,405h1V406h-1zM767,405h1V406h-1zM768,405h1V406h-1zM769,405h1V406h-1zM770,405h1V406h-1zM771,405h1V406h-1zM772,405h1V406h-1zM773,405h1V406h-1zM774,405h1V406h-1zM775,405h1V406h-1zM776,405h1V406h-1zM777,405h1V406h-1zM778,405h1V406h-1zM779,405h1V406h-1zM780,405h1V406h-1zM781,405h1V406h-1zM782,405h1V406h-1zM783,405h1V406h-1zM784,405h1V406h-1zM785,405h1V406h-1zM786,405h1V406h-1zM787,405h1V406h-1zM788,405h1V406h-1zM789,405h1V406h-1zM790,405h1V406h-1zM791,405h1V406h-1zM792,405h1V406h-1zM793,405h1V406h-1zM794,405h1V406h-1zM795,405h1V406h-1zM796,405h1V406h-1zM797,405h1V406h-1zM798,405h1V406h-1zM799,405h1V406h-1zM800,405h1V406h-1zM801,405h1V406h-1zM802,405h1V406h-1zM803,405h1V406h-1zM804,405h1V406h-1zM805,405h1V406h-1zM806,405h1V406h-1zM807,405h1V406h-1zM808,405h1V406h-1zM809,405h1V406h-1zM810,405h1V406h-1zM811,405h1V406h-1zM812,405h1V406h-1zM813,405h1V406h-1zM814,405h1V406h-1zM815,405h1V406h-1zM816,405h1V406h-1zM817,405h1V406h-1zM818,405h1V406h-1zM819,405h1V406h-1zM820,405h1V406h-1zM821,405h1V406h-1zM822,405h1V406h-1zM823,405h1V406h-1zM824,405h1V406h-1zM825,405h1V406h-1zM826,405h1V406h-1zM827,405h1V406h-1zM828,405h1V406h-1zM829,405h1V406h-1zM830,405h1V406h-1zM831,405h1V406h-1zM832,405h1V406h-1zM833,405h1V406h-1zM834,405h1V406h-1zM835,405h1V406h-1zM836,405h1V406h-1zM837,405h1V406h-1zM838,405h1V406h-1zM839,405h1V406h-1zM840,405h1V406h-1zM841,405h1V406h-1zM842,405h1V406h-1zM843,405h1V406h-1zM844,405h1V406h-1zM845,405h1V406h-1zM846,405h1V406h-1zM847,405h1V406h-1zM848,405h1V406h-1zM849,405h1V406h-1zM850,405h1V406h-1zM851,405h1V406h-1zM852,405h1V406h-1zM853,405h1V406h-1zM854,405h1V406h-1zM855,405h1V406h-1zM856,405h1V406h-1zM857,405h1V406h-1zM858,405h1V406h-1zM859,405h1V406h-1zM860,405h1V406h-1zM861,405h1V406h-1zM862,405h1V406h-1zM863,405h1V406h-1zM864,405h1V406h-1zM865,405h1V406h-1zM866,405h1V406h-1zM867,405h1V406h-1zM868,405h1V406h-1zM869,405h1V406h-1zM870,405h1V406h-1zM871,405h1V406h-1zM872,405h1V406h-1zM873,405h1V406h-1zM874,405h1V406h-1zM875,405h1V406h-1zM876,405h1V406h-1zM877,405h1V406h-1zM878,405h1V406h-1zM879,405h1V406h-1zM880,405h1V406h-1zM881,405h1V406h-1zM882,405h1V406h-1zM883,405h1V406h-1zM884,405h1V406h-1zM885,405h1V406h-1zM886,405h1V406h-1zM887,405h1V406h-1zM888,405h1V406h-1zM889,405h1V406h-1zM890,405h1V406h-1zM891,405h1V406h-1zM892,405h1V406h-1zM893,405h1V406h-1zM894,405h1V406h-1zM895,405h1V406h-1zM896,405h1V406h-1zM897,405h1V406h-1zM898,405h1V406h-1zM899,405h1V406h-1zM900,405h1V406h-1zM901,405h1V406h-1zM902,405h1V406h-1zM903,405h1V406h-1zM904,405h1V406h-1zM905,405h1V406h-1zM906,405h1V406h-1zM907,405h1V406h-1zM908,405h1V406h-1zM909,405h1V406h-1zM910,405h1V406h-1zM911,405h1V406h-1zM912,405h1V406h-1zM913,405h1V406h-1zM914,405h1V406h-1zM915,405h1V406h-1zM916,405h1V406h-1zM917,405h1V406h-1zM918,405h1V406h-1zM919,405h1V406h-1zM920,405h1V406h-1zM921,405h1V406h-1zM922,405h1V406h-1zM923,405h1V406h-1zM924,405h1V406h-1zM925,405h1V406h-1zM926,405h1V406h-1zM927,405h1V406h-1zM928,405h1V406h-1zM929,405h1V406h-1zM930,405h1V406h-1zM931,405h1V406h-1zM932,405h1V406h-1zM933,405h1V406h-1zM934,405h1V406h-1zM935,405h1V406h-1zM936,405h1V406h-1zM937,405h1V406h-1zM938,405h1V406h-1zM939,405h1V406h-1zM940,405h1V406h-1zM941,405h1V406h-1zM942,405h1V406h-1zM943,405h1V406h-1zM944,405h1V406h-1zM945,405h1V406h-1zM946,405h1V406h-1zM947,405h1V406h-1zM948,405h1V406h-1zM949,405h1V406h-1zM950,405h1V406h-1zM951,405h1V406h-1zM952,405h1V406h-1zM953,405h1V406h-1zM954,405h1V406h-1zM955,405h1V406h-1zM956,405h1V406h-1zM957,405h1V406h-1zM958,405h1V406h-1zM959,405h1V406h-1zM960,405h1V406h-1zM961,405h1V406h-1zM962,405h1V406h-1zM963,405h1V406h-1zM964,405h1V406h-1zM965,405h1V406h-1zM966,405h1V406h-1zM967,405h1V406h-1zM968,405h1V406h-1zM969,405h1V406h-1zM970,405h1V406h-1zM971,405h1V406h-1zM972,405h1V406h-1zM973,405h1V406h-1zM974,405h1V406h-1zM975,405h1V406h-1zM976,405h1V406h-1zM977,405h1V406h-1zM978,405h1V406h-1zM979,405h1V406h-1zM980,405h1V406h-1zM981,405h1V406h-1zM982,405h1V406h-1zM983,405h1V406h-1zM984,405h1V406h-1zM985,405h1V406h-1zM986,405h1V406h-1zM987,405h1V406h-1zM988,405h1V406h-1zM989,405h1V406h-1zM990,405h1V406h-1zM991,405h1V406h-1zM992,405h1V406h-1zM993,405h1V406h-1zM994,405h1V406h-1zM995,405h1V406h-1zM996,405h1V406h-1zM997,405h1V406h-1zM998,405h1V406h-1zM999,405h1V406h-1zM1000,405h1V406h-1zM1001,405h1V406h-1zM1002,405h1V406h-1zM1003,405h1V406h-1zM1004,405h1V406h-1zM1005,405h1V406h-1zM1006,405h1V406h-1zM1007,405h1V406h-1zM1008,405h1V406h-1zM1009,405h1V406h-1zM1010,405h1V406h-1zM1011,405h1V406h-1zM1012,405h1V406h-1zM1013,405h1V406h-1zM1014,405h1V406h-1zM1015,405h1V406h-1zM1016,405h1V406h-1zM1017,405h1V406h-1zM1018,405h1V406h-1zM1019,405h1V406h-1zM1020,405h1V406h-1zM1021,405h1V406h-1zM1022,405h1V406h-1zM1023,405h1V406h-1zM1024,405h1V406h-1zM1025,405h1V406h-1zM1026,405h1V406h-1zM1027,405h1V406h-1zM1028,405h1V406h-1zM1029,405h1V406h-1zM1030,405h1V406h-1zM1031,405h1V406h-1zM1032,405h1V406h-1zM1033,405h1V406h-1zM1034,405h1V406h-1zM1035,405h1V406h-1zM1036,405h1V406h-1zM1037,405h1V406h-1zM1038,405h1V406h-1zM1039,405h1V406h-1zM1040,405h1V406h-1zM1041,405h1V406h-1zM1042,405h1V406h-1zM1043,405h1V406h-1zM1044,405h1V406h-1zM1045,405h1V406h-1zM1046,405h1V406h-1zM1047,405h1V406h-1zM1048,405h1V406h-1zM1049,405h1V406h-1zM1050,405h1V406h-1zM1051,405h1V406h-1zM1052,405h1V406h-1zM1053,405h1V406h-1zM1054,405h1V406h-1zM1055,405h1V406h-1zM1056,405h1V406h-1zM1057,405h1V406h-1zM1058,405h1V406h-1zM1059,405h1V406h-1zM1060,405h1V406h-1zM1061,405h1V406h-1zM1062,405h1V406h-1zM1063,405h1V406h-1zM1064,405h1V406h-1zM1065,405h1V406h-1zM1066,405h1V406h-1zM1067,405h1V406h-1zM1068,405h1V406h-1zM1069,405h1V406h-1zM1070,405h1V406h-1zM1071,405h1V406h-1zM1072,405h1V406h-1zM1073,405h1V406h-1zM1074,405h1V406h-1zM1075,405h1V406h-1zM1076,405h1V406h-1zM1077,405h1V406h-1zM1078,405h1V406h-1zM1079,405h1V406h-1zM1080,405h1V406h-1zM1081,405h1V406h-1zM1082,405h1V406h-1zM1083,405h1V406h-1zM1084,405h1V406h-1zM1085,405h1V406h-1zM1086,405h1V406h-1zM1087,405h1V406h-1zM1088,405h1V406h-1zM1089,405h1V406h-1zM1090,405h1V406h-1zM1091,405h1V406h-1zM1092,405h1V406h-1zM1093,405h1V406h-1zM1094,405h1V406h-1zM1095,405h1V406h-1zM1096,405h1V406h-1zM1097,405h1V406h-1zM1098,405h1V406h-1zM1099,405h1V406h-1zM1100,405h1V406h-1zM1101,405h1V406h-1zM1102,405h1V406h-1zM1103,405h1V406h-1zM1104,405h1V406h-1zM1105,405h1V406h-1zM1106,405h1V406h-1zM1107,405h1V406h-1zM1108,405h1V406h-1zM1109,405h1V406h-1zM1110,405h1V406h-1zM1111,405h1V406h-1zM1112,405h1V406h-1zM1113,405h1V406h-1zM1114,405h1V406h-1zM1115,405h1V406h-1zM1116,405h1V406h-1zM1117,405h1V406h-1zM1118,405h1V406h-1zM1119,405h1V406h-1zM1120,405h1V406h-1zM1121,405h1V406h-1zM1122,405h1V406h-1zM1123,405h1V406h-1zM1124,405h1V406h-1zM1125,405h1V406h-1zM1126,405h1V406h-1zM1127,405h1V406h-1zM1128,405h1V406h-1zM1129,405h1V406h-1zM1130,405h1V406h-1zM1131,405h1V406h-1zM1132,405h1V406h-1zM1133,405h1V406h-1zM1134,405h1V406h-1zM1135,405h1V406h-1zM1136,405h1V406h-1zM1137,405h1V406h-1zM1138,405h1V406h-1zM1139,405h1V406h-1zM1140,405h1V406h-1zM1141,405h1V406h-1zM1142,405h1V406h-1zM1143,405h1V406h-1zM1144,405h1V406h-1zM1145,405h1V406h-1zM1146,405h1V406h-1zM1147,405h1V406h-1zM1148,405h1V406h-1zM1149,405h1V406h-1zM1150,405h1V406h-1zM1151,405h1V406h-1zM1152,405h1V406h-1zM1153,405h1V406h-1zM1154,405h1V406h-1zM1155,405h1V406h-1zM1156,405h1V406h-1zM1157,405h1V406h-1zM1158,405h1V406h-1zM1159,405h1V406h-1zM1160,405h1V406h-1zM1161,405h1V406h-1zM1162,405h1V406h-1zM1163,405h1V406h-1zM1164,405h1V406h-1zM1165,405h1V406h-1zM1166,405h1V406h-1zM1167,405h1V406h-1zM1168,405h1V406h-1zM1169,405h1V406h-1zM1170,405h1V406h-1zM1171,405h1V406h-1zM1172,405h1V406h-1zM1173,405h1V406h-1zM1174,405h1V406h-1zM1175,405h1V406h-1zM1176,405h1V406h-1zM1177,405h1V406h-1zM1178,405h1V406h-1zM1179,405h1V406h-1zM1180,405h1V406h-1zM1181,405h1V406h-1zM1182,405h1V406h-1zM1183,405h1V406h-1zM1184,405h1V406h-1zM1185,405h1V406h-1zM1186,405h1V406h-1zM1187,405h1V406h-1zM1188,405h1V406h-1zM1189,405h1V406h-1zM1190,405h1V406h-1zM1191,405h1V406h-1zM1192,405h1V406h-1zM1193,405h1V406h-1zM1194,405h1V406h-1zM1195,405h1V406h-1zM1196,405h1V406h-1zM1197,405h1V406h-1zM1198,405h1V406h-1zM1199,405h1V406h-1zM1200,405h1V406h-1zM1201,405h1V406h-1zM1202,405h1V406h-1zM1203,405h1V406h-1zM1204,405h1V406h-1zM1205,405h1V406h-1zM1206,405h1V406h-1zM1207,405h1V406h-1zM1208,405h1V406h-1zM1209,405h1V406h-1zM1210,405h1V406h-1zM1211,405h1V406h-1zM1212,405h1V406h-1zM1213,405h1V406h-1zM1214,405h1V406h-1zM1215,405h1V406h-1zM1216,405h1V406h-1zM1217,405h1V406h-1zM1218,405h1V406h-1zM1219,405h1V406h-1zM1220,405h1V406h-1zM1221,405h1V406h-1zM1222,405h1V406h-1zM1223,405h1V406h-1zM1224,405h1V406h-1zM1225,405h1V406h-1zM1226,405h1V406h-1zM1227,405h1V406h-1zM1228,405h1V406h-1zM1229,405h1V406h-1zM1230,405h1V406h-1zM1231,405h1V406h-1zM1232,405h1V406h-1zM1233,405h1V406h-1zM1234,405h1V406h-1zM1235,405h1V406h-1zM1236,405h1V406h-1zM1237,405h1V406h-1zM1238,405h1V406h-1zM1239,405h1V406h-1zM1240,405h1V406h-1zM1241,405h1V406h-1zM1242,405h1V406h-1zM1243,405h1V406h-1zM1244,405h1V406h-1zM1245,405h1V406h-1zM1246,405h1V406h-1zM1247,405h1V406h-1zM1248,405h1V406h-1zM1249,405h1V406h-1zM1250,405h1V406h-1zM1251,405h1V406h-1zM1252,405h1V406h-1zM1253,405h1V406h-1zM1254,405h1V406h-1zM1255,405h1V406h-1zM1256,405h1V406h-1zM1257,405h1V406h-1zM1258,405h1V406h-1zM1259,405h1V406h-1zM1260,405h1V406h-1zM1261,405h1V406h-1zM1262,405h1V406h-1zM1263,405h1V406h-1zM1264,405h1V406h-1zM1265,405h1V406h-1zM1266,405h1V406h-1zM1267,405h1V406h-1zM1268,405h1V406h-1zM1269,405h1V406h-1zM1270,405h1V406h-1zM1271,405h1V406h-1zM1272,405h1V406h-1zM1273,405h1V406h-1zM1274,405h1V406h-1zM1275,405h1V406h-1zM1276,405h1V406h-1zM1277,405h1V406h-1zM1278,405h1V406h-1zM1279,405h1V406h-1zM1280,405h1V406h-1zM1281,405h1V406h-1zM1282,405h1V406h-1zM1283,405h1V406h-1zM1284,405h1V406h-1zM1285,405h1V406h-1zM1286,405h1V406h-1zM1287,405h1V406h-1zM1288,405h1V406h-1zM1289,405h1V406h-1zM1290,405h1V406h-1zM1291,405h1V406h-1zM1292,405h1V406h-1zM1293,405h1V406h-1zM1294,405h1V406h-1zM1295,405h1V406h-1zM1296,405h1V406h-1zM1297,405h1V406h-1zM1298,405h1V406h-1zM1299,405h1V406h-1zM1300,405h1V406h-1zM1301,405h1V406h-1zM1302,405h1V406h-1zM1303,405h1V406h-1zM1304,405h1V406h-1zM1305,405h1V406h-1zM1306,405h1V406h-1zM1307,405h1V406h-1zM1308,405h1V406h-1zM1309,405h1V406h-1zM1310,405h1V406h-1zM1311,405h1V406h-1zM1312,405h1V406h-1zM1313,405h1V406h-1zM1314,405h1V406h-1zM1315,405h1V406h-1zM1316,405h1V406h-1zM1317,405h1V406h-1zM1318,405h1V406h-1zM1319,405h1V406h-1zM1320,405h1V406h-1zM1321,405h1V406h-1zM1322,405h1V406h-1zM1323,405h1V406h-1zM1324,405h1V406h-1zM1325,405h1V406h-1zM1326,405h1V406h-1zM1327,405h1V406h-1zM1328,405h1V406h-1zM1329,405h1V406h-1zM1330,405h1V406h-1zM1331,405h1V406h-1zM1332,405h1V406h-1zM1333,405h1V406h-1zM1334,405h1V406h-1zM1335,405h1V406h-1zM1336,405h1V406h-1zM1337,405h1V406h-1zM1338,405h1V406h-1zM1339,405h1V406h-1zM1340,405h1V406h-1zM1341,405h1V406h-1zM1342,405h1V406h-1zM1343,405h1V406h-1zM1344,405h1V406h-1zM1345,405h1V406h-1zM1346,405h1V406h-1zM1347,405h1V406h-1zM1348,405h1V406h-1zM1349,405h1V406h-1zM1350,405h1V406h-1zM1351,405h1V406h-1zM1352,405h1V406h-1zM1353,405h1V406h-1zM1354,405h1V406h-1zM1355,405h1V406h-1zM1356,405h1V406h-1zM1357,405h1V406h-1zM1358,405h1V406h-1zM1359,405h1V406h-1zM1360,405h1V406h-1zM1361,405h1V406h-1zM1362,405h1V406h-1zM1363,405h1V406h-1zM1364,405h1V406h-1zM1365,405h1V406h-1zM1366,405h1V406h-1zM1367,405h1V406h-1zM1368,405h1V406h-1zM1369,405h1V406h-1zM1370,405h1V406h-1zM1371,405h1V406h-1zM1372,405h1V406h-1zM1373,405h1V406h-1zM1374,405h1V406h-1zM1375,405h1V406h-1zM1376,406h1V407h-1zM1377,406h1V407h-1zM1378,406h1V407h-1zM1379,406h1V407h-1zM1380,406h1V407h-1zM1381,406h1V407h-1zM1382,406h1V407h-1zM1383,406h1V407h-1zM1384,406h1V407h-1zM1385,406h1V407h-1zM1386,406h1V407h-1zM1387,406h1V407h-1zM1388,406h1V407h-1zM1389,406h1V407h-1zM1390,406h1V407h-1zM1391,406h1V407h-1zM1392,406h1V407h-1zM1393,406h1V407h-1zM1394,406h1V407h-1zM1395,406h1V407h-1zM1396,406h1V407h-1zM1397,406h1V407h-1zM1398,406h1V407h-1zM1399,406h1V407h-1zM1400,406h1V407h-1zM1401,406h1V407h-1zM1402,406h1V407h-1zM1403,406h1V407h-1zM1404,406h1V407h-1zM1405,406h1V407h-1zM1406,406h1V407h-1zM1407,406h1V407h-1zM1408,406h1V407h-1zM1409,406h1V407h-1zM1410,406h1V407h-1zM1411,406h1V407h-1zM1412,406h1V407h-1zM1413,406h1V407h-1zM1414,406h1V407h-1zM1415,406h1V407h-1zM1416,406h1V407h-1zM1417,406h1V407h-1zM1418,406h1V407h-1zM1419,406h1V407h-1zM1420,406h1V407h-1zM1421,406h1V407h-1zM1422,406h1V407h-1zM1423,406h1V407h-1zM1424,406h1V407h-1zM1425,406h1V407h-1zM1426,406h1V407h-1zM1427,406h1V407h-1zM1428,406h1V407h-1zM1429,406h1V407h-1zM1430,406h1V407h-1zM1431,406h1V407h-1zM1432,406h1V407h-1zM1433,406h1V407h-1zM1434,406h1V407h-1zM1435,406h1V407h-1zM1436,406h1V407h-1zM1437,406h1V407h-1zM1438,406h1V407h-1zM1439,406h1V407h-1zM1440,406h1V407h-1zM1441,406h1V407h-1zM1442,406h1V407h-1zM1443,406h1V407h-1zM1444,406h1V407h-1zM1445,406h1V407h-1zM1446,406h1V407h-1zM1447,406h1V407h-1zM1448,406h1V407h-1zM1449,406h1V407h-1zM1450,406h1V407h-1zM1451,406h1V407h-1zM1452,406h1V407h-1zM1453,406h1V407h-1zM1454,406h1V407h-1zM1455,406h1V407h-1zM1456,406h1V407h-1zM1457,406h1V407h-1zM1458,406h1V407h-1zM1459,406h1V407h-1zM1460,406h1V407h-1zM1461,406h1V407h-1zM1462,406h1V407h-1zM1463,406h1V407h-1zM1464,406h1V407h-1zM1465,406h1V407h-1zM1466,406h1V407h-1zM1467,406h1V407h-1zM1468,406h1V407h-1zM1469,406h1V407h-1zM1470,406h1V407h-1zM1471,406h1V407h-1zM1472,406h1V407h-1zM1473,406h1V407h-1zM1474,406h1V407h-1zM1475,406h1V407h-1zM1476,406h1V407h-1zM1477,406h1V407h-1zM1478,406h1V407h-1zM1479,406h1V407h-1zM1480,406h1V407h-1zM1481,406h1V407h-1zM1482,406h1V407h-1zM1483,406h1V407h-1zM1484,406h1V407h-1zM1485,406h1V407h-1zM1486,406h1V407h-1zM1487,406h1V407h-1zM1488,406h1V407h-1zM1489,406h1V407h-1zM1490,406h1V407h-1zM1491,406h1V407h-1zM1492,406h1V407h-1zM1493,406h1V407h-1zM1494,406h1V407h-1zM1495,406h1V407h-1zM1496,406h1V407h-1zM1497,406h1V407h-1zM1498,406h1V407h-1zM1499,406h1V407h-1zM1500,406h1V407h-1zM1501,406h1V407h-1zM1502,406h1V407h-1zM1503,406h1V407h-1zM1504,406h1V407h-1zM1505,406h1V407h-1zM1506,406h1V407h-1zM1507,406h1V407h-1zM1508,406h1V407h-1zM1509,406h1V407h-1zM1510,406h1V407h-1zM1511,406h1V407h-1zM1512,406h1V407h-1zM1513,406h1V407h-1zM1514,406h1V407h-1zM1515,406h1V407h-1zM1516,406h1V407h-1zM1517,406h1V407h-1zM1518,406h1V407h-1zM1519,406h1V407h-1zM1520,406h1V407h-1zM1521,406h1V407h-1zM1522,406h1V407h-1zM1523,406h1V407h-1zM1524,406h1V407h-1zM1525,406h1V407h-1zM1526,406h1V407h-1zM1527,406h1V407h-1zM1528,406h1V407h-1zM1529,406h1V407h-1zM1530,406h1V407h-1zM1531,406h1V407h-1zM1532,406h1V407h-1zM1533,406h1V407h-1zM1534,406h1V407h-1zM1535,406h1V407h-1zM1536,406h1V407h-1zM1537,406h1V407h-1zM1538,406h1V407h-1zM1539,406h1V407h-1zM1540,406h1V407h-1zM1541,406h1V407h-1zM1542,406h1V407h-1zM1543,406h1V407h-1zM1544,406h1V407h-1zM1545,406h1V407h-1zM1546,406h1V407h-1zM1547,406h1V407h-1zM1548,406h1V407h-1zM1549,406h1V407h-1zM1550,406h1V407h-1zM1551,406h1V407h-1zM1552,406h1V407h-1zM1553,406h1V407h-1zM1554,406h1V407h-1zM1555,406h1V407h-1zM1556,406h1V407h-1zM1557,406h1V407h-1zM1558,406h1V407h-1zM1559,406h1V407h-1zM1560,406h1V407h-1zM1561,406h1V407h-1zM1562,406h1V407h-1zM1563,406h1V407h-1zM1564,406h1V407h-1zM1565,406h1V407h-1zM1566,406h1V407h-1zM1567,406h1V407h-1zM1568,406h1V407h-1zM1569,406h1V407h-1zM1570,406h1V407h-1zM1571,406h1V407h-1zM1572,406h1V407h-1zM1573,406h1V407h-1zM1574,406h1V407h-1zM1575,406h1V407h-1zM1576,406h1V407h-1zM1577,406h1V407h-1zM1578,406h1V407h-1zM1579,406h1V407h-1zM1580,406h1V407h-1zM1581,406h1V407h-1zM1582,406h1V407h-1zM1583,406h1V407h-1zM1584,406h1V407h-1zM1585,406h1V407h-1zM1586,406h1V407h-1zM1587,406h1V407h-1zM1588,406h1V407h-1zM1589,406h1V407h-1zM1590,406h1V407h-1zM1591,406h1V407h-1zM1592,406h1V407h-1zM1593,406h1V407h-1zM1594,406h1V407h-1zM1595,406h1V407h-1zM1596,406h1V407h-1zM1597,406h1V407h-1zM1598,406h1V407h-1zM1599,406h1V407h-1zM1600,406h1V407h-1zM1601,406h1V407h-1zM1602,406h1V407h-1zM1603,406h1V407h-1zM1604,406h1V407h-1zM1605,406h1V407h-1zM1606,406h1V407h-1zM1607,406h1V407h-1zM1608,406h1V407h-1zM1609,406h1V407h-1zM1610,406h1V407h-1zM1611,406h1V407h-1zM1612,406h1V407h-1zM1613,406h1V407h-1zM1614,406h1V407h-1zM1615,406h1V407h-1zM1616,406h1V407h-1zM1617,406h1V407h-1zM1618,406h1V407h-1zM1619,406h1V407h-1zM1620,406h1V407h-1zM1621,406h1V407h-1zM1622,406h1V407h-1zM1623,406h1V407h-1zM1624,406h1V407h-1zM1625,406h1V407h-1zM1626,406h1V407h-1zM1627,406h1V407h-1zM1628,406h1V407h-1zM1629,406h1V407h-1zM1630,406h1V407h-1zM1631,406h1V407h-1zM1632,406h1V407h-1zM1633,406h1V407h-1zM1634,406h1V407h-1zM1635,406h1V407h-1zM1636,406h1V407h-1zM1637,406h1V407h-1zM1638,406h1V407h-1zM1639,406h1V407h-1zM1640,406h1V407h-1zM1641,406h1V407h-1zM1642,406h1V407h-1zM1643,406h1V407h-1zM1644,406h1V407h-1zM1645,406h1V407h-1zM1646,406h1V407h-1zM1647,406h1V407h-1zM1648,406h1V407h-1zM1649,406h1V407h-1zM1650,406h1V407h-1zM1651,406h1V407h-1zM1652,406h1V407h-1zM1653,406h1V407h-1zM1654,406h1V407h-1zM1655,406h1V407h-1zM1656,406h1V407h-1zM1657,406h1V407h-1zM1658,406h1V407h-1zM1659,406h1V407h-1zM1660,406h1V407h-1zM1661,406h1V407h-1zM1662,406h1V407h-1zM1663,406h1V407h-1zM1664,406h1V407h-1zM1665,406h1V407h-1zM1666,406h1V407h-1zM1667,406h1V407h-1zM1668,406h1V407h-1zM1669,406h1V407h-1zM1670,406h1V407h-1zM1671,406h1V407h-1zM1672,406h1V407h-1zM1673,406h1V407h-1zM1674,406h1V407h-1zM1675,406h1V407h-1zM1676,406h1V407h-1zM1677,406h1V407h-1zM1678,406h1V407h-1zM1679,406h1V407h-1zM1680,406h1V407h-1zM1681,406h1V407h-1zM1682,406h1V407h-1zM1683,406h1V407h-1zM1684,406h1V407h-1zM1685,406h1V407h-1zM1686,406h1V407h-1zM1687,406h1V407h-1zM1688,406h1V407h-1zM1689,406h1V407h-1zM1690,406h1V407h-1zM1691,406h1V407h-1zM1692,406h1V407h-1zM1693,406h1V407h-1zM1694,406h1V407h-1zM1695,406h1V407h-1zM1696,406h1V407h-1zM1697,406h1V407h-1zM1698,406h1V407h-1zM1699,406h1V407h-1zM1700,406h1V407h-1zM1701,406h1V407h-1zM1702,406h1V407h-1zM1703,406h1V407h-1zM1704,406h1V407h-1zM1705,406h1V407h-1zM1706,406h1V407h-1zM1707,406h1V407h-1zM1708,406h1V407h-1zM1709,406h1V407h-1zM1710,406h1V407h-1zM1711,406h1V407h-1zM1712,406h1V407h-1zM1713,406h1V407h-1zM1714,406h1V407h-1zM1715,406h1V407h-1zM1716,406h1V407h-1zM1717,406h1V407h-1zM1718,406h1V407h-1zM1719,406h1V407h-1zM1720,406h1V407h-1zM1721,406h1V407h-1zM1722,406h1V407h-1zM1723,406h1V407h-1zM1724,406h1V407h-1zM1725,406h1V407h-1zM1726,406h1V407h-1zM1727,406h1V407h-1zM1728,406h1V407h-1zM1729,406h1V407h-1zM1730,406h1V407h-1zM1731,406h1V407h-1zM1732,406h1V407h-1zM1733,406h1V407h-1zM1734,406h1V407h-1zM1735,406h1V407h-1zM1736,406h1V407h-1zM1737,406h1V407h-1zM1738,406h1V407h-1zM1739,406h1V407h-1zM1740,406h1V407h-1zM1741,406h1V407h-1zM1742,406h1V407h-1zM1743,406h1V407h-1zM1744,406h1V407h-1zM1745,406h1V407h-1zM1746,406h1V407h-1zM1747,406h1V407h-1zM1748,406h1V407h-1zM1749,406h1V407h-1zM1750,406h1V407h-1z" fill="#22c4d4" shape-rendering="crispEdges"/>
<path d="M3,641h1V642h-1zM4,641h1V642h-1zM5,641h1V642h-1zM6,641h1V642h-1zM7,641h1V642h-1zM8,641h1V642h-1zM9,641h1V642h-1zM10,641h1V642h-1zM11,641h1V642h-1zM12,641h1V642h-1zM13,641h1V642h-1zM14,641h1V642h-1zM15,641h1V642h-1zM16,641h1V642h-1zM17,641h1V642h-1zM18,641h1V642h-1zM19,641h1V642h-1zM20,641h1V642h-1zM21,641h1V642h-1zM22,641h1V642h-1zM23,641h1V642h-1zM24,641h1V642h-1zM25,641h1V642h-1zM26,641h1V642h-1zM27,641h1V642h-1zM28,641h1V642h-1zM29,641h1V642h-1zM30,641h1V642h-1zM31,641h1V642h-1zM32,641h1V642h-1zM33,641h1V642h-1zM34,641h1V642h-1zM35,641h1V642h-1zM36,641h1V642h-1zM37,641h1V642h-1zM38,641h1V642h-1zM39,641h1V642h-1zM40,641h1V642h-1zM41,641h1V642h-1zM42,641h1V642h-1zM43,641h1V642h-1zM44,641h1V642h-1zM45,641h1V642h-1zM46,641h1V642h-1zM47,641h1V642h-1zM48,641h1V642h-1zM49,641h1V642h-1zM50,641h1V642h-1zM51,641h1V642h-1zM52,641h1V642h-1zM53,641h1V642h-1zM54,641h1V642h-1zM55,641h1V646h-1zM56,645h1V654h-1zM57,646h1V654h-1zM58,647h1V650h-1zM59,646h1V650h-1zM60,643h1V647h-1zM61,643h1V646h-1zM62,645h1V648h-1zM63,645h1V648h-1zM64,642h1V645h-1zM65,642h1V645h-1zM66,644h1V647h-1zM67,644h1V647h-1zM68,642h1V645h-1zM69,642h1V644h-1zM70,643h1V646h-1zM71,643h1V646h-1zM72,641h1V644h-1zM73,641h1V643h-1zM74,643h1V645h-1zM75,643h1V645h-1zM76,642h1V644h-1zM77,641h1V643h-1zM78,641h1V642h-1zM79,641h1V642h-1zM80,641h1V642h-1zM81,641h1V642h-1zM82,641h1V642h-1zM83,641h1V642h-1zM84,641h1V642h-1zM85,641h1V642h-1zM86,641h1V642h-1zM87,641h1V642h-1zM88,641h1V642h-1zM89,641h1V642h-1zM90,641h1V642h-1zM91,641h1V642h-1zM92,641h1V642h-1zM93,641h1V642h-1zM94,641h1V642h-1zM95,641h1V642h-1zM96,641h1V642h-1zM97,641h1V642h-1zM98,641h1V642h-1zM99,641h1V642h-1zM100,641h1V642h-1zM101,641h1V642h-1zM102,641h1V642h-1zM103,641h1V642h-1zM104,641h1V642h-1zM105,641h1V642h-1zM106,641h1V642h-1zM107,641h1V642h-1zM108,641h1V642h-1zM109,641h1V642h-1zM110,641h1V642h-1zM111,641h1V642h-1zM112,641h1V642h-1zM113,641h1V642h-1zM114,641h1V642h-1zM115,641h1V642h-1zM116,641h1V642h-1zM117,641h1V642h-1zM118,641h1V642h-1zM119,641h1V642h-1zM120,641h1V642h-1zM121,641h1V642h-1zM122,641h1V642h-1zM123,641h1V642h-1zM124,641h1V642h-1zM125,641h1V642h-1zM126,641h1V642h-1zM127,641h1V642h-1zM128,641h1V642h-1zM129,641h1V642h-1zM130,641h1V642h-1zM131,641h1V642h-1zM132,641h1V642h-1zM133,641h1V642h-1zM134,641h1V642h-1zM135,641h1V642h-1zM136,641h1V642h-1zM137,641h1V642h-1zM138,641h1V642h-1zM139,641h1V642h-1zM140,641h1V642h-1zM141,641h1V642h-1zM142,641h1V642h-1zM143,641h1V642h-1zM144,641h1V642h-1zM145,641h1V642h-1zM146,641h1V642h-1zM147,641h1V642h-1zM148,641h1V642h-1zM149,641h1V642h-1zM150,641h1V642h-1zM151,641h1V642h-1zM152,641h1V642h-1zM153,641h1V642h-1zM154,641h1V642h-1zM155,641h1V642h-1zM156,641h1V642h-1zM157,641h1V642h-1zM158,641h1V642h-1zM159,641h1V642h-1zM160,641h1V642h-1zM161,641h1V642h-1zM162,641h1V642h-1zM163,641h1V642h-1zM164,641h1V642h-1zM165,641h1V642h-1zM166,641h1V642h-1zM167,641h1V642h-1zM168,641h1V642h-1zM169,641h1V642h-1zM170,641h1V642h-1zM171,641h1V642h-1zM172,641h1V642h-1zM173,641h1V642h-1zM174,641h1V642h-1zM175,641h1V642h-1zM176,641h1V642h-1zM177,641h1V642h-1zM178,641h1V642h-1zM179,641h1V642h-1zM180,641h1V642h-1zM181,641h1V642h-1zM182,641h1V642h-1zM183,641h1V642h-1zM184,641h1V642h-1zM185,641h1V642h-1zM186,641h1V642h-1zM187,641h1V642h-1zM188,641h1V642h-1zM189,641h1V642h-1zM190,641h1V642h-1zM191,641h1V642h-1zM192,641h1V642h-1zM193,641h1V642h-1zM194,641h1V642h-1zM195,641h1V642h-1zM196,641h1V642h-1zM197,641h1V642h-1zM198,641h1V642h-1zM199,641h1V642h-1zM200,641h1V642h-1zM201,641h1V642h-1zM202,641h1V642h-1zM203,641h1V642h-1zM204,641h1V642h-1zM205,641h1V644h-1zM206,642h1V644h-1zM207,642h1V646h-1zM208,644h1V652h-1zM209,650h1V652h-1zM210,648h1V652h-1zM211,649h1V652h-1zM212,649h1V653h-1zM213,649h1V652h-1zM214,647h1V650h-1zM215,648h1V666h-1zM216,663h1V666h-1zM217,660h1V663h-1zM218,658h1V666h-1zM219,656h1V661h-1zM220,653h1V660h-1zM221,653h1V657h-1zM222,650h1V660h-1zM223,653h1V657h-1zM224,648h1V657h-1zM225,653h1V657h-1zM226,653h1V656h-1zM227,652h1V655h-1zM228,651h1V654h-1zM229,652h1V656h-1zM230,651h1V655h-1zM231,652h1V656h-1zM232,651h1V655h-1zM233,651h1V654h-1zM234,650h1V654h-1zM235,650h1V654h-1zM236,652h1V656h-1zM237,654h1V656h-1zM238,652h1V657h-1zM239,653h1V660h-1zM240,651h1V655h-1zM241,651h1V656h-1zM242,652h1V655h-1zM243,652h1V656h-1zM244,651h1V655h-1zM245,650h1V654h-1zM246,645h1V653h-1zM247,649h1V654h-1zM248,651h1V658h-1zM249,648h1V655h-1zM250,652h1V655h-1zM251,652h1V655h-1zM252,652h1V656h-1zM253,650h1V655h-1zM254,651h1V654h-1zM255,651h1V655h-1zM256,651h1V654h-1zM257,650h1V654h-1zM258,650h1V654h-1zM259,650h1V655h-1zM260,651h1V656h-1zM261,651h1V656h-1zM262,651h1V655h-1zM263,651h1V655h-1zM264,651h1V654h-1zM265,649h1V655h-1zM266,650h1V654h-1zM267,645h1V654h-1zM268,649h1V655h-1zM269,650h1V654h-1zM270,650h1V653h-1zM271,650h1V654h-1zM272,645h1V655h-1zM273,652h1V655h-1zM274,650h1V655h-1zM275,650h1V654h-1zM276,643h1V653h-1zM277,648h1V653h-1zM278,643h1V653h-1zM279,650h1V657h-1zM280,649h1V653h-1zM281,649h1V653h-1zM282,649h1V656h-1zM283,649h1V654h-1zM284,650h1V659h-1zM285,650h1V668h-1zM286,649h1V657h-1zM287,652h1V658h-1zM288,651h1V657h-1zM289,652h1V658h-1zM290,652h1V658h-1zM291,650h1V666h-1zM292,652h1V660h-1zM293,651h1V657h-1zM294,649h1V658h-1zM295,651h1V657h-1zM296,651h1V659h-1zM297,654h1V662h-1zM298,653h1V661h-1zM299,655h1V659h-1zM300,653h1V662h-1zM301,653h1V661h-1zM302,655h1V662h-1zM303,654h1V662h-1zM304,656h1V661h-1zM305,654h1V661h-1zM306,655h1V662h-1zM307,660h1V666h-1zM308,660h1V669h-1zM309,664h1V672h-1zM310,664h1V669h-1zM311,661h1V669h-1zM312,661h1V666h-1zM313,661h1V669h-1zM314,663h1V669h-1zM315,662h1V671h-1zM316,663h1V678h-1zM317,664h1V672h-1zM318,666h1V671h-1zM319,667h1V674h-1zM320,668h1V674h-1zM321,670h1V678h-1zM322,665h1V676h-1zM323,668h1V676h-1zM324,667h1V676h-1zM325,665h1V674h-1zM326,668h1V678h-1zM327,670h1V679h-1zM328,664h1V679h-1zM329,669h1V678h-1zM330,672h1V692h-1zM331,662h1V683h-1zM332,676h1V699h-1zM333,675h1V687h-1zM334,675h1V685h-1zM335,672h1V680h-1zM336,671h1V681h-1zM337,670h1V680h-1zM338,671h1V680h-1zM339,676h1V681h-1zM340,676h1V684h-1zM341,678h1V686h-1zM342,679h1V688h-1zM343,680h1V689h-1zM344,680h1V692h-1zM345,684h1V691h-1zM346,681h1V691h-1zM347,683h1V689h-1zM348,679h1V690h-1zM349,680h1V691h-1zM350,681h1V690h-1zM351,678h1V691h-1zM352,678h1V691h-1zM353,668h1V692h-1zM354,682h1V690h-1zM355,670h1V689h-1zM356,674h1V685h-1zM357,673h1V684h-1zM358,675h1V693h-1zM359,672h1V682h-1zM360,673h1V679h-1zM361,658h1V683h-1zM362,673h1V682h-1zM363,678h1V685h-1zM364,676h1V684h-1zM365,679h1V687h-1zM366,679h1V690h-1zM367,680h1V686h-1zM368,677h1V685h-1zM369,678h1V686h-1zM370,663h1V683h-1zM371,672h1V683h-1zM372,670h1V680h-1zM373,672h1V682h-1zM374,672h1V682h-1zM375,676h1V684h-1zM376,676h1V684h-1zM377,674h1V684h-1zM378,675h1V686h-1zM379,672h1V681h-1zM380,673h1V689h-1zM381,671h1V686h-1zM382,672h1V679h-1zM383,671h1V680h-1zM384,675h1V680h-1zM385,672h1V681h-1zM386,672h1V681h-1zM387,673h1V679h-1zM388,662h1V679h-1zM389,672h1V680h-1zM390,670h1V678h-1zM391,673h1V678h-1zM392,671h1V680h-1zM393,673h1V680h-1zM394,670h1V679h-1zM395,669h1V678h-1zM396,673h1V681h-1zM397,674h1V679h-1zM398,674h1V682h-1zM399,674h1V681h-1zM400,674h1V682h-1zM401,671h1V681h-1zM402,671h1V681h-1zM403,674h1V681h-1zM404,674h1V684h-1zM405,676h1V686h-1zM406,676h1V682h-1zM407,676h1V685h-1zM408,675h1V680h-1zM409,675h1V684h-1zM410,677h1V687h-1zM411,679h1V689h-1zM412,680h1V690h-1zM413,681h1V689h-1zM414,680h1V688h-1zM415,676h1V685h-1zM416,677h1V682h-1zM417,673h1V682h-1zM418,676h1V683h-1zM419,678h1V685h-1zM420,654h1V690h-1zM421,687h1V703h-1zM422,694h1V711h-1zM423,679h1V708h-1zM424,666h1V684h-1zM425,677h1V702h-1zM426,696h1V706h-1zM427,699h1V710h-1zM428,687h1V703h-1zM429,668h1V692h-1zM430,649h1V674h-1zM431,641h1V665h-1zM432,659h1V699h-1zM433,673h1V700h-1zM434,660h1V676h-1zM435,655h1V664h-1zM436,652h1V660h-1zM437,651h1V690h-1zM438,681h1V695h-1zM439,690h1V703h-1zM440,698h1V713h-1zM441,691h1V706h-1zM442,693h1V702h-1zM443,693h1V700h-1zM444,696h1V701h-1zM445,691h1V698h-1zM446,687h1V697h-1zM447,686h1V692h-1zM448,685h1V689h-1zM449,683h1V688h-1zM450,678h1V686h-1zM451,675h1V683h-1zM452,674h1V679h-1zM453,672h1V676h-1zM454,672h1V675h-1zM455,673h1V674h-1zM456,672h1V673h-1zM457,670h1V673h-1zM458,668h1V671h-1zM459,666h1V669h-1zM460,664h1V667h-1zM461,662h1V665h-1zM462,660h1V663h-1zM463,658h1V660h-1zM464,657h1V659h-1zM465,655h1V657h-1zM466,654h1V656h-1zM467,652h1V654h-1zM468,651h1V653h-1zM469,650h1V652h-1zM470,650h1V651h-1zM471,649h1V650h-1zM472,648h1V650h-1zM473,648h1V649h-1zM474,647h1V648h-1zM475,647h1V648h-1zM476,647h1V648h-1zM477,647h1V648h-1zM478,646h1V647h-1zM479,646h1V647h-1zM480,646h1V647h-1zM481,646h1V647h-1zM482,646h1V647h-1zM483,646h1V647h-1zM484,646h1V647h-1zM485,646h1V647h-1zM486,645h1V646h-1zM487,645h1V646h-1zM488,645h1V646h-1zM489,645h1V646h-1zM490,645h1V646h-1zM491,645h1V646h-1zM492,645h1V646h-1zM493,645h1V646h-1zM494,645h1V646h-1zM495,645h1V646h-1zM496,645h1V646h-1zM497,645h1V646h-1zM498,645h1V646h-1zM499,645h1V646h-1zM500,645h1V646h-1zM501,645h1V646h-1zM502,645h1V646h-1zM503,645h1V646h-1zM504,645h1V646h-1zM505,645h1V646h-1zM506,645h1V646h-1zM507,645h1V646h-1zM508,645h1V646h-1zM509,645h1V646h-1zM510,644h1V645h-1zM511,644h1V645h-1zM512,644h1V645h-1zM513,644h1V645h-1zM514,644h1V645h-1zM515,644h1V645h-1zM516,644h1V645h-1zM517,644h1V645h-1zM518,644h1V645h-1zM519,644h1V645h-1zM520,644h1V645h-1zM521,644h1V645h-1zM522,644h1V645h-1zM523,644h1V645h-1zM524,644h1V645h-1zM525,644h1V645h-1zM526,644h1V645h-1zM527,644h1V645h-1zM528,644h1V645h-1zM529,644h1V645h-1zM530,644h1V645h-1zM531,644h1V645h-1zM532,644h1V645h-1zM533,644h1V645h-1zM534,644h1V645h-1zM535,643h1V644h-1zM536,643h1V644h-1zM537,643h1V644h-1zM538,643h1V644h-1zM539,643h1V644h-1zM540,643h1V644h-1zM541,643h1V644h-1zM542,643h1V644h-1zM543,643h1V644h-1zM544,643h1V644h-1zM545,643h1V644h-1zM546,643h1V644h-1zM547,643h1V644h-1zM548,643h1V644h-1zM549,643h1V644h-1zM550,643h1V644h-1zM551,643h1V644h-1zM552,643h1V644h-1zM553,643h1V644h-1zM554,643h1V644h-1zM555,643h1V644h-1zM556,643h1V644h-1zM557,643h1V644h-1zM558,643h1V644h-1zM559,643h1V644h-1zM560,643h1V644h-1zM561,643h1V644h-1zM562,643h1V644h-1zM563,643h1V644h-1zM564,643h1V644h-1zM565,643h1V644h-1zM566,643h1V644h-1zM567,643h1V644h-1zM568,642h1V643h-1zM569,642h1V643h-1zM570,642h1V643h-1zM571,642h1V643h-1zM572,642h1V643h-1zM573,642h1V643h-1zM574,642h1V643h-1zM575,642h1V643h-1zM576,642h1V643h-1zM577,642h1V643h-1zM578,642h1V643h-1zM579,642h1V643h-1zM580,642h1V643h-1zM581,642h1V643h-1zM582,642h1V643h-1zM583,642h1V643h-1zM584,642h1V643h-1zM585,642h1V643h-1zM586,642h1V643h-1zM587,642h1V643h-1zM588,642h1V643h-1zM589,642h1V643h-1zM590,642h1V643h-1zM591,642h1V643h-1zM592,642h1V643h-1zM593,642h1V643h-1zM594,642h1V643h-1zM595,642h1V643h-1zM596,642h1V643h-1zM597,642h1V643h-1zM598,642h1V643h-1zM599,642h1V643h-1zM600,642h1V643h-1zM601,642h1V643h-1zM602,642h1V643h-1zM603,642h1V643h-1zM604,641h1V642h-1zM605,641h1V642h-1zM606,641h1V642h-1zM607,641h1V642h-1zM608,641h1V642h-1zM609,641h1V642h-1zM610,641h1V642h-1zM611,641h1V642h-1zM612,641h1V642h-1zM613,641h1V642h-1zM614,641h1V642h-1zM615,641h1V642h-1zM616,641h1V642h-1zM617,641h1V642h-1zM618,641h1V642h-1zM619,641h1V642h-1zM620,641h1V642h-1zM621,641h1V642h-1zM622,641h1V642h-1zM623,641h1V642h-1zM624,641h1V642h-1zM625,641h1V642h-1zM626,641h1V642h-1zM627,641h1V642h-1zM628,641h1V642h-1zM629,641h1V642h-1zM630,641h1V642h-1zM631,641h1V642h-1zM632,641h1V642h-1zM633,641h1V642h-1zM634,641h1V642h-1zM635,641h1V642h-1zM636,641h1V642h-1zM637,641h1V642h-1zM638,641h1V642h-1zM639,641h1V642h-1zM640,641h1V642h-1zM641,641h1V642h-1zM642,641h1V642h-1zM643,641h1V642h-1zM644,641h1V642h-1zM645,641h1V642h-1zM646,641h1V642h-1zM647,641h1V642h-1zM648,641h1V642h-1zM649,641h1V642h-1zM650,641h1V642h-1zM651,641h1V642h-1zM652,641h1V642h-1zM653,641h1V642h-1zM654,641h1V642h-1zM655,641h1V642h-1zM656,641h1V642h-1zM657,641h1V642h-1zM658,641h1V642h-1zM659,641h1V642h-1zM660,641h1V642h-1zM661,641h1V642h-1zM662,641h1V642h-1zM663,641h1V642h-1zM664,641h1V642h-1zM665,641h1V642h-1zM666,641h1V642h-1zM667,641h1V642h-1zM668,641h1V642h-1zM669,641h1V642h-1zM670,641h1V642h-1zM671,641h1V642h-1zM672,641h1V642h-1zM673,641h1V642h-1zM674,641h1V642h-1zM675,641h1V642h-1zM676,641h1V642h-1zM677,641h1V642h-1zM678,641h1V642h-1zM679,641h1V642h-1zM680,641h1V642h-1zM681,641h1V642h-1zM682,641h1V642h-1zM683,641h1V642h-1zM684,641h1V642h-1zM685,641h1V642h-1zM686,641h1V642h-1zM687,641h1V642h-1zM688,641h1V642h-1zM689,641h1V642h-1zM690,641h1V642h-1zM691,641h1V642h-1zM692,641h1V642h-1zM693,641h1V642h-1zM694,641h1V642h-1zM695,641h1V642h-1zM696,641h1V642h-1zM697,641h1V642h-1zM698,641h1V642h-1zM699,641h1V642h-1zM700,641h1V642h-1zM701,641h1V642h-1zM702,641h1V642h-1zM703,641h1V642h-1zM704,641h1V642h-1zM705,641h1V642h-1zM706,641h1V642h-1zM707,641h1V642h-1zM708,641h1V642h-1zM709,641h1V642h-1zM710,641h1V642h-1zM711,641h1V642h-1zM712,641h1V642h-1zM713,641h1V642h-1zM714,641h1V642h-1zM715,641h1V642h-1zM716,641h1V642h-1zM717,641h1V642h-1zM718,641h1V642h-1zM719,641h1V642h-1zM720,641h1V642h-1zM721,641h1V642h-1zM722,641h1V642h-1zM723,641h1V642h-1zM724,641h1V642h-1zM725,641h1V642h-1zM726,641h1V642h-1zM727,641h1V642h-1zM728,641h1V642h-1zM729,641h1V642h-1zM730,641h1V642h-1zM731,641h1V642h-1zM732,641h1V642h-1zM733,641h1V642h-1zM734,641h1V642h-1zM735,641h1V642h-1zM736,641h1V642h-1zM737,641h1V642h-1zM738,641h1V642h-1zM739,641h1V642h-1zM740,641h1V642h-1zM741,641h1V642h-1zM742,641h1V642h-1zM743,641h1V642h-1zM744,641h1V642h-1zM745,641h1V642h-1zM746,641h1V642h-1zM747,641h1V642h-1zM748,641h1V642h-1zM749,641h1V642h-1zM750,641h1V642h-1zM751,641h1V642h-1zM752,641h1V642h-1zM753,641h1V642h-1zM754,641h1V642h-1zM755,641h1V642h-1zM756,641h1V642h-1zM757,641h1V642h-1zM758,641h1V642h-1zM759,641h1V642h-1zM760,641h1V642h-1zM761,641h1V642h-1zM762,641h1V642h-1zM763,641h1V642h-1zM764,641h1V642h-1zM765,641h1V642h-1zM766,641h1V642h-1zM767,641h1V642h-1zM768,641h1V642h-1zM769,641h1V642h-1zM770,641h1V642h-1zM771,641h1V642h-1zM772,641h1V642h-1zM773,641h1V642h-1zM774,641h1V642h-1zM775,641h1V642h-1zM776,641h1V642h-1zM777,641h1V642h-1zM778,641h1V642h-1zM779,641h1V642h-1zM780,641h1V642h-1zM781,641h1V642h-1zM782,641h1V642h-1zM783,641h1V642h-1zM784,641h1V642h-1zM785,641h1V642h-1zM786,641h1V642h-1zM787,641h1V642h-1zM788,641h1V642h-1zM789,641h1V642h-1zM790,641h1V642h-1zM791,641h1V642h-1zM792,641h1V642h-1zM793,641h1V642h-1zM794,641h1V642h-1zM795,641h1V642h-1zM796,641h1V642h-1zM797,641h1V642h-1zM798,641h1V642h-1zM799,641h1V642h-1zM800,641h1V642h-1zM801,641h1V642h-1zM802,641h1V642h-1zM803,641h1V642h-1zM804,641h1V642h-1zM805,641h1V642h-1zM806,641h1V642h-1zM807,641h1V642h-1zM808,641h1V642h-1zM809,641h1V642h-1zM810,641h1V642h-1zM811,641h1V642h-1zM812,641h1V642h-1zM813,641h1V642h-1zM814,641h1V642h-1zM815,641h1V642h-1zM816,641h1V642h-1zM817,641h1V642h-1zM818,641h1V642h-1zM819,641h1V642h-1zM820,641h1V642h-1zM821,641h1V642h-1zM822,641h1V642h-1zM823,641h1V642h-1zM824,641h1V642h-1zM825,641h1V642h-1zM826,641h1V642h-1zM827,641h1V642h-1zM828,641h1V642h-1zM829,641h1V642h-1zM830,641h1V642h-1zM831,641h1V642h-1zM832,641h1V642h-1zM833,641h1V642h-1zM834,641h1V642h-1zM835,641h1V642h-1zM836,641h1V642h-1zM837,641h1V642h-1zM838,641h1V642h-1zM839,641h1V642h-1zM840,641h1V642h-1zM841,641h1V642h-1zM842,641h1V642h-1zM843,641h1V642h-1zM844,641h1V642h-1zM845,641h1V642h-1zM846,641h1V642h-1zM847,641h1V642h-1zM848,641h1V642h-1zM849,641h1V642h-1zM850,641h1V642h-1zM851,641h1V642h-1zM852,641h1V642h-1zM853,641h1V642h-1zM854,641h1V642h-1zM855,641h1V642h-1zM856,641h1V642h-1zM857,641h1V642h-1zM858,641h1V642h-1zM859,641h1V642h-1zM860,641h1V642h-1zM861,641h1V642h-1zM862,641h1V642h-1zM863,641h1V642h-1zM864,641h1V642h-1zM865,641h1V642h-1zM866,641h1V642h-1zM867,641h1V642h-1zM868,641h1V642h-1zM869,641h1V642h-1zM870,641h1V642h-1zM871,641h1V642h-1zM872,641h1V642h-1zM873,641h1V642h-1zM874,641h1V642h-1zM875,641h1V642h-1zM876,641h1V642h-1zM877,641h1V642h-1zM878,641h1V642h-1zM879,641h1V642h-1zM880,641h1V642h-1zM881,641h1V642h-1zM882,641h1V642h-1zM883,641h1V642h-1zM884,641h1V642h-1zM885,641h1V642h-1zM886,641h1V642h-1zM887,641h1V642h-1zM888,641h1V642h-1zM889,641h1V642h-1zM890,641h1V642h-1zM891,641h1V642h-1zM892,641h1V642h-1zM893,641h1V642h-1zM894,641h1V642h-1zM895,641h1V642h-1zM896,641h1V642h-1zM897,641h1V642h-1zM898,641h1V642h-1zM899,641h1V642h-1zM900,641h1V642h-1zM901,641h1V642h-1zM902,641h1V642h-1zM903,641h1V642h-1zM904,641h1V642h-1zM905,641h1V642h-1zM906,641h1V642h-1zM907,641h1V642h-1zM908,641h1V642h-1zM909,641h1V642h-1zM910,641h1V642h-1zM911,641h1V642h-1zM912,641h1V642h-1zM913,641h1V642h-1zM914,641h1V642h-1zM915,641h1V642h-1zM916,641h1V642h-1zM917,641h1V642h-1zM918,641h1V642h-1zM919,641h1V642h-1zM920,641h1V642h-1zM921,641h1V642h-1zM922,641h1V642h-1zM923,641h1V642h-1zM924,641h1V642h-1zM925,641h1V642h-1zM926,641h1V642h-1zM927,641h1V642h-1zM928,641h1V642h-1zM929,641h1V642h-1zM930,641h1V642h-1zM931,641h1V642h-1zM932,641h1V642h-1zM933,641h1V642h-1zM934,641h1V642h-1zM935,641h1V642h-1zM936,641h1V642h-1zM937,641h1V642h-1zM938,641h1V642h-1zM939,641h1V642h-1zM940,641h1V642h-1zM941,641h1V642h-1zM942,641h1V642h-1zM943,641h1V642h-1zM944,641h1V642h-1zM945,641h1V642h-1zM946,641h1V642h-1zM947,641h1V642h-1zM948,641h1V642h-1zM949,641h1V642h-1zM950,641h1V642h-1zM951,641h1V642h-1zM952,641h1V642h-1zM953,641h1V642h-1zM954,641h1V642h-1zM955,641h1V642h-1zM956,641h1V642h-1zM957,641h1V642h-1zM958,641h1V642h-1zM959,641h1V642h-1zM960,641h1V642h-1zM961,641h1V642h-1zM962,641h1V642h-1zM963,641h1V642h-1zM964,641h1V642h-1zM965,641h1V642h-1zM966,641h1V642h-1zM967,641h1V642h-1zM968,641h1V642h-1zM969,641h1V642h-1zM970,641h1V642h-1zM971,641h1V642h-1zM972,641h1V642h-1zM973,641h1V642h-1zM974,641h1V642h-1zM975,641h1V642h-1zM976,641h1V642h-1zM977,641h1V642h-1zM978,641h1V642h-1zM979,641h1V642h-1zM980,641h1V642h-1zM981,641h1V642h-1zM982,641h1V642h-1zM983,641h1V642h-1zM984,641h1V642h-1zM985,641h1V642h-1zM986,641h1V642h-1zM987,641h1V642h-1zM988,641h1V642h-1zM989,641h1V642h-1zM990,641h1V642h-1zM991,641h1V642h-1zM992,641h1V642h-1zM993,641h1V642h-1zM994,641h1V642h-1zM995,641h1V642h-1zM996,641h1V642h-1zM997,641h1V642h-1zM998,641h1V642h-1zM999,641h1V642h-1zM1000,641h1V642h-1zM1001,641h1V642h-1zM1002,641h1V642h-1zM1003,641h1V642h-1zM1004,641h1V642h-1zM1005,641h1V642h-1zM1006,641h1V642h-1zM1007,641h1V642h-1zM1008,641h1V642h-1zM1009,641h1V642h-1zM1010,641h1V642h-1zM1011,641h1V642h-1zM1012,641h1V642h-1zM1013,641h1V642h-1zM1014,641h1V642h-1zM1015,641h1V642h-1zM1016,641h1V642h-1zM1017,641h1V642h-1zM1018,641h1V642h-1zM1019,641h1V642h-1zM1020,641h1V642h-1zM1021,641h1V642h-1zM1022,641h1V642h-1zM1023,641h1V642h-1zM1024,641h1V642h-1zM1025,641h1V642h-1zM1026,641h1V642h-1zM1027,641h1V642h-1zM1028,641h1V642h-1zM1029,641h1V642h-1zM1030,641h1V642h-1zM1031,641h1V642h-1zM1032,641h1V642h-1zM1033,641h1V642h-1zM1034,641h1V642h-1zM1035,641h1V642h-1zM1036,641h1V642h-1zM1037,641h1V642h-1zM1038,641h1V642h-1zM1039,641h1V642h-1zM1040,641h1V642h-1zM1041,641h1V642h-1zM1042,641h1V642h-1zM1043,641h1V642h-1zM1044,641h1V642h-1zM1045,641h1V642h-1zM1046,641h1V642h-1zM1047,641h1V642h-1zM1048,641h1V642h-1zM1049,641h1V642h-1zM1050,641h1V642h-1zM1051,641h1V642h-1zM1052,641h1V642h-1zM1053,641h1V642h-1zM1054,641h1V642h-1zM1055,641h1V642h-1zM1056,641h1V642h-1zM1057,641h1V642h-1zM1058,641h1V642h-1zM1059,641h1V642h-1zM1060,641h1V642h-1zM1061,641h1V642h-1zM1062,641h1V642h-1zM1063,641h1V642h-1zM1064,641h1V642h-1zM1065,641h1V642h-1zM1066,641h1V642h-1zM1067,641h1V642h-1zM1068,641h1V642h-1zM1069,641h1V642h-1zM1070,641h1V642h-1zM1071,641h1V642h-1zM1072,641h1V642h-1zM1073,641h1V642h-1zM1074,641h1V642h-1zM1075,641h1V642h-1zM1076,641h1V642h-1zM1077,641h1V642h-1zM1078,641h1V642h-1zM1079,641h1V642h-1zM1080,641h1V642h-1zM1081,641h1V642h-1zM1082,641h1V642h-1zM1083,641h1V642h-1zM1084,641h1V642h-1zM1085,641h1V642h-1zM1086,641h1V642h-1zM1087,641h1V642h-1zM1088,641h1V642h-1zM1089,641h1V642h-1zM1090,641h1V642h-1zM1091,641h1V642h-1zM1092,641h1V642h-1zM1093,641h1V642h-1zM1094,641h1V642h-1zM1095,641h1V642h-1zM1096,641h1V642h-1zM1097,641h1V642h-1zM1098,641h1V642h-1zM1099,641h1V642h-1zM1100,641h1V642h-1zM1101,641h1V642h-1zM1102,641h1V642h-1zM1103,641h1V642h-1zM1104,641h1V642h-1zM1105,641h1V642h-1zM1106,641h1V642h-1zM1107,641h1V642h-1zM1108,641h1V642h-1zM1109,641h1V642h-1zM1110,641h1V642h-1zM1111,641h1V642h-1zM1112,641h1V642h-1zM1113,641h1V642h-1zM1114,641h1V642h-1zM1115,641h1V642h-1zM1116,641h1V642h-1zM1117,641h1V642h-1zM1118,641h1V642h-1zM1119,641h1V642h-1zM1120,641h1V642h-1zM1121,641h1V642h-1zM1122,641h1V642h-1zM1123,641h1V642h-1zM1124,641h1V642h-1zM1125,641h1V642h-1zM1126,641h1V642h-1zM1127,641h1V642h-1zM1128,641h1V642h-1zM1129,641h1V642h-1zM1130,641h1V642h-1zM1131,641h1V642h-1zM1132,641h1V642h-1zM1133,641h1V642h-1zM1134,641h1V642h-1zM1135,641h1V642h-1zM1136,641h1V642h-1zM1137,641h1V642h-1zM1138,641h1V642h-1zM1139,641h1V642h-1zM1140,641h1V642h-1zM1141,641h1V642h-1zM1142,641h1V642h-1zM1143,641h1V642h-1zM1144,641h1V642h-1zM1145,641h1V642h-1zM1146,641h1V642h-1zM1147,641h1V642h-1zM1148,641h1V642h-1zM1149,641h1V642h-1zM1150,641h1V642h-1zM1151,641h1V642h-1zM1152,641h1V642h-1zM1153,641h1V642h-1zM1154,641h1V642h-1zM1155,641h1V642h-1zM1156,641h1V642h-1zM1157,641h1V642h-1zM1158,641h1V642h-1zM1159,641h1V642h-1zM1160,641h1V642h-1zM1161,641h1V642h-1zM1162,641h1V642h-1zM1163,641h1V642h-1zM1164,641h1V642h-1zM1165,641h1V642h-1zM1166,641h1V642h-1zM1167,641h1V642h-1zM1168,641h1V642h-1zM1169,641h1V642h-1zM1170,641h1V642h-1zM1171,641h1V642h-1zM1172,641h1V642h-1zM1173,641h1V642h-1zM1174,641h1V642h-1zM1175,641h1V642h-1zM1176,641h1V642h-1zM1177,641h1V642h-1zM1178,641h1V642h-1zM1179,641h1V642h-1zM1180,641h1V642h-1zM1181,641h1V642h-1zM1182,641h1V642h-1zM1183,641h1V642h-1zM1184,641h1V642h-1zM1185,641h1V642h-1zM1186,641h1V642h-1zM1187,641h1V642h-1zM1188,641h1V642h-1zM1189,641h1V642h-1zM1190,641h1V642h-1zM1191,641h1V642h-1zM1192,641h1V642h-1zM1193,641h1V642h-1zM1194,641h1V642h-1zM1195,641h1V642h-1zM1196,641h1V642h-1zM1197,641h1V642h-1zM1198,641h1V642h-1zM1199,641h1V642h-1zM1200,641h1V642h-1zM1201,641h1V642h-1zM1202,641h1V642h-1zM1203,641h1V642h-1zM1204,641h1V642h-1zM1205,641h1V642h-1zM1206,641h1V642h-1zM1207,641h1V642h-1zM1208,641h1V642h-1zM1209,641h1V642h-1zM1210,641h1V642h-1zM1211,641h1V642h-1zM1212,641h1V642h-1zM1213,641h1V642h-1zM1214,641h1V642h-1zM1215,641h1V642h-1zM1216,641h1V642h-1zM1217,641h1V642h-1zM1218,641h1V642h-1zM1219,641h1V642h-1zM1220,641h1V642h-1zM1221,641h1V642h-1zM1222,641h1V642h-1zM1223,641h1V642h-1zM1224,641h1V642h-1zM1225,641h1V642h-1zM1226,641h1V642h-1zM1227,641h1V642h-1zM1228,641h1V642h-1zM1229,641h1V642h-1zM1230,641h1V642h-1zM1231,641h1V642h-1zM1232,641h1V642h-1zM1233,641h1V642h-1zM1234,641h1V642h-1zM1235,641h1V642h-1zM1236,641h1V642h-1zM1237,641h1V642h-1zM1238,641h1V642h-1zM1239,641h1V642h-1zM1240,641h1V642h-1zM1241,641h1V642h-1zM1242,641h1V642h-1zM1243,641h1V642h-1zM1244,641h1V642h-1zM1245,641h1V642h-1zM1246,641h1V642h-1zM1247,641h1V642h-1zM1248,641h1V642h-1zM1249,641h1V642h-1zM1250,641h1V642h-1zM1251,641h1V642h-1zM1252,641h1V642h-1zM1253,641h1V642h-1zM1254,641h1V642h-1zM1255,641h1V642h-1zM1256,641h1V642h-1zM1257,641h1V642h-1zM1258,641h1V642h-1zM1259,641h1V642h-1zM1260,641h1V642h-1zM1261,641h1V642h-1zM1262,641h1V642h-1zM1263,641h1V642h-1zM1264,641h1V642h-1zM1265,641h1V642h-1zM1266,641h1V642h-1zM1267,641h1V642h-1zM1268,641h1V642h-1zM1269,641h1V642h-1zM1270,641h1V642h-1zM1271,641h1V642h-1zM1272,641h1V642h-1zM1273,641h1V642h-1zM1274,641h1V642h-1zM1275,641h1V642h-1zM1276,641h1V642h-1zM1277,641h1V642h-1zM1278,641h1V642h-1zM1279,641h1V642h-1zM1280,641h1V642h-1zM1281,641h1V642h-1zM1282,641h1V642h-1zM1283,641h1V642h-1zM1284,641h1V642h-1zM1285,641h1V642h-1zM1286,641h1V642h-1zM1287,641h1V642h-1zM1288,641h1V642h-1zM1289,641h1V642h-1zM1290,641h1V642h-1zM1291,641h1V642h-1zM1292,641h1V642h-1zM1293,641h1V642h-1zM1294,641h1V642h-1zM1295,641h1V642h-1zM1296,641h1V642h-1zM1297,641h1V642h-1zM1298,641h1V642h-1zM1299,641h1V642h-1zM1300,641h1V642h-1zM1301,641h1V642h-1zM1302,641h1V642h-1zM1303,641h1V642h-1zM1304,641h1V642h-1zM1305,641h1V642h-1zM1306,641h1V642h-1zM1307,641h1V642h-1zM1308,641h1V642h-1zM1309,641h1V642h-1zM1310,641h1V642h-1zM1311,641h1V642h-1zM1312,641h1V642h-1zM1313,641h1V642h-1zM1314,641h1V642h-1zM1315,641h1V642h-1zM1316,641h1V642h-1zM1317,641h1V642h-1zM1318,641h1V642h-1zM1319,641h1V642h-1zM1320,641h1V642h-1zM1321,641h1V642h-1zM1322,641h1V642h-1zM1323,641h1V642h-1zM1324,641h1V642h-1zM1325,641h1V642h-1zM1326,641h1V642h-1zM1327,641h1V642h-1zM1328,641h1V642h-1zM1329,641h1V642h-1zM1330,641h1V642h-1zM1331,641h1V642h-1zM1332,641h1V642h-1zM1333,641h1V642h-1zM1334,641h1V642h-1zM1335,641h1V642h-1zM1336,641h1V642h-1zM1337,641h1V642h-1zM1338,641h1V642h-1zM1339,641h1V642h-1zM1340,641h1V642h-1zM1341,641h1V642h-1zM1342,641h1V642h-1zM1343,641h1V642h-1zM1344,641h1V642h-1zM1345,641h1V642h-1zM1346,641h1V642h-1zM1347,641h1V642h-1zM1348,641h1V642h-1zM1349,641h1V642h-1zM1350,641h1V642h-1zM1351,641h1V642h-1zM1352,641h1V642h-1zM1353,641h1V642h-1zM1354,641h1V642h-1zM1355,641h1V642h-1zM1356,641h1V642h-1zM1357,641h1V642h-1zM1358,641h1V642h-1zM1359,641h1V642h-1zM1360,641h1V642h-1zM1361,641h1V642h-1zM1362,641h1V642h-1zM1363,641h1V642h-1zM1364,641h1V642h-1zM1365,641h1V642h-1zM1366,641h1V642h-1zM1367,641h1V642h-1zM1368,641h1V642h-1zM1369,641h1V642h-1zM1370,641h1V642h-1zM1371,641h1V642h-1zM1372,641h1V642h-1zM1373,641h1V642h-1zM1374,641h1V642h-1zM1375,641h1V642h-1zM1376,641h1V642h-1zM1377,641h1V642h-1zM1378,641h1V642h-1zM1379,641h1V642h-1zM1380,641h1V642h-1zM1381,641h1V642h-1zM1382,641h1V642h-1zM1383,641h1V642h-1zM1384,641h1V642h-1zM1385,641h1V642h-1zM1386,641h1V642h-1zM1387,641h1V642h-1zM1388,641h1V642h-1zM1389,641h1V642h-1zM1390,641h1V642h-1zM1391,641h1V642h-1zM1392,641h1V642h-1zM1393,641h1V642h-1zM1394,641h1V642h-1zM1395,641h1V642h-1zM1396,641h1V642h-1zM1397,641h1V642h-1zM1398,641h1V642h-1zM1399,641h1V642h-1zM1400,641h1V642h-1zM1401,641h1V642h-1zM1402,641h1V642h-1zM1403,641h1V642h-1zM1404,641h1V642h-1zM1405,641h1V642h-1zM1406,641h1V642h-1zM1407,641h1V642h-1zM1408,641h1V642h-1zM1409,641h1V642h-1zM1410,641h1V642h-1zM1411,641h1V642h-1zM1412,641h1V642h-1zM1413,641h1V642h-1zM1414,641h1V642h-1zM1415,641h1V642h-1zM1416,641h1V642h-1zM1417,641h1V642h-1zM1418,641h1V642h-1zM1419,641h1V642h-1zM1420,641h1V642h-1zM1421,641h1V642h-1zM1422,641h1V642h-1zM1423,641h1V642h-1zM1424,641h1V642h-1zM1425,641h1V642h-1zM1426,641h1V642h-1zM1427,641h1V642h-1zM1428,641h1V642h-1zM1429,641h1V642h-1zM1430,641h1V642h-1zM1431,641h1V642h-1zM1432,641h1V642h-1zM1433,641h1V642h-1zM1434,641h1V642h-1zM1435,641h1V642h-1zM1436,641h1V642h-1zM1437,641h1V642h-1zM1438,641h1V642h-1zM1439,641h1V642h-1zM1440,641h1V642h-1zM1441,641h1V642h-1zM1442,641h1V642h-1zM1443,641h1V642h-1zM1444,641h1V642h-1zM1445,641h1V642h-1zM1446,641h1V642h-1zM1447,641h1V642h-1zM1448,641h1V642h-1zM1449,641h1V642h-1zM1450,641h1V642h-1zM1451,641h1V642h-1zM1452,641h1V642h-1zM1453,641h1V642h-1zM1454,641h1V642h-1zM1455,641h1V642h-1zM1456,641h1V642h-1zM1457,641h1V642h-1zM1458,641h1V642h-1zM1459,641h1V642h-1zM1460,641h1V642h-1zM1461,641h1V642h-1zM1462,641h1V642h-1zM1463,641h1V642h-1zM1464,641h1V642h-1zM1465,641h1V642h-1zM1466,641h1V642h-1zM1467,641h1V642h-1zM1468,641h1V642h-1zM1469,641h1V642h-1zM1470,641h1V642h-1zM1471,641h1V642h-1zM1472,641h1V642h-1zM1473,641h1V642h-1zM1474,641h1V642h-1zM1475,641h1V642h-1zM1476,641h1V642h-1zM1477,641h1V642h-1zM1478,641h1V642h-1zM1479,641h1V642h-1zM1480,641h1V642h-1zM1481,641h1V642h-1zM1482,641h1V642h-1zM1483,641h1V642h-1zM1484,641h1V642h-1zM1485,641h1V642h-1zM1486,641h1V642h-1zM1487,641h1V642h-1zM1488,641h1V642h-1zM1489,641h1V642h-1zM1490,641h1V642h-1zM1491,641h1V642h-1zM1492,641h1V642h-1zM1493,641h1V642h-1zM1494,641h1V642h-1zM1495,641h1V642h-1zM1496,641h1V642h-1zM1497,641h1V642h-1zM1498,641h1V642h-1zM1499,641h1V642h-1zM1500,641h1V642h-1zM1501,641h1V642h-1zM1502,641h1V642h-1zM1503,641h1V642h-1zM1504,641h1V642h-1zM1505,641h1V642h-1zM1506,641h1V642h-1zM1507,641h1V642h-1zM1508,641h1V642h-1zM1509,641h1V642h-1zM1510,641h1V642h-1zM1511,641h1V642h-1zM1512,641h1V642h-1zM1513,641h1V642h-1zM1514,641h1V642h-1zM1515,641h1V642h-1zM1516,641h1V642h-1zM1517,641h1V642h-1zM1518,641h1V642h-1zM1519,641h1V642h-1zM1520,641h1V642h-1zM1521,641h1V642h-1zM1522,641h1V642h-1zM1523,641h1V642h-1zM1524,641h1V642h-1zM1525,641h1V642h-1zM1526,641h1V642h-1zM1527,641h1V642h-1zM1528,641h1V642h-1zM1529,641h1V642h-1zM1530,641h1V642h-1zM1531,641h1V642h-1zM1532,641h1V642h-1zM1533,641h1V642h-1zM1534,641h1V642h-1zM1535,641h1V642h-1zM1536,641h1V642h-1zM1537,641h1V642h-1zM1538,641h1V642h-1zM1539,641h1V642h-1zM1540,641h1V642h-1zM1541,641h1V642h-1zM1542,641h1V642h-1zM1543,641h1V642h-1zM1544,641h1V642h-1zM1545,641h1V642h-1zM1546,641h1V642h-1zM1547,641h1V642h-1zM1548,641h1V642h-1zM1549,641h1V642h-1zM1550,641h1V642h-1zM1551,641h1V642h-1zM1552,641h1V642h-1zM1553,641h1V642h-1zM1554,641h1V642h-1zM1555,641h1V642h-1zM1556,641h1V642h-1zM1557,641h1V642h-1zM1558,641h1V642h-1zM1559,641h1V642h-1zM1560,641h1V642h-1zM1561,641h1V642h-1zM1562,641h1V642h-1zM1563,641h1V642h-1zM1564,641h1V642h-1zM1565,641h1V642h-1zM1566,641h1V642h-1zM1567,641h1V642h-1zM1568,641h1V642h-1zM1569,641h1V642h-1zM1570,641h1V642h-1zM1571,641h1V642h-1zM1572,641h1V642h-1zM1573,641h1V642h-1zM1574,641h1V642h-1zM1575,641h1V642h-1zM1576,641h1V642h-1zM1577,641h1V642h-1zM1578,641h1V642h-1zM1579,641h1V642h-1zM1580,641h1V642h-1zM1581,641h1V642h-1zM1582,641h1V642h-1zM1583,641h1V642h-1zM1584,641h1V642h-1zM1585,641h1V642h-1zM1586,641h1V642h-1zM1587,641h1V642h-1zM1588,641h1V642h-1zM1589,641h1V642h-1zM1590,641h1V642h-1zM1591,641h1V642h-1zM1592,641h1V642h-1zM1593,641h1V642h-1zM1594,641h1V642h-1zM1595,641h1V642h-1zM1596,641h1V642h-1zM1597,641h1V642h-1zM1598,641h1V642h-1zM1599,641h1V642h-1zM1600,641h1V642h-1zM1601,641h1V642h-1zM1602,641h1V642h-1zM1603,641h1V642h-1zM1604,641h1V642h-1zM1605,641h1V642h-1zM1606,641h1V642h-1zM1607,641h1V642h-1zM1608,641h1V642h-1zM1609,641h1V642h-1zM1610,641h1V642h-1zM1611,641h1V642h-1zM1612,641h1V642h-1zM1613,641h1V642h-1zM1614,641h1V642h-1zM1615,641h1V642h-1zM1616,641h1V642h-1zM1617,641h1V642h-1zM1618,641h1V642h-1zM1619,641h1V642h-1zM1620,641h1V642h-1zM1621,641h1V642h-1zM1622,641h1V642h-1zM1623,641h1V642h-1zM1624,641h1V642h-1zM1625,641h1V642h-1zM1626,641h1V642h-1zM1627,641h1V642h-1zM1628,641h1V642h-1zM1629,641h1V642h-1zM1630,641h1V642h-1zM1631,641h1V642h-1zM1632,641h1V642h-1zM1633,641h1V642h-1zM1634,641h1V642h-1zM1635,641h1V642h-1zM1636,641h1V642h-1zM1637,641h1V642h-1zM1638,641h1V642h-1zM1639,641h1V642h-1zM1640,641h1V642h-1zM1641,641h1V642h-1zM1642,641h1V642h-1zM1643,641h1V642h-1zM1644,641h1V642h-1zM1645,641h1V642h-1zM1646,641h1V642h-1zM1647,641h1V642h-1zM1648,641h1V642h-1zM1649,641h1V642h-1zM1650,641h1V642h-1zM1651,641h1V642h-1zM1652,641h1V642h-1zM1653,641h1V642h-1zM1654,641h1V642h-1zM1655,641h1V642h-1zM1656,641h1V642h-1zM1657,641h1V642h-1zM1658,641h1V642h-1zM1659,641h1V642h-1zM1660,641h1V642h-1zM1661,641h1V642h-1zM1662,641h1V642h-1zM1663,641h1V642h-1zM1664,641h1V642h-1zM1665,641h1V642h-1zM1666,641h1V642h-1zM1667,641h1V642h-1zM1668,641h1V642h-1zM1669,641h1V642h-1zM1670,641h1V642h-1zM1671,641h1V642h-1zM1672,641h1V642h-1zM1673,641h1V642h-1zM1674,641h1V642h-1zM1675,641h1V642h-1zM1676,641h1V642h-1zM1677,641h1V642h-1zM1678,641h1V642h-1zM1679,641h1V642h-1zM1680,641h1V642h-1zM1681,641h1V642h-1zM1682,641h1V642h-1zM1683,641h1V642h-1zM1684,641h1V642h-1zM1685,641h1V642h-1zM1686,641h1V642h-1zM1687,641h1V642h-1zM1688,641h1V642h-1zM1689,641h1V642h-1zM1690,641h1V642h-1zM1691,641h1V642h-1zM1692,641h1V642h-1zM1693,641h1V642h-1zM1694,641h1V642h-1zM1695,641h1V642h-1zM1696,641h1V642h-1zM1697,641h1V642h-1zM1698,641h1V642h-1zM1699,641h1V642h-1zM1700,641h1V642h-1zM1701,641h1V642h-1zM1702,641h1V642h-1zM1703,641h1V642h-1zM1704,641h1V642h-1zM1705,641h1V642h-1zM1706,641h1V642h-1zM1707,641h1V642h-1zM1708,641h1V642h-1zM1709,641h1V642h-1zM1710,641h1V642h-1zM1711,641h1V642h-1zM1712,641h1V642h-1zM1713,641h1V642h-1zM1714,641h1V642h-1zM1715,641h1V642h-1zM1716,641h1V642h-1zM1717,641h1V642h-1zM1718,641h1V642h-1zM1719,641h1V642h-1zM1720,641h1V642h-1zM1721,641h1V642h-1zM1722,641h1V642h-1zM1723,641h1V642h-1zM1724,641h1V642h-1zM1725,641h1V642h-1zM1726,641h1V642h-1zM1727,641h1V642h-1zM1728,641h1V642h-1zM1729,641h1V642h-1zM1730,641h1V642h-1zM1731,641h1V642h-1zM1732,641h1V642h-1zM1733,641h1V642h-1zM1734,641h1V642h-1zM1735,641h1V642h-1zM1736,641h1V642h-1zM1737,641h1V642h-1zM1738,641h1V642h-1zM1739,641h1V642h-1zM1740,641h1V642h-1zM1741,641h1V642h-1zM1742,641h1V642h-1zM1743,641h1V642h-1zM1744,641h1V642h-1zM1745,641h1V642h-1zM1746,641h1V642h-1zM1747,641h1V642h-1zM1748,641h1V642h-1zM1749,641h1V642h-1zM1750,641h1V642h-1z" fill="#e8284e" shape-rendering="crispEdges"/>
<path d="M3,876h1V877h-1zM4,876h1V877h-1zM5,876h1V877h-1zM6,876h1V877h-1zM7,876h1V877h-1zM8,876h1V877h-1zM9,876h1V877h-1zM10,876h1V877h-1zM11,876h1V877h-1zM12,876h1V877h-1zM13,876h1V877h-1zM14,876h1V877h-1zM15,876h1V877h-1zM16,876h1V877h-1zM17,876h1V877h-1zM18,876h1V877h-1zM19,876h1V877h-1zM20,876h1V877h-1zM21,876h1V877h-1zM22,876h1V877h-1zM23,876h1V877h-1zM24,876h1V877h-1zM25,876h1V877h-1zM26,876h1V877h-1zM27,876h1V877h-1zM28,876h1V877h-1zM29,876h1V877h-1zM30,876h1V877h-1zM31,876h1V877h-1zM32,876h1V877h-1zM33,876h1V877h-1zM34,876h1V877h-1zM35,876h1V877h-1zM36,876h1V877h-1zM37,876h1V877h-1zM38,876h1V877h-1zM39,876h1V877h-1zM40,876h1V877h-1zM41,876h1V877h-1zM42,876h1V877h-1zM43,876h1V877h-1zM44,876h1V877h-1zM45,876h1V877h-1zM46,876h1V877h-1zM47,876h1V877h-1zM48,876h1V877h-1zM49,876h1V877h-1zM50,876h1V877h-1zM51,876h1V877h-1zM52,876h1V877h-1zM53,876h1V877h-1zM54,876h1V877h-1zM55,876h1V881h-1zM56,880h1V889h-1zM57,881h1V889h-1zM58,882h1V885h-1zM59,881h1V885h-1zM60,878h1V882h-1zM61,878h1V881h-1zM62,880h1V883h-1zM63,880h1V883h-1zM64,877h1V880h-1zM65,877h1V880h-1zM66,879h1V882h-1zM67,879h1V882h-1zM68,877h1V880h-1zM69,877h1V879h-1zM70,878h1V881h-1zM71,878h1V881h-1zM72,876h1V879h-1zM73,876h1V878h-1zM74,878h1V880h-1zM75,878h1V880h-1zM76,877h1V879h-1zM77,876h1V878h-1zM78,876h1V877h-1zM79,876h1V877h-1zM80,876h1V877h-1zM81,876h1V877h-1zM82,876h1V877h-1zM83,876h1V877h-1zM84,876h1V877h-1zM85,876h1V877h-1zM86,876h1V877h-1zM87,876h1V877h-1zM88,876h1V877h-1zM89,876h1V877h-1zM90,876h1V877h-1zM91,876h1V877h-1zM92,876h1V877h-1zM93,876h1V877h-1zM94,876h1V877h-1zM95,876h1V877h-1zM96,876h1V877h-1zM97,876h1V877h-1zM98,876h1V877h-1zM99,876h1V877h-1zM100,876h1V877h-1zM101,876h1V877h-1zM102,876h1V877h-1zM103,876h1V877h-1zM104,876h1V877h-1zM105,876h1V877h-1zM106,876h1V877h-1zM107,876h1V877h-1zM108,876h1V877h-1zM109,876h1V877h-1zM110,876h1V877h-1zM111,876h1V877h-1zM112,876h1V877h-1zM113,876h1V877h-1zM114,876h1V877h-1zM115,876h1V877h-1zM116,876h1V877h-1zM117,876h1V877h-1zM118,876h1V877h-1zM119,876h1V877h-1zM120,876h1V877h-1zM121,876h1V877h-1zM122,876h1V877h-1zM123,876h1V877h-1zM124,876h1V877h-1zM125,876h1V877h-1zM126,876h1V877h-1zM127,876h1V877h-1zM128,876h1V877h-1zM129,876h1V877h-1zM130,876h1V877h-1zM131,876h1V877h-1zM132,876h1V877h-1zM133,876h1V877h-1zM134,876h1V877h-1zM135,876h1V877h-1zM136,876h1V877h-1zM137,876h1V877h-1zM138,876h1V877h-1zM139,876h1V877h-1zM140,876h1V877h-1zM141,876h1V877h-1zM142,876h1V877h-1zM143,876h1V877h-1zM144,876h1V877h-1zM145,876h1V877h-1zM146,876h1V877h-1zM147,876h1V877h-1zM148,876h1V877h-1zM149,876h1V877h-1zM150,876h1V877h-1zM151,876h1V877h-1zM152,876h1V877h-1zM153,876h1V877h-1zM154,876h1V877h-1zM155,876h1V877h-1zM156,876h1V877h-1zM157,876h1V877h-1zM158,876h1V877h-1zM159,876h1V877h-1zM160,876h1V877h-1zM161,876h1V877h-1zM162,876h1V877h-1zM163,876h1V877h-1zM164,876h1V877h-1zM165,876h1V877h-1zM166,876h1V877h-1zM167,876h1V877h-1zM168,876h1V877h-1zM169,876h1V877h-1zM170,876h1V877h-1zM171,876h1V877h-1zM172,876h1V877h-1zM173,876h1V877h-1zM174,876h1V877h-1zM175,876h1V877h-1zM176,876h1V877h-1zM177,876h1V877h-1zM178,876h1V877h-1zM179,876h1V877h-1zM180,876h1V877h-1zM181,876h1V877h-1zM182,876h1V877h-1zM183,876h1V877h-1zM184,876h1V877h-1zM185,876h1V877h-1zM186,876h1V877h-1zM187,876h1V877h-1zM188,876h1V877h-1zM189,876h1V877h-1zM190,876h1V877h-1zM191,876h1V877h-1zM192,876h1V877h-1zM193,876h1V877h-1zM194,876h1V877h-1zM195,876h1V877h-1zM196,876h1V877h-1zM197,876h1V877h-1zM198,876h1V877h-1zM199,876h1V877h-1zM200,876h1V877h-1zM201,876h1V877h-1zM202,876h1V877h-1zM203,876h1V877h-1zM204,876h1V877h-1zM205,875h1V878h-1zM206,876h1V879h-1zM207,877h1V880h-1zM208,879h1V887h-1zM209,885h1V887h-1zM210,885h1V887h-1zM211,885h1V889h-1zM212,884h1V887h-1zM213,883h1V886h-1zM214,882h1V885h-1zM215,883h1V901h-1zM216,898h1V901h-1zM217,895h1V898h-1zM218,890h1V897h-1zM219,891h1V897h-1zM220,889h1V895h-1zM221,889h1V893h-1zM222,887h1V894h-1zM223,888h1V892h-1zM224,887h1V892h-1zM225,884h1V892h-1zM226,886h1V891h-1zM227,886h1V890h-1zM228,885h1V890h-1zM229,880h1V889h-1zM230,886h1V890h-1zM231,887h1V890h-1zM232,886h1V891h-1zM233,888h1V891h-1zM234,884h1V893h-1zM235,887h1V893h-1zM236,885h1V890h-1zM237,884h1V889h-1zM238,885h1V888h-1zM239,885h1V893h-1zM240,884h1V890h-1zM241,883h1V888h-1zM242,885h1V888h-1zM243,885h1V888h-1zM244,886h1V889h-1zM245,885h1V896h-1zM246,887h1V896h-1zM247,886h1V889h-1zM248,885h1V890h-1zM249,886h1V890h-1zM250,885h1V889h-1zM251,885h1V888h-1zM252,885h1V894h-1zM253,886h1V890h-1zM254,886h1V889h-1zM255,886h1V889h-1zM256,885h1V888h-1zM257,885h1V889h-1zM258,884h1V887h-1zM259,885h1V889h-1zM260,885h1V889h-1zM261,885h1V889h-1zM262,885h1V889h-1zM263,888h1V891h-1zM264,887h1V891h-1zM265,887h1V891h-1zM266,887h1V890h-1zM267,887h1V891h-1zM268,886h1V889h-1zM269,885h1V889h-1zM270,885h1V889h-1zM271,885h1V889h-1zM272,886h1V890h-1zM273,888h1V893h-1zM274,887h1V891h-1zM275,882h1V890h-1zM276,884h1V889h-1zM277,885h1V889h-1zM278,885h1V889h-1zM279,884h1V893h-1zM280,883h1V888h-1zM281,884h1V888h-1zM282,884h1V888h-1zM283,883h1V887h-1zM284,885h1V893h-1zM285,881h1V888h-1zM286,883h1V888h-1zM287,883h1V890h-1zM288,882h1V898h-1zM289,885h1V890h-1zM290,883h1V891h-1zM291,885h1V891h-1zM292,885h1V894h-1zM293,889h1V894h-1zM294,892h1V899h-1zM295,889h1V897h-1zM296,888h1V895h-1zM297,887h1V894h-1zM298,887h1V895h-1zM299,889h1V896h-1zM300,888h1V897h-1zM301,890h1V897h-1zM302,890h1V897h-1zM303,894h1V900h-1zM304,893h1V903h-1zM305,895h1V904h-1zM306,899h1V905h-1zM307,896h1V904h-1zM308,897h1V904h-1zM309,894h1V903h-1zM310,897h1V905h-1zM311,897h1V907h-1zM312,894h1V907h-1zM313,901h1V907h-1zM314,889h1V906h-1zM315,900h1V906h-1zM316,899h1V906h-1zM317,901h1V909h-1zM318,902h1V911h-1zM319,904h1V910h-1zM320,902h1V920h-1zM321,905h1V913h-1zM322,903h1V913h-1zM323,908h1V914h-1zM324,907h1V918h-1zM325,907h1V916h-1zM326,909h1V916h-1zM327,908h1V916h-1zM328,906h1V918h-1zM329,907h1V914h-1zM330,906h1V914h-1zM331,908h1V919h-1zM332,911h1V920h-1zM333,913h1V920h-1zM334,910h1V921h-1zM335,910h1V920h-1zM336,908h1V917h-1zM337,908h1V919h-1zM338,909h1V918h-1zM339,909h1V934h-1zM340,913h1V919h-1zM341,912h1V924h-1zM342,915h1V924h-1zM343,915h1V926h-1zM344,915h1V923h-1zM345,913h1V922h-1zM346,917h1V925h-1zM347,916h1V926h-1zM348,915h1V928h-1zM349,913h1V926h-1zM350,912h1V923h-1zM351,911h1V923h-1zM352,914h1V923h-1zM353,915h1V926h-1zM354,920h1V928h-1zM355,914h1V927h-1zM356,913h1V927h-1zM357,913h1V923h-1zM358,911h1V920h-1zM359,907h1V919h-1zM360,911h1V919h-1zM361,910h1V922h-1zM362,912h1V929h-1zM363,916h1V924h-1zM364,914h1V922h-1zM365,907h1V920h-1zM366,905h1V920h-1zM367,912h1V920h-1zM368,908h1V918h-1zM369,907h1V915h-1zM370,907h1V918h-1zM371,908h1V917h-1zM372,906h1V913h-1zM373,905h1V916h-1zM374,898h1V915h-1zM375,906h1V914h-1zM376,903h1V911h-1zM377,902h1V912h-1zM378,903h1V914h-1zM379,906h1V915h-1zM380,907h1V917h-1zM381,908h1V917h-1zM382,906h1V917h-1zM383,906h1V914h-1zM384,889h1V914h-1zM385,904h1V911h-1zM386,906h1V920h-1zM387,906h1V912h-1zM388,907h1V915h-1zM389,908h1V914h-1zM390,905h1V914h-1zM391,910h1V915h-1zM392,907h1V917h-1zM393,909h1V915h-1zM394,895h1V916h-1zM395,909h1V917h-1zM396,907h1V916h-1zM397,911h1V917h-1zM398,913h1V920h-1zM399,915h1V920h-1zM400,910h1V933h-1zM401,910h1V918h-1zM402,911h1V916h-1zM403,912h1V917h-1zM404,910h1V918h-1zM405,913h1V919h-1zM406,913h1V919h-1zM407,911h1V919h-1zM408,912h1V920h-1zM409,913h1V921h-1zM410,912h1V919h-1zM411,911h1V916h-1zM412,911h1V918h-1zM413,902h1V919h-1zM414,909h1V920h-1zM415,910h1V917h-1zM416,911h1V917h-1zM417,912h1V917h-1zM418,911h1V920h-1zM419,915h1V928h-1zM420,889h1V925h-1zM421,922h1V935h-1zM422,931h1V944h-1zM423,914h1V944h-1zM424,902h1V920h-1zM425,912h1V937h-1zM426,933h1V943h-1zM427,929h1V945h-1zM428,920h1V937h-1zM429,902h1V925h-1zM430,884h1V907h-1zM431,876h1V900h-1zM432,896h1V936h-1zM433,906h1V937h-1zM434,895h1V914h-1zM435,891h1V902h-1zM436,887h1V896h-1zM437,888h1V921h-1zM438,916h1V929h-1zM439,925h1V941h-1zM440,935h1V946h-1zM441,936h1V946h-1zM442,931h1V944h-1zM443,929h1V935h-1zM444,929h1V935h-1zM445,919h1V933h-1zM446,924h1V931h-1zM447,922h1V927h-1zM448,920h1V924h-1zM449,917h1V921h-1zM450,912h1V919h-1zM451,911h1V919h-1zM452,909h1V914h-1zM453,908h1V911h-1zM454,908h1V910h-1zM455,908h1V909h-1zM456,907h1V908h-1zM457,905h1V908h-1zM458,903h1V906h-1zM459,901h1V904h-1zM460,899h1V902h-1zM461,897h1V900h-1zM462,895h1V898h-1zM463,893h1V895h-1zM464,892h1V894h-1zM465,890h1V892h-1zM466,889h1V891h-1zM467,887h1V889h-1zM468,886h1V888h-1zM469,885h1V887h-1zM470,885h1V886h-1zM471,884h1V885h-1zM472,883h1V885h-1zM473,883h1V884h-1zM474,882h1V883h-1zM475,882h1V883h-1zM476,882h1V883h-1zM477,882h1V883h-1zM478,881h1V882h-1zM479,881h1V882h-1zM480,881h1V882h-1zM481,881h1V882h-1zM482,881h1V882h-1zM483,881h1V882h-1zM484,881h1V882h-1zM485,881h1V882h-1zM486,880h1V881h-1zM487,880h1V881h-1zM488,880h1V881h-1zM489,880h1V881h-1zM490,880h1V881h-1zM491,880h1V881h-1zM492,880h1V881h-1zM493,880h1V881h-1zM494,880h1V881h-1zM495,880h1V881h-1zM496,880h1V881h-1zM497,880h1V881h-1zM498,880h1V881h-1zM499,880h1V881h-1zM500,880h1V881h-1zM501,880h1V881h-1zM502,880h1V881h-1zM503,880h1V881h-1zM504,880h1V881h-1zM505,880h1V881h-1zM506,880h1V881h-1zM507,880h1V881h-1zM508,880h1V881h-1zM509,880h1V881h-1zM510,879h1V880h-1zM511,879h1V880h-1zM512,879h1V880h-1zM513,879h1V880h-1zM514,879h1V880h-1zM515,879h1V880h-1zM516,879h1V880h-1zM517,879h1V880h-1zM518,879h1V880h-1zM519,879h1V880h-1zM520,879h1V880h-1zM521,879h1V880h-1zM522,879h1V880h-1zM523,879h1V880h-1zM524,879h1V880h-1zM525,879h1V880h-1zM526,879h1V880h-1zM527,879h1V880h-1zM528,879h1V880h-1zM529,879h1V880h-1zM530,879h1V880h-1zM531,879h1V880h-1zM532,879h1V880h-1zM533,879h1V880h-1zM534,879h1V880h-1zM535,878h1V879h-1zM536,878h1V879h-1zM537,878h1V879h-1zM538,878h1V879h-1zM539,878h1V879h-1zM540,878h1V879h-1zM541,878h1V879h-1zM542,878h1V879h-1zM543,878h1V879h-1zM544,878h1V879h-1zM545,878h1V879h-1zM546,878h1V879h-1zM547,878h1V879h-1zM548,878h1V879h-1zM549,878h1V879h-1zM550,878h1V879h-1zM551,878h1V879h-1zM552,878h1V879h-1zM553,878h1V879h-1zM554,878h1V879h-1zM555,878h1V879h-1zM556,878h1V879h-1zM557,878h1V879h-1zM558,878h1V879h-1zM559,878h1V879h-1zM560,878h1V879h-1zM561,878h1V879h-1zM562,878h1V879h-1zM563,878h1V879h-1zM564,878h1V879h-1zM565,878h1V879h-1zM566,878h1V879h-1zM567,878h1V879h-1zM568,877h1V878h-1zM569,877h1V878h-1zM570,877h1V878h-1zM571,877h1V878h-1zM572,877h1V878h-1zM573,877h1V878h-1zM574,877h1V878h-1zM575,877h1V878h-1zM576,877h1V878h-1zM577,877h1V878h-1zM578,877h1V878h-1zM579,877h1V878h-1zM580,877h1V878h-1zM581,877h1V878h-1zM582,877h1V878h-1zM583,877h1V878h-1zM584,877h1V878h-1zM585,877h1V878h-1zM586,877h1V878h-1zM587,877h1V878h-1zM588,877h1V878h-1zM589,877h1V878h-1zM590,877h1V878h-1zM591,877h1V878h-1zM592,877h1V878h-1zM593,877h1V878h-1zM594,877h1V878h-1zM595,877h1V878h-1zM596,877h1V878h-1zM597,877h1V878h-1zM598,877h1V878h-1zM599,877h1V878h-1zM600,877h1V878h-1zM601,877h1V878h-1zM602,877h1V878h-1zM603,877h1V878h-1zM604,876h1V877h-1zM605,876h1V877h-1zM606,876h1V877h-1zM607,876h1V877h-1zM608,876h1V877h-1zM609,876h1V877h-1zM610,876h1V877h-1zM611,876h1V877h-1zM612,876h1V877h-1zM613,876h1V877h-1zM614,876h1V877h-1zM615,876h1V877h-1zM616,876h1V877h-1zM617,876h1V877h-1zM618,876h1V877h-1zM619,876h1V877h-1zM620,876h1V877h-1zM621,876h1V877h-1zM622,876h1V877h-1zM623,876h1V877h-1zM624,876h1V877h-1zM625,876h1V877h-1zM626,876h1V877h-1zM627,876h1V877h-1zM628,876h1V877h-1zM629,876h1V877h-1zM630,876h1V877h-1zM631,876h1V877h-1zM632,876h1V877h-1zM633,876h1V877h-1zM634,876h1V877h-1zM635,876h1V877h-1zM636,876h1V877h-1zM637,876h1V877h-1zM638,876h1V877h-1zM639,876h1V877h-1zM640,876h1V877h-1zM641,876h1V877h-1zM642,876h1V877h-1zM643,876h1V877h-1zM644,876h1V877h-1zM645,876h1V877h-1zM646,876h1V877h-1zM647,876h1V877h-1zM648,876h1V877h-1zM649,876h1V877h-1zM650,876h1V877h-1zM651,876h1V877h-1zM652,876h1V877h-1zM653,876h1V877h-1zM654,876h1V877h-1zM655,876h1V877h-1zM656,876h1V877h-1zM657,876h1V877h-1zM658,876h1V877h-1zM659,876h1V877h-1zM660,876h1V877h-1zM661,876h1V877h-1zM662,876h1V877h-1zM663,876h1V877h-1zM664,876h1V877h-1zM665,876h1V877h-1zM666,876h1V877h-1zM667,876h1V877h-1zM668,876h1V877h-1zM669,876h1V877h-1zM670,876h1V877h-1zM671,876h1V877h-1zM672,876h1V877h-1zM673,876h1V877h-1zM674,876h1V877h-1zM675,876h1V877h-1zM676,876h1V877h-1zM677,876h1V877h-1zM678,876h1V877h-1zM679,876h1V877h-1zM680,876h1V877h-1zM681,876h1V877h-1zM682,876h1V877h-1zM683,876h1V877h-1zM684,876h1V877h-1zM685,876h1V877h-1zM686,876h1V877h-1zM687,876h1V877h-1zM688,876h1V877h-1zM689,876h1V877h-1zM690,876h1V877h-1zM691,876h1V877h-1zM692,876h1V877h-1zM693,876h1V877h-1zM694,876h1V877h-1zM695,876h1V877h-1zM696,876h1V877h-1zM697,876h1V877h-1zM698,876h1V877h-1zM699,876h1V877h-1zM700,876h1V877h-1zM701,876h1V877h-1zM702,876h1V877h-1zM703,876h1V877h-1zM704,876h1V877h-1zM705,876h1V877h-1zM706,876h1V877h-1zM707,876h1V877h-1zM708,876h1V877h-1zM709,876h1V877h-1zM710,876h1V877h-1zM711,876h1V877h-1zM712,876h1V877h-1zM713,876h1V877h-1zM714,876h1V877h-1zM715,876h1V877h-1zM716,876h1V877h-1zM717,876h1V877h-1zM718,876h1V877h-1zM719,876h1V877h-1zM720,876h1V877h-1zM721,876h1V877h-1zM722,876h1V877h-1zM723,876h1V877h-1zM724,876h1V877h-1zM725,876h1V877h-1zM726,876h1V877h-1zM727,876h1V877h-1zM728,876h1V877h-1zM729,876h1V877h-1zM730,876h1V877h-1zM731,876h1V877h-1zM732,876h1V877h-1zM733,876h1V877h-1zM734,876h1V877h-1zM735,876h1V877h-1zM736,876h1V877h-1zM737,876h1V877h-1zM738,876h1V877h-1zM739,876h1V877h-1zM740,876h1V877h-1zM741,876h1V877h-1zM742,876h1V877h-1zM743,876h1V877h-1zM744,876h1V877h-1zM745,876h1V877h-1zM746,876h1V877h-1zM747,876h1V877h-1zM748,876h1V877h-1zM749,876h1V877h-1zM750,876h1V877h-1zM751,876h1V877h-1zM752,876h1V877h-1zM753,876h1V877h-1zM754,876h1V877h-1zM755,876h1V877h-1zM756,876h1V877h-1zM757,876h1V877h-1zM758,876h1V877h-1zM759,876h1V877h-1zM760,876h1V877h-1zM761,876h1V877h-1zM762,876h1V877h-1zM763,876h1V877h-1zM764,876h1V877h-1zM765,876h1V877h-1zM766,876h1V877h-1zM767,876h1V877h-1zM768,876h1V877h-1zM769,876h1V877h-1zM770,876h1V877h-1zM771,876h1V877h-1zM772,876h1V877h-1zM773,876h1V877h-1zM774,876h1V877h-1zM775,876h1V877h-1zM776,876h1V877h-1zM777,876h1V877h-1zM778,876h1V877h-1zM779,876h1V877h-1zM780,876h1V877h-1zM781,876h1V877h-1zM782,876h1V877h-1zM783,876h1V877h-1zM784,876h1V877h-1zM785,876h1V877h-1zM786,876h1V877h-1zM787,876h1V877h-1zM788,876h1V877h-1zM789,876h1V877h-1zM790,876h1V877h-1zM791,876h1V877h-1zM792,876h1V877h-1zM793,876h1V877h-1zM794,876h1V877h-1zM795,876h1V877h-1zM796,876h1V877h-1zM797,876h1V877h-1zM798,876h1V877h-1zM799,876h1V877h-1zM800,876h1V877h-1zM801,876h1V877h-1zM802,876h1V877h-1zM803,876h1V877h-1zM804,876h1V877h-1zM805,876h1V877h-1zM806,876h1V877h-1zM807,876h1V877h-1zM808,876h1V877h-1zM809,876h1V877h-1zM810,876h1V877h-1zM811,876h1V877h-1zM812,876h1V877h-1zM813,876h1V877h-1zM814,876h1V877h-1zM815,876h1V877h-1zM816,876h1V877h-1zM817,876h1V877h-1zM818,876h1V877h-1zM819,876h1V877h-1zM820,876h1V877h-1zM821,876h1V877h-1zM822,876h1V877h-1zM823,876h1V877h-1zM824,876h1V877h-1zM825,876h1V877h-1zM826,876h1V877h-1zM827,876h1V877h-1zM828,876h1V877h-1zM829,876h1V877h-1zM830,876h1V877h-1zM831,876h1V877h-1zM832,876h1V877h-1zM833,876h1V877h-1zM834,876h1V877h-1zM835,876h1V877h-1zM836,876h1V877h-1zM837,876h1V877h-1zM838,876h1V877h-1zM839,876h1V877h-1zM840,876h1V877h-1zM841,876h1V877h-1zM842,876h1V877h-1zM843,876h1V877h-1zM844,876h1V877h-1zM845,876h1V877h-1zM846,876h1V877h-1zM847,876h1V877h-1zM848,876h1V877h-1zM849,876h1V877h-1zM850,876h1V877h-1zM851,876h1V877h-1zM852,876h1V877h-1zM853,876h1V877h-1zM854,876h1V877h-1zM855,876h1V877h-1zM856,876h1V877h-1zM857,876h1V877h-1zM858,876h1V877h-1zM859,876h1V877h-1zM860,876h1V877h-1zM861,876h1V877h-1zM862,876h1V877h-1zM863,876h1V877h-1zM864,876h1V877h-1zM865,876h1V877h-1zM866,876h1V877h-1zM867,876h1V877h-1zM868,876h1V877h-1zM869,876h1V877h-1zM870,876h1V877h-1zM871,876h1V877h-1zM872,876h1V877h-1zM873,876h1V877h-1zM874,876h1V877h-1zM875,876h1V877h-1zM876,876h1V877h-1zM877,876h1V877h-1zM878,876h1V877h-1zM879,876h1V877h-1zM880,876h1V877h-1zM881,876h1V877h-1zM882,876h1V877h-1zM883,876h1V877h-1zM884,876h1V877h-1zM885,876h1V877h-1zM886,876h1V877h-1zM887,876h1V877h-1zM888,876h1V877h-1zM889,876h1V877h-1zM890,876h1V877h-1zM891,876h1V877h-1zM892,876h1V877h-1zM893,876h1V877h-1zM894,876h1V877h-1zM895,876h1V877h-1zM896,876h1V877h-1zM897,876h1V877h-1zM898,876h1V877h-1zM899,876h1V877h-1zM900,876h1V877h-1zM901,876h1V877h-1zM902,876h1V877h-1zM903,876h1V877h-1zM904,876h1V877h-1zM905,876h1V877h-1zM906,876h1V877h-1zM907,876h1V877h-1zM908,876h1V877h-1zM909,876h1V877h-1zM910,876h1V877h-1zM911,876h1V877h-1zM912,876h1V877h-1zM913,876h1V877h-1zM914,876h1V877h-1zM915,876h1V877h-1zM916,876h1V877h-1zM917,876h1V877h-1zM918,876h1V877h-1zM919,876h1V877h-1zM920,876h1V877h-1zM921,876h1V877h-1zM922,876h1V877h-1zM923,876h1V877h-1zM924,876h1V877h-1zM925,876h1V877h-1zM926,876h1V877h-1zM927,876h1V877h-1zM928,876h1V877h-1zM929,876h1V877h-1zM930,876h1V877h-1zM931,876h1V877h-1zM932,876h1V877h-1zM933,876h1V877h-1zM934,876h1V877h-1zM935,876h1V877h-1zM936,876h1V877h-1zM937,876h1V877h-1zM938,876h1V877h-1zM939,876h1V877h-1zM940,876h1V877h-1zM941,876h1V877h-1zM942,876h1V877h-1zM943,876h1V877h-1zM944,876h1V877h-1zM945,876h1V877h-1zM946,876h1V877h-1zM947,876h1V877h-1zM948,876h1V877h-1zM949,876h1V877h-1zM950,876h1V877h-1zM951,876h1V877h-1zM952,876h1V877h-1zM953,876h1V877h-1zM954,876h1V877h-1zM955,876h1V877h-1zM956,876h1V877h-1zM957,876h1V877h-1zM958,876h1V877h-1zM959,876h1V877h-1zM960,876h1V877h-1zM961,876h1V877h-1zM962,876h1V877h-1zM963,876h1V877h-1zM964,876h1V877h-1zM965,876h1V877h-1zM966,876h1V877h-1zM967,876h1V877h-1zM968,876h1V877h-1zM969,876h1V877h-1zM970,876h1V877h-1zM971,876h1V877h-1zM972,876h1V877h-1zM973,876h1V877h-1zM974,876h1V877h-1zM975,876h1V877h-1zM976,876h1V877h-1zM977,876h1V877h-1zM978,876h1V877h-1zM979,876h1V877h-1zM980,876h1V877h-1zM981,876h1V877h-1zM982,876h1V877h-1zM983,876h1V877h-1zM984,876h1V877h-1zM985,876h1V877h-1zM986,876h1V877h-1zM987,876h1V877h-1zM988,876h1V877h-1zM989,876h1V877h-1zM990,876h1V877h-1zM991,876h1V877h-1zM992,876h1V877h-1zM993,876h1V877h-1zM994,876h1V877h-1zM995,876h1V877h-1zM996,876h1V877h-1zM997,876h1V877h-1zM998,876h1V877h-1zM999,876h1V877h-1zM1000,876h1V877h-1zM1001,876h1V877h-1zM1002,876h1V877h-1zM1003,876h1V877h-1zM1004,876h1V877h-1zM1005,876h1V877h-1zM1006,876h1V877h-1zM1007,876h1V877h-1zM1008,876h1V877h-1zM1009,876h1V877h-1zM1010,876h1V877h-1zM1011,876h1V877h-1zM1012,876h1V877h-1zM1013,876h1V877h-1zM1014,876h1V877h-1zM1015,876h1V877h-1zM1016,876h1V877h-1zM1017,876h1V877h-1zM1018,876h1V877h-1zM1019,876h1V877h-1zM1020,876h1V877h-1zM1021,876h1V877h-1zM1022,876h1V877h-1zM1023,876h1V877h-1zM1024,876h1V877h-1zM1025,876h1V877h-1zM1026,876h1V877h-1zM1027,876h1V877h-1zM1028,876h1V877h-1zM1029,876h1V877h-1zM1030,876h1V877h-1zM1031,876h1V877h-1zM1032,876h1V877h-1zM1033,876h1V877h-1zM1034,876h1V877h-1zM1035,876h1V877h-1zM1036,876h1V877h-1zM1037,876h1V877h-1zM1038,876h1V877h-1zM1039,876h1V877h-1zM1040,876h1V877h-1zM1041,876h1V877h-1zM1042,876h1V877h-1zM1043,876h1V877h-1zM1044,876h1V877h-1zM1045,876h1V877h-1zM1046,876h1V877h-1zM1047,876h1V877h-1zM1048,876h1V877h-1zM1049,876h1V877h-1zM1050,876h1V877h-1zM1051,876h1V877h-1zM1052,876h1V877h-1zM1053,876h1V877h-1zM1054,876h1V877h-1zM1055,876h1V877h-1zM1056,876h1V877h-1zM1057,876h1V877h-1zM1058,876h1V877h-1zM1059,876h1V877h-1zM1060,876h1V877h-1zM1061,876h1V877h-1zM1062,876h1V877h-1zM1063,876h1V877h-1zM1064,876h1V877h-1zM1065,876h1V877h-1zM1066,876h1V877h-1zM1067,876h1V877h-1zM1068,876h1V877h-1zM1069,876h1V877h-1zM1070,876h1V877h-1zM1071,876h1V877h-1zM1072,876h1V877h-1zM1073,876h1V877h-1zM1074,876h1V877h-1zM1075,876h1V877h-1zM1076,876h1V877h-1zM1077,876h1V877h-1zM1078,876h1V877h-1zM1079,876h1V877h-1zM1080,876h1V877h-1zM1081,876h1V877h-1zM1082,876h1V877h-1zM1083,876h1V877h-1zM1084,876h1V877h-1zM1085,876h1V877h-1zM1086,876h1V877h-1zM1087,876h1V877h-1zM1088,876h1V877h-1zM1089,876h1V877h-1zM1090,876h1V877h-1zM1091,876h1V877h-1zM1092,876h1V877h-1zM1093,876h1V877h-1zM1094,876h1V877h-1zM1095,876h1V877h-1zM1096,876h1V877h-1zM1097,876h1V877h-1zM1098,876h1V877h-1zM1099,876h1V877h-1zM1100,876h1V877h-1zM1101,876h1V877h-1zM1102,876h1V877h-1zM1103,876h1V877h-1zM1104,876h1V877h-1zM1105,876h1V877h-1zM1106,876h1V877h-1zM1107,876h1V877h-1zM1108,876h1V877h-1zM1109,876h1V877h-1zM1110,876h1V877h-1zM1111,876h1V877h-1zM1112,876h1V877h-1zM1113,876h1V877h-1zM1114,876h1V877h-1zM1115,876h1V877h-1zM1116,876h1V877h-1zM1117,876h1V877h-1zM1118,876h1V877h-1zM1119,876h1V877h-1zM1120,876h1V877h-1zM1121,876h1V877h-1zM1122,876h1V877h-1zM1123,876h1V877h-1zM1124,876h1V877h-1zM1125,876h1V877h-1zM1126,876h1V877h-1zM1127,876h1V877h-1zM1128,876h1V877h-1zM1129,876h1V877h-1zM1130,876h1V877h-1zM1131,876h1V877h-1zM1132,876h1V877h-1zM1133,876h1V877h-1zM1134,876h1V877h-1zM1135,876h1V877h-1zM1136,876h1V877h-1zM1137,876h1V877h-1zM1138,876h1V877h-1zM1139,876h1V877h-1zM1140,876h1V877h-1zM1141,876h1V877h-1zM1142,876h1V877h-1zM1143,876h1V877h-1zM1144,876h1V877h-1zM1145,876h1V877h-1zM1146,876h1V877h-1zM1147,876h1V877h-1zM1148,876h1V877h-1zM1149,876h1V877h-1zM1150,876h1V877h-1zM1151,876h1V877h-1zM1152,876h1V877h-1zM1153,876h1V877h-1zM1154,876h1V877h-1zM1155,876h1V877h-1zM1156,876h1V877h-1zM1157,876h1V877h-1zM1158,876h1V877h-1zM1159,876h1V877h-1zM1160,876h1V877h-1zM1161,876h1V877h-1zM1162,876h1V877h-1zM1163,876h1V877h-1zM1164,876h1V877h-1zM1165,876h1V877h-1zM1166,876h1V877h-1zM1167,876h1V877h-1zM1168,876h1V877h-1zM1169,876h1V877h-1zM1170,876h1V877h-1zM1171,876h1V877h-1zM1172,876h1V877h-1zM1173,876h1V877h-1zM1174,876h1V877h-1zM1175,876h1V877h-1zM1176,876h1V877h-1zM1177,876h1V877h-1zM1178,876h1V877h-1zM1179,876h1V877h-1zM1180,876h1V877h-1zM1181,876h1V877h-1zM1182,876h1V877h-1zM1183,876h1V877h-1zM1184,876h1V877h-1zM1185,876h1V877h-1zM1186,876h1V877h-1zM1187,876h1V877h-1zM1188,876h1V877h-1zM1189,876h1V877h-1zM1190,876h1V877h-1zM1191,876h1V877h-1zM1192,876h1V877h-1zM1193,876h1V877h-1zM1194,876h1V877h-1zM1195,876h1V877h-1zM1196,876h1V877h-1zM1197,876h1V877h-1zM1198,876h1V877h-1zM1199,876h1V877h-1zM1200,876h1V877h-1zM1201,876h1V877h-1zM1202,876h1V877h-1zM1203,876h1V877h-1zM1204,876h1V877h-1zM1205,876h1V877h-1zM1206,876h1V877h-1zM1207,876h1V877h-1zM1208,876h1V877h-1zM1209,876h1V877h-1zM1210,876h1V877h-1zM1211,876h1V877h-1zM1212,876h1V877h-1zM1213,876h1V877h-1zM1214,876h1V877h-1zM1215,876h1V877h-1zM1216,876h1V877h-1zM1217,876h1V877h-1zM1218,876h1V877h-1zM1219,876h1V877h-1zM1220,876h1V877h-1zM1221,876h1V877h-1zM1222,876h1V877h-1zM1223,876h1V877h-1zM1224,876h1V877h-1zM1225,876h1V877h-1zM1226,876h1V877h-1zM1227,876h1V877h-1zM1228,876h1V877h-1zM1229,876h1V877h-1zM1230,876h1V877h-1zM1231,876h1V877h-1zM1232,876h1V877h-1zM1233,876h1V877h-1zM1234,876h1V877h-1zM1235,876h1V877h-1zM1236,876h1V877h-1zM1237,876h1V877h-1zM1238,876h1V877h-1zM1239,876h1V877h-1zM1240,876h1V877h-1zM1241,876h1V877h-1zM1242,876h1V877h-1zM1243,876h1V877h-1zM1244,876h1V877h-1zM1245,876h1V877h-1zM1246,876h1V877h-1zM1247,876h1V877h-1zM1248,876h1V877h-1zM1249,876h1V877h-1zM1250,876h1V877h-1zM1251,876h1V877h-1zM1252,876h1V877h-1zM1253,876h1V877h-1zM1254,876h1V877h-1zM1255,876h1V877h-1zM1256,876h1V877h-1zM1257,876h1V877h-1zM1258,876h1V877h-1zM1259,876h1V877h-1zM1260,876h1V877h-1zM1261,876h1V877h-1zM1262,876h1V877h-1zM1263,876h1V877h-1zM1264,876h1V877h-1zM1265,876h1V877h-1zM1266,876h1V877h-1zM1267,876h1V877h-1zM1268,876h1V877h-1zM1269,876h1V877h-1zM1270,876h1V877h-1zM1271,876h1V877h-1zM1272,876h1V877h-1zM1273,876h1V877h-1zM1274,876h1V877h-1zM1275,876h1V877h-1zM1276,876h1V877h-1zM1277,876h1V877h-1zM1278,876h1V877h-1zM1279,876h1V877h-1zM1280,876h1V877h-1zM1281,876h1V877h-1zM1282,876h1V877h-1zM1283,876h1V877h-1zM1284,876h1V877h-1zM1285,876h1V877h-1zM1286,876h1V877h-1zM1287,876h1V877h-1zM1288,876h1V877h-1zM1289,876h1V877h-1zM1290,876h1V877h-1zM1291,876h1V877h-1zM1292,876h1V877h-1zM1293,876h1V877h-1zM1294,876h1V877h-1zM1295,876h1V877h-1zM1296,876h1V877h-1zM1297,876h1V877h-1zM1298,876h1V877h-1zM1299,876h1V877h-1zM1300,876h1V877h-1zM1301,876h1V877h-1zM1302,876h1V877h-1zM1303,876h1V877h-1zM1304,876h1V877h-1zM1305,876h1V877h-1zM1306,876h1V877h-1zM1307,876h1V877h-1zM1308,876h1V877h-1zM1309,876h1V877h-1zM1310,876h1V877h-1zM1311,876h1V877h-1zM1312,876h1V877h-1zM1313,876h1V877h-1zM1314,876h1V877h-1zM1315,876h1V877h-1zM1316,876h1V877h-1zM1317,876h1V877h-1zM1318,876h1V877h-1zM1319,876h1V877h-1zM1320,876h1V877h-1zM1321,876h1V877h-1zM1322,876h1V877h-1zM1323,876h1V877h-1zM1324,876h1V877h-1zM1325,876h1V877h-1zM1326,876h1V877h-1zM1327,876h1V877h-1zM1328,876h1V877h-1zM1329,876h1V877h-1zM1330,876h1V877h-1zM1331,876h1V877h-1zM1332,876h1V877h-1zM1333,876h1V877h-1zM1334,876h1V877h-1zM1335,876h1V877h-1zM1336,876h1V877h-1zM1337,876h1V877h-1zM1338,876h1V877h-1zM1339,876h1V877h-1zM1340,876h1V877h-1zM1341,876h1V877h-1zM1342,876h1V877h-1zM1343,876h1V877h-1zM1344,876h1V877h-1zM1345,876h1V877h-1zM1346,876h1V877h-1zM1347,876h1V877h-1zM1348,876h1V877h-1zM1349,876h1V877h-1zM1350,876h1V877h-1zM1351,876h1V877h-1zM1352,876h1V877h-1zM1353,876h1V877h-1zM1354,876h1V877h-1zM1355,876h1V877h-1zM1356,876h1V877h-1zM1357,876h1V877h-1zM1358,876h1V877h-1zM1359,876h1V877h-1zM1360,876h1V877h-1zM1361,876h1V877h-1zM1362,876h1V877h-1zM1363,876h1V877h-1zM1364,876h1V877h-1zM1365,876h1V877h-1zM1366,876h1V877h-1zM1367,876h1V877h-1zM1368,876h1V877h-1zM1369,876h1V877h-1zM1370,876h1V877h-1zM1371,876h1V877h-1zM1372,876h1V877h-1zM1373,876h1V877h-1zM1374,876h1V877h-1zM1375,876h1V877h-1zM1376,876h1V877h-1zM1377,876h1V877h-1zM1378,876h1V877h-1zM1379,876h1V877h-1zM1380,876h1V877h-1zM1381,876h1V877h-1zM1382,876h1V877h-1zM1383,876h1V877h-1zM1384,876h1V877h-1zM1385,876h1V877h-1zM1386,876h1V877h-1zM1387,876h1V877h-1zM1388,876h1V877h-1zM1389,876h1V877h-1zM1390,876h1V877h-1zM1391,876h1V877h-1zM1392,876h1V877h-1zM1393,876h1V877h-1zM1394,876h1V877h-1zM1395,876h1V877h-1zM1396,876h1V877h-1zM1397,876h1V877h-1zM1398,876h1V877h-1zM1399,876h1V877h-1zM1400,876h1V877h-1zM1401,876h1V877h-1zM1402,876h1V877h-1zM1403,876h1V877h-1zM1404,876h1V877h-1zM1405,876h1V877h-1zM1406,876h1V877h-1zM1407,876h1V877h-1zM1408,876h1V877h-1zM1409,876h1V877h-1zM1410,876h1V877h-1zM1411,876h1V877h-1zM1412,876h1V877h-1zM1413,876h1V877h-1zM1414,876h1V877h-1zM1415,876h1V877h-1zM1416,876h1V877h-1zM1417,876h1V877h-1zM1418,876h1V877h-1zM1419,876h1V877h-1zM1420,876h1V877h-1zM1421,876h1V877h-1zM1422,876h1V877h-1zM1423,876h1V877h-1zM1424,876h1V877h-1zM1425,876h1V877h-1zM1426,876h1V877h-1zM1427,876h1V877h-1zM1428,876h1V877h-1zM1429,876h1V877h-1zM1430,876h1V877h-1zM1431,876h1V877h-1zM1432,876h1V877h-1zM1433,876h1V877h-1zM1434,876h1V877h-1zM1435,876h1V877h-1zM1436,876h1V877h-1zM1437,876h1V877h-1zM1438,876h1V877h-1zM1439,876h1V877h-1zM1440,876h1V877h-1zM1441,876h1V877h-1zM1442,876h1V877h-1zM1443,876h1V877h-1zM1444,876h1V877h-1zM1445,876h1V877h-1zM1446,876h1V877h-1zM1447,876h1V877h-1zM1448,876h1V877h-1zM1449,876h1V877h-1zM1450,876h1V877h-1zM1451,876h1V877h-1zM1452,876h1V877h-1zM1453,876h1V877h-1zM1454,876h1V877h-1zM1455,876h1V877h-1zM1456,876h1V877h-1zM1457,876h1V877h-1zM1458,876h1V877h-1zM1459,876h1V877h-1zM1460,876h1V877h-1zM1461,876h1V877h-1zM1462,876h1V877h-1zM1463,876h1V877h-1zM1464,876h1V877h-1zM1465,876h1V877h-1zM1466,876h1V877h-1zM1467,876h1V877h-1zM1468,876h1V877h-1zM1469,876h1V877h-1zM1470,876h1V877h-1zM1471,876h1V877h-1zM1472,876h1V877h-1zM1473,876h1V877h-1zM1474,876h1V877h-1zM1475,876h1V877h-1zM1476,876h1V877h-1zM1477,876h1V877h-1zM1478,876h1V877h-1zM1479,876h1V877h-1zM1480,876h1V877h-1zM1481,876h1V877h-1zM1482,876h1V877h-1zM1483,876h1V877h-1zM1484,876h1V877h-1zM1485,876h1V877h-1zM1486,876h1V877h-1zM1487,876h1V877h-1zM1488,876h1V877h-1zM1489,876h1V877h-1zM1490,876h1V877h-1zM1491,876h1V877h-1zM1492,876h1V877h-1zM1493,876h1V877h-1zM1494,876h1V877h-1zM1495,876h1V877h-1zM1496,876h1V877h-1zM1497,876h1V877h-1zM1498,876h1V877h-1zM1499,876h1V877h-1zM1500,876h1V877h-1zM1501,876h1V877h-1zM1502,876h1V877h-1zM1503,876h1V877h-1zM1504,876h1V877h-1zM1505,876h1V877h-1zM1506,876h1V877h-1zM1507,876h1V877h-1zM1508,876h1V877h-1zM1509,876h1V877h-1zM1510,876h1V877h-1zM1511,876h1V877h-1zM1512,876h1V877h-1zM1513,876h1V877h-1zM1514,876h1V877h-1zM1515,876h1V877h-1zM1516,876h1V877h-1zM1517,876h1V877h-1zM1518,876h1V877h-1zM1519,876h1V877h-1zM1520,876h1V877h-1zM1521,876h1V877h-1zM1522,876h1V877h-1zM1523,876h1V877h-1zM1524,876h1V877h-1zM1525,876h1V877h-1zM1526,876h1V877h-1zM1527,876h1V877h-1zM1528,876h1V877h-1zM1529,876h1V877h-1zM1530,876h1V877h-1zM1531,876h1V877h-1zM1532,876h1V877h-1zM1533,876h1V877h-1zM1534,876h1V877h-1zM1535,876h1V877h-1zM1536,876h1V877h-1zM1537,876h1V877h-1zM1538,876h1V877h-1zM1539,876h1V877h-1zM1540,876h1V877h-1zM1541,876h1V877h-1zM1542,876h1V877h-1zM1543,876h1V877h-1zM1544,876h1V877h-1zM1545,876h1V877h-1zM1546,876h1V877h-1zM1547,876h1V877h-1zM1548,876h1V877h-1zM1549,876h1V877h-1zM1550,876h1V877h-1zM1551,876h1V877h-1zM1552,876h1V877h-1zM1553,876h1V877h-1zM1554,876h1V877h-1zM1555,876h1V877h-1zM1556,876h1V877h-1zM1557,876h1V877h-1zM1558,876h1V877h-1zM1559,876h1V877h-1zM1560,876h1V877h-1zM1561,876h1V877h-1zM1562,876h1V877h-1zM1563,876h1V877h-1zM1564,876h1V877h-1zM1565,876h1V877h-1zM1566,876h1V877h-1zM1567,876h1V877h-1zM1568,876h1V877h-1zM1569,876h1V877h-1zM1570,876h1V877h-1zM1571,876h1V877h-1zM1572,876h1V877h-1zM1573,876h1V877h-1zM1574,876h1V877h-1zM1575,876h1V877h-1zM1576,876h1V877h-1zM1577,876h1V877h-1zM1578,876h1V877h-1zM1579,876h1V877h-1zM1580,876h1V877h-1zM1581,876h1V877h-1zM1582,876h1V877h-1zM1583,876h1V877h-1zM1584,876h1V877h-1zM1585,876h1V877h-1zM1586,876h1V877h-1zM1587,876h1V877h-1zM1588,876h1V877h-1zM1589,876h1V877h-1zM1590,876h1V877h-1zM1591,876h1V877h-1zM1592,876h1V877h-1zM1593,876h1V877h-1zM1594,876h1V877h-1zM1595,876h1V877h-1zM1596,876h1V877h-1zM1597,876h1V877h-1zM1598,876h1V877h-1zM1599,876h1V877h-1zM1600,876h1V877h-1zM1601,876h1V877h-1zM1602,876h1V877h-1zM1603,876h1V877h-1zM1604,876h1V877h-1zM1605,876h1V877h-1zM1606,876h1V877h-1zM1607,876h1V877h-1zM1608,876h1V877h-1zM1609,876h1V877h-1zM1610,876h1V877h-1zM1611,876h1V877h-1zM1612,876h1V877h-1zM1613,876h1V877h-1zM1614,876h1V877h-1zM1615,876h1V877h-1zM1616,876h1V877h-1zM1617,876h1V877h-1zM1618,876h1V877h-1zM1619,876h1V877h-1zM1620,876h1V877h-1zM1621,876h1V877h-1zM1622,876h1V877h-1zM1623,876h1V877h-1zM1624,876h1V877h-1zM1625,876h1V877h-1zM1626,876h1V877h-1zM1627,876h1V877h-1zM1628,876h1V877h-1zM1629,876h1V877h-1zM1630,876h1V877h-1zM1631,876h1V877h-1zM1632,876h1V877h-1zM1633,876h1V877h-1zM1634,876h1V877h-1zM1635,876h1V877h-1zM1636,876h1V877h-1zM1637,876h1V877h-1zM1638,876h1V877h-1zM1639,876h1V877h-1zM1640,876h1V877h-1zM1641,876h1V877h-1zM1642,876h1V877h-1zM1643,876h1V877h-1zM1644,876h1V877h-1zM1645,876h1V877h-1zM1646,876h1V877h-1zM1647,876h1V877h-1zM1648,876h1V877h-1zM1649,876h1V877h-1zM1650,876h1V877h-1zM1651,876h1V877h-1zM1652,876h1V877h-1zM1653,876h1V877h-1zM1654,876h1V877h-1zM1655,876h1V877h-1zM1656,876h1V877h-1zM1657,876h1V877h-1zM1658,876h1V877h-1zM1659,876h1V877h-1zM1660,876h1V877h-1zM1661,876h1V877h-1zM1662,876h1V877h-1zM1663,876h1V877h-1zM1664,876h1V877h-1zM1665,876h1V877h-1zM1666,876h1V877h-1zM1667,876h1V877h-1zM1668,876h1V877h-1zM1669,876h1V877h-1zM1670,876h1V877h-1zM1671,876h1V877h-1zM1672,876h1V877h-1zM1673,876h1V877h-1zM1674,876h1V877h-1zM1675,876h1V877h-1zM1676,876h1V877h-1zM1677,876h1V877h-1zM1678,876h1V877h-1zM1679,876h1V877h-1zM1680,876h1V877h-1zM1681,876h1V877h-1zM1682,876h1V877h-1zM1683,876h1V877h-1zM1684,876h1V877h-1zM1685,876h1V877h-1zM1686,876h1V877h-1zM1687,876h1V877h-1zM1688,876h1V877h-1zM1689,876h1V877h-1zM1690,876h1V877h-1zM1691,876h1V877h-1zM1692,876h1V877h-1zM1693,876h1V877h-1zM1694,876h1V877h-1zM1695,876h1V877h-1zM1696,876h1V877h-1zM1697,876h1V877h-1zM1698,876h1V877h-1zM1699,876h1V877h-1zM1700,876h1V877h-1zM1701,876h1V877h-1zM1702,876h1V877h-1zM1703,876h1V877h-1zM1704,876h1V877h-1zM1705,876h1V877h-1zM1706,876h1V877h-1zM1707,876h1V877h-1zM1708,876h1V877h-1zM1709,876h1V877h-1zM1710,876h1V877h-1zM1711,876h1V877h-1zM1712,876h1V877h-1zM1713,876h1V877h-1zM1714,876h1V877h-1zM1715,876h1V877h-1zM1716,876h1V877h-1zM1717,876h1V877h-1zM1718,876h1V877h-1zM1719,876h1V877h-1zM1720,876h1V877h-1zM1721,876h1V877h-1zM1722,876h1V877h-1zM1723,876h1V877h-1zM1724,876h1V877h-1zM1725,876h1V877h-1zM1726,876h1V877h-1zM1727,876h1V877h-1zM1728,876h1V877h-1zM1729,876h1V877h-1zM1730,876h1V877h-1zM1731,876h1V877h-1zM1732,876h1V877h-1zM1733,876h1V877h-1zM1734,876h1V877h-1zM1735,876h1V877h-1zM1736,876h1V877h-1zM1737,876h1V877h-1zM1738,876h1V877h-1zM1739,876h1V877h-1zM1740,876h1V877h-1zM1741,876h1V877h-1zM1742,876h1V877h-1zM1743,876h1V877h-1zM1744,876h1V877h-1zM1745,876h1V877h-1zM1746,876h1V877h-1zM1747,876h1V877h-1zM1748,876h1V877h-1zM1749,876h1V877h-1zM1750,876h1V877h-1z" fill="#8cc83a" shape-rendering="crispEdges"/>
<line x1="3" y1="173.5" x2="1716" y2="173.5" stroke="#c0c0c8" stroke-width="1.2" stroke-dasharray="5 5"/>
<line x1="3" y1="407.5" x2="1716" y2="407.5" stroke="#c0c0c8" stroke-width="1.2" stroke-dasharray="5 5"/>
<line x1="3" y1="641.5" x2="1716" y2="641.5" stroke="#c0c0c8" stroke-width="1.2" stroke-dasharray="5 5"/>
<line x1="3" y1="875.5" x2="1716" y2="875.5" stroke="#c0c0c8" stroke-width="1.2" stroke-dasharray="5 5"/>
<line x1="55.5" y1="97" x2="55.5" y2="992" stroke="#d0d0d0" stroke-width="1.2" stroke-dasharray="5 5"/>
<text x="1745" y="108.19999999999999" font-size="13.5" fill="#f5e61a" text-anchor="end" font-weight="normal" >1.5 V</text>
<text x="1745" y="131.5" font-size="13.5" fill="#f5e61a" text-anchor="end" font-weight="normal" >1 V</text>
<text x="1745" y="154.79999999999998" font-size="13.5" fill="#f5e61a" text-anchor="end" font-weight="normal" >500 mV</text>
<text x="1745" y="178.1" font-size="13.5" fill="#f5e61a" text-anchor="end" font-weight="normal" >0 V</text>
<text x="1745" y="201.4" font-size="13.5" fill="#f5e61a" text-anchor="end" font-weight="normal" >-500 mV</text>
<text x="1745" y="224.7" font-size="13.5" fill="#f5e61a" text-anchor="end" font-weight="normal" >-1 V</text>
<text x="1745" y="248.0" font-size="13.5" fill="#f5e61a" text-anchor="end" font-weight="normal" >-1.5 V</text>
<text x="1745" y="271.3" font-size="13.5" fill="#f5e61a" text-anchor="end" font-weight="normal" >-2 V</text>
<text x="1745" y="318.90000000000003" font-size="13.5" fill="#22c4d4" text-anchor="end" font-weight="normal" >2 V</text>
<text x="1745" y="342.20000000000005" font-size="13.5" fill="#22c4d4" text-anchor="end" font-weight="normal" >1.5 V</text>
<text x="1745" y="365.5" font-size="13.5" fill="#22c4d4" text-anchor="end" font-weight="normal" >1 V</text>
<text x="1745" y="388.8" font-size="13.5" fill="#22c4d4" text-anchor="end" font-weight="normal" >500 mV</text>
<text x="1745" y="412.1" font-size="13.5" fill="#22c4d4" text-anchor="end" font-weight="normal" >0 V</text>
<text x="1745" y="435.40000000000003" font-size="13.5" fill="#22c4d4" text-anchor="end" font-weight="normal" >-500 mV</text>
<text x="1745" y="458.70000000000005" font-size="13.5" fill="#22c4d4" text-anchor="end" font-weight="normal" >-1 V</text>
<text x="1745" y="482.0" font-size="13.5" fill="#22c4d4" text-anchor="end" font-weight="normal" >-1.5 V</text>
<text x="1745" y="505.3" font-size="13.5" fill="#22c4d4" text-anchor="end" font-weight="normal" >-2 V</text>
<text x="1745" y="552.9" font-size="13.5" fill="#e8284e" text-anchor="end" font-weight="normal" >2 V</text>
<text x="1745" y="576.2" font-size="13.5" fill="#e8284e" text-anchor="end" font-weight="normal" >1.5 V</text>
<text x="1745" y="599.5" font-size="13.5" fill="#e8284e" text-anchor="end" font-weight="normal" >1 V</text>
<text x="1745" y="622.8000000000001" font-size="13.5" fill="#e8284e" text-anchor="end" font-weight="normal" >500 mV</text>
<text x="1745" y="646.1" font-size="13.5" fill="#e8284e" text-anchor="end" font-weight="normal" >0 V</text>
<text x="1745" y="669.4" font-size="13.5" fill="#e8284e" text-anchor="end" font-weight="normal" >-500 mV</text>
<text x="1745" y="692.7" font-size="13.5" fill="#e8284e" text-anchor="end" font-weight="normal" >-1 V</text>
<text x="1745" y="716.0" font-size="13.5" fill="#e8284e" text-anchor="end" font-weight="normal" >-1.5 V</text>
<text x="1745" y="739.3000000000001" font-size="13.5" fill="#e8284e" text-anchor="end" font-weight="normal" >-2 V</text>
<text x="1745" y="786.9" font-size="13.5" fill="#8cc83a" text-anchor="end" font-weight="normal" >2 V</text>
<text x="1745" y="810.2" font-size="13.5" fill="#8cc83a" text-anchor="end" font-weight="normal" >1.5 V</text>
<text x="1745" y="833.5" font-size="13.5" fill="#8cc83a" text-anchor="end" font-weight="normal" >1 V</text>
<text x="1745" y="856.8000000000001" font-size="13.5" fill="#8cc83a" text-anchor="end" font-weight="normal" >500 mV</text>
<text x="1745" y="880.1" font-size="13.5" fill="#8cc83a" text-anchor="end" font-weight="normal" >0 V</text>
<text x="1745" y="903.4" font-size="13.5" fill="#8cc83a" text-anchor="end" font-weight="normal" >-500 mV</text>
<text x="1745" y="926.7" font-size="13.5" fill="#8cc83a" text-anchor="end" font-weight="normal" >-1 V</text>
<text x="1745" y="950.0" font-size="13.5" fill="#8cc83a" text-anchor="end" font-weight="normal" >-1.5 V</text>
<text x="1745" y="973.3000000000001" font-size="13.5" fill="#8cc83a" text-anchor="end" font-weight="normal" >-2 V</text>
<text x="55.5" y="986" font-size="13.5" fill="#a8a8a8" text-anchor="middle" font-weight="normal" >0 s</text>
<text x="230.4" y="986" font-size="13.5" fill="#a8a8a8" text-anchor="middle" font-weight="normal" >4 ms</text>
<text x="405.3" y="986" font-size="13.5" fill="#a8a8a8" text-anchor="middle" font-weight="normal" >8 ms</text>
<text x="580.2" y="986" font-size="13.5" fill="#a8a8a8" text-anchor="middle" font-weight="normal" >12 ms</text>
<text x="755.1" y="986" font-size="13.5" fill="#a8a8a8" text-anchor="middle" font-weight="normal" >16 ms</text>
<text x="930.0" y="986" font-size="13.5" fill="#a8a8a8" text-anchor="middle" font-weight="normal" >20 ms</text>
<text x="1104.9" y="986" font-size="13.5" fill="#a8a8a8" text-anchor="middle" font-weight="normal" >24 ms</text>
<text x="1279.8" y="986" font-size="13.5" fill="#a8a8a8" text-anchor="middle" font-weight="normal" >28 ms</text>
<text x="1454.7" y="986" font-size="13.5" fill="#a8a8a8" text-anchor="middle" font-weight="normal" >32 ms</text>
<text x="1629.6000000000001" y="986" font-size="13.5" fill="#a8a8a8" text-anchor="middle" font-weight="normal" >36 ms</text>
<path d="M9,161.0 H29 L42,173.5 L29,186.0 H9 Q6.5,186.0 6.5,183.5 V163.5 Q6.5,161.0 9,161.0 Z" fill="#2a2710" stroke="#f0e62a" stroke-width="1.5"/>
<text x="23" y="178.0" font-size="12.5" fill="#f4ee90" text-anchor="middle" font-weight="normal" >C 1</text>
<text x="54" y="178.3" font-size="19" fill="#f5e61a" text-anchor="start" font-weight="normal" letter-spacing="0.3" >U_LP bottom</text>
<path d="M9,395.0 H29 L42,407.5 L29,420.0 H9 Q6.5,420.0 6.5,417.5 V397.5 Q6.5,395.0 9,395.0 Z" fill="#0c2224" stroke="#24c4d2" stroke-width="1.5"/>
<text x="23" y="412.0" font-size="12.5" fill="#7fe0e8" text-anchor="middle" font-weight="normal" >C 2</text>
<text x="54" y="412.3" font-size="19" fill="#22c4d4" text-anchor="start" font-weight="normal" letter-spacing="0.3" >U_BPP bottom</text>
<path d="M9,629.0 H29 L42,641.5 L29,654.0 H9 Q6.5,654.0 6.5,651.5 V631.5 Q6.5,629.0 9,629.0 Z" fill="#1e0c10" stroke="#e0405e" stroke-width="1.5"/>
<text x="23" y="646.0" font-size="12.5" fill="#f0d0d8" text-anchor="middle" font-weight="normal" >C 3</text>
<text x="54" y="646.3" font-size="19" fill="#e8284e" text-anchor="start" font-weight="normal" letter-spacing="0.3" >U_LP upper</text>
<path d="M9,863.0 H29 L42,875.5 L29,888.0 H9 Q6.5,888.0 6.5,885.5 V865.5 Q6.5,863.0 9,863.0 Z" fill="#8cc83a" stroke="#8cc83a" stroke-width="1.5"/>
<text x="23" y="880.0" font-size="12.5" fill="#1a2a08" text-anchor="middle" font-weight="normal" >C 4</text>
<text x="54" y="880.3" font-size="19" fill="#8cc83a" text-anchor="start" font-weight="normal" letter-spacing="0.3" >U_BPP upper</text>
<path d="M1712,64 H1742 Q1744,64 1744,66 V95.5 Q1744,98 1742.2,96.2 L1711,66 Q1709.6,64 1712,64 Z" fill="#4f4f4f"/>
<circle cx="1737.3" cy="70.3" r="3.9" fill="none" stroke="#ababab" stroke-width="1.5"/>
<line x1="1734.2" y1="74.6" x2="1728.8" y2="79.6" stroke="#ababab" stroke-width="2.6" stroke-linecap="round"/>
<path d="M44.8,57 H65 L55.3,66.2 Z" fill="#f58a1f"/>
<path d="M46,68 H64 V87 H58.8 L55.4,93.6 L52,87 H46 Z" fill="#000" stroke="#f58a1f" stroke-width="2.2"/>
<path d="M50.6,72 H59.6 V74.2 H56.9 V83 H53.9 V74.2 H50.6 Z" fill="#f58a1f"/>
<circle cx="1762" cy="503" r="2.1" fill="#bdbdbd"/>
<circle cx="1762" cy="511.7" r="2.1" fill="#bdbdbd"/>
<circle cx="1762" cy="520.3" r="2.1" fill="#bdbdbd"/>
<path d="M1769.5,29.5 H1921 M1769.5,994.5 H1921" fill="none" stroke="#6b625b" stroke-width="1"/>
<rect x="1769" y="30" width="1" height="964" fill="#585858"/>
<text x="1785" y="25.7" font-size="29.5" font-weight="bold" fill="#ffffff" letter-spacing="-1.45">Tektronix</text>
<path d="M1815,25.7 L1820.5,25.7 L1831,9.5 L1825.5,9.5 Z" fill="#1fb8d8"/>
<text x="1844" y="43.9" font-size="14.5" fill="#e0e0e0" text-anchor="middle" font-weight="bold" letter-spacing="0.2" >Add New...</text>
<rect x="1777.5" y="54.5" width="62" height="36" rx="6" fill="url(#btn)" stroke="#6d645d" stroke-width="1"/>
<text x="1808.5" y="76.94" font-size="14.8" fill="#e6e6e6" text-anchor="middle" font-weight="normal" >Cursors</text>
<rect x="1849.5" y="54.5" width="62" height="36" rx="6" fill="url(#btn)" stroke="#6d645d" stroke-width="1"/>
<text x="1880.5" y="76.94" font-size="14.8" fill="#e6e6e6" text-anchor="middle" font-weight="normal" >Callout</text>
<rect x="1777.5" y="100.5" width="62" height="36" rx="6" fill="url(#btn)" stroke="#6d645d" stroke-width="1"/>
<text x="1808.5" y="122.94" font-size="14.8" fill="#e6e6e6" text-anchor="middle" font-weight="normal" >Measure</text>
<rect x="1849.5" y="100.5" width="62" height="36" rx="6" fill="url(#btn)" stroke="#6d645d" stroke-width="1"/>
<text x="1880.5" y="122.94" font-size="14.8" fill="#e6e6e6" text-anchor="middle" font-weight="normal" >Search</text>
<rect x="1777.5" y="146.5" width="62" height="36" rx="6" fill="url(#btn)" stroke="#6d645d" stroke-width="1"/>
<text x="1808.5" y="160.94" font-size="14.8" fill="#e6e6e6" text-anchor="middle" font-weight="normal" >Results</text>
<text x="1808.5" y="176.94" font-size="14.8" fill="#e6e6e6" text-anchor="middle" font-weight="normal" >Table</text>
<rect x="1849.5" y="146.5" width="62" height="36" rx="6" fill="url(#btn)" stroke="#6d645d" stroke-width="1"/>
<text x="1880.5" y="168.94" font-size="14.8" fill="#e6e6e6" text-anchor="middle" font-weight="normal" >Plot</text>
<rect x="1773" y="189" width="144" height="1" fill="#5a5a5a"/>
<rect x="1777.5" y="196.5" width="62" height="36" rx="6" fill="url(#btn)" stroke="#6d645d" stroke-width="1"/>
<rect x="1849.5" y="196.5" width="62" height="36" rx="6" fill="url(#btn)" stroke="#6d645d" stroke-width="1"/>
<text x="1880.5" y="218.94" font-size="14.8" fill="#e6e6e6" text-anchor="middle" font-weight="normal" >More...</text>
<path d="M1796.2,202h2.8v2.6h-2.8zM1802,202h4v2.6h-4zM1809,202h4v2.6h-4zM1817,202h2.9v2.6h-2.9zM1796.2,220.2h2.8v2.6h-2.8zM1802,220.2h4v2.6h-4zM1809,220.2h4v2.6h-4zM1796.2,207.2h2.8v4h-2.8zM1796.2,213.4h2.8v4h-2.8zM1817,207.2h2.9v4h-2.9zM1817,213.4h2.9v4h-2.9z" fill="#c8c8c8"/>
<circle cx="1810.1" cy="210.8" r="4.4" fill="#2d2d2d" stroke="#c8c8c8" stroke-width="1.7"/>
<line x1="1806.6" y1="214.3" x2="1802" y2="218.2" stroke="#c8c8c8" stroke-width="2.6" stroke-linecap="round"/>
<path d="M1814.2,217.3 L1816.3,226 L1818,223.6 L1820.4,227 L1822.2,225.8 L1819.8,222.5 L1822.8,221.8 Z" fill="#c8c8c8"/>
<clipPath id="cb0"><rect x="3" y="999" width="90" height="78.5" rx="4"/></clipPath>
<g clip-path="url(#cb0)"><rect x="3" y="999" width="90" height="79" fill="#c9c9c9"/><rect x="3" y="999" width="90" height="19" fill="#4a4520"/><rect x="3" y="1018" width="90" height="1.2" fill="#9a9a9a"/></g>
<text x="8" y="1012.7" font-size="14" fill="#f0e62a" text-anchor="start" font-weight="normal" letter-spacing="0.1" >Ch 1</text>
<text x="10" y="1035.9" font-size="15" fill="#111" text-anchor="start" font-weight="normal" >500 mV/div</text>
<text x="10" y="1055.6" font-size="15" fill="#111" text-anchor="start" font-weight="normal" >1 M&#937;</text>
<text x="10" y="1073.7" font-size="15" fill="#111" text-anchor="start" font-weight="normal" >1 MHz</text>
<text x="77" y="1067.5" font-size="9" fill="#111" text-anchor="start" font-weight="normal" >B</text>
<text x="83" y="1071" font-size="9" fill="#111" text-anchor="start" font-weight="normal" >w</text>
<clipPath id="cb1"><rect x="98" y="999" width="90" height="78.5" rx="4"/></clipPath>
<g clip-path="url(#cb1)"><rect x="98" y="999" width="90" height="79" fill="#c9c9c9"/><rect x="98" y="999" width="90" height="19" fill="#1d4042"/><rect x="98" y="1018" width="90" height="1.2" fill="#9a9a9a"/></g>
<text x="103" y="1012.7" font-size="14" fill="#24c4d2" text-anchor="start" font-weight="normal" letter-spacing="0.1" >Ch 2</text>
<text x="105" y="1035.9" font-size="15" fill="#111" text-anchor="start" font-weight="normal" >500 mV/div</text>
<text x="105" y="1055.6" font-size="15" fill="#111" text-anchor="start" font-weight="normal" >1 M&#937;</text>
<text x="105" y="1073.7" font-size="15" fill="#111" text-anchor="start" font-weight="normal" >1 MHz</text>
<text x="172" y="1067.5" font-size="9" fill="#111" text-anchor="start" font-weight="normal" >B</text>
<text x="178" y="1071" font-size="9" fill="#111" text-anchor="start" font-weight="normal" >w</text>
<clipPath id="cb2"><rect x="193" y="999" width="90" height="78.5" rx="4"/></clipPath>
<g clip-path="url(#cb2)"><rect x="193" y="999" width="90" height="79" fill="#c9c9c9"/><rect x="193" y="999" width="90" height="19" fill="#472327"/><rect x="193" y="1018" width="90" height="1.2" fill="#9a9a9a"/></g>
<text x="198" y="1012.7" font-size="14" fill="#f2e6e6" text-anchor="start" font-weight="normal" letter-spacing="0.1" >Ch 3</text>
<text x="200" y="1035.9" font-size="15" fill="#111" text-anchor="start" font-weight="normal" >500 mV/div</text>
<text x="200" y="1055.6" font-size="15" fill="#111" text-anchor="start" font-weight="normal" >1 M&#937;</text>
<text x="200" y="1073.7" font-size="15" fill="#111" text-anchor="start" font-weight="normal" >1 MHz</text>
<text x="267" y="1067.5" font-size="9" fill="#111" text-anchor="start" font-weight="normal" >B</text>
<text x="273" y="1071" font-size="9" fill="#111" text-anchor="start" font-weight="normal" >w</text>
<clipPath id="cb3"><rect x="288" y="999" width="90" height="78.5" rx="4"/></clipPath>
<g clip-path="url(#cb3)"><rect x="288" y="999" width="90" height="79" fill="#c9c9c9"/><rect x="288" y="999" width="90" height="19" fill="#8ed030"/><rect x="288" y="1018" width="90" height="1.2" fill="#9a9a9a"/></g>
<text x="293" y="1012.7" font-size="14" fill="#111111" text-anchor="start" font-weight="normal" letter-spacing="0.1" >Ch 4</text>
<text x="295" y="1035.9" font-size="15" fill="#111" text-anchor="start" font-weight="normal" >500 mV/div</text>
<text x="295" y="1055.6" font-size="15" fill="#111" text-anchor="start" font-weight="normal" >1 M&#937;</text>
<text x="295" y="1073.7" font-size="15" fill="#111" text-anchor="start" font-weight="normal" >1 MHz</text>
<text x="362" y="1067.5" font-size="9" fill="#111" text-anchor="start" font-weight="normal" >B</text>
<text x="368" y="1071" font-size="9" fill="#111" text-anchor="start" font-weight="normal" >w</text>
<rect x="1128.0" y="998.5" width="38" height="78" rx="7" fill="url(#btn2)" stroke="#5e5750" stroke-width="1"/>
<rect x="1131.5" y="1006" width="31" height="2.2" fill="#f58a1f"/>
<text x="1147.0" y="1031" font-size="15" fill="#eeeeee" text-anchor="middle" font-weight="normal" >Add</text>
<text x="1147.0" y="1047" font-size="15" fill="#eeeeee" text-anchor="middle" font-weight="normal" >New</text>
<text x="1147.0" y="1063" font-size="15" fill="#eeeeee" text-anchor="middle" font-weight="normal" >Math</text>
<rect x="1173.0" y="998.5" width="38" height="78" rx="7" fill="url(#btn2)" stroke="#5e5750" stroke-width="1"/>
<rect x="1176.5" y="1006" width="31" height="2.2" fill="#c0c4d0"/>
<text x="1192.0" y="1031" font-size="15" fill="#eeeeee" text-anchor="middle" font-weight="normal" >Add</text>
<text x="1192.0" y="1047" font-size="15" fill="#eeeeee" text-anchor="middle" font-weight="normal" >New</text>
<text x="1192.0" y="1063" font-size="15" fill="#eeeeee" text-anchor="middle" font-weight="normal" >Ref</text>
<rect x="1218.0" y="998.5" width="38" height="78" rx="7" fill="url(#btn2)" stroke="#5e5750" stroke-width="1"/>
<rect x="1221.5" y="1006" width="31" height="2.2" fill="#c050f0"/>
<text x="1237.0" y="1031" font-size="15" fill="#eeeeee" text-anchor="middle" font-weight="normal" >Add</text>
<text x="1237.0" y="1047" font-size="15" fill="#eeeeee" text-anchor="middle" font-weight="normal" >New</text>
<text x="1237.0" y="1063" font-size="15" fill="#eeeeee" text-anchor="middle" font-weight="normal" >Bus</text>
<rect x="1267" y="998" width="1" height="79" fill="#555"/>
<rect x="1810" y="997" width="1" height="80" fill="#555"/>
<rect x="1279" y="999.5" width="198" height="78" rx="5" fill="#161616"/>
<clipPath id="ip1279"><rect x="1280" y="1000.5" width="196" height="76" rx="4"/></clipPath>
<g clip-path="url(#ip1279)"><rect x="1279" y="999" width="198" height="79" fill="#c9c9c9"/><rect x="1279" y="999" width="198" height="19" fill="#59595b"/><rect x="1279" y="1018" width="198" height="2.2" fill="#9c9c9c"/></g>
<text x="1284" y="1014.5" font-size="16" fill="#e8e8e8" text-anchor="start" font-weight="normal" >Horizontal</text>
<text x="1285" y="1035.5" font-size="15" fill="#111" text-anchor="start" font-weight="normal" >4 ms/div</text>
<text x="1391" y="1035.5" font-size="15" fill="#111" text-anchor="start" font-weight="normal" >40 ms</text>
<text x="1285" y="1055" font-size="14.5" fill="#111" text-anchor="start" font-weight="normal" >SR: 2.5 MS/s</text>
<text x="1391" y="1055" font-size="15" fill="#111" text-anchor="start" font-weight="normal" >400 ns/pt</text>
<text x="1285" y="1073.5" font-size="14.5" fill="#111" text-anchor="start" font-weight="normal" >RL: 100 kpts</text>
<text x="1405.5" y="1073.5" font-size="15" fill="#111" text-anchor="start" font-weight="normal" >3%</text>
<path d="M1391.5,1063 H1399.5 V1071 H1397 L1395.5,1074 L1394,1071 H1391.5 Z" fill="#000" stroke="#f58a1f" stroke-width="1.3"/>
<path d="M1393.5,1065.3 H1397.5 M1395.5,1065.3 V1069.5" stroke="#fff" stroke-width="1.2"/>
<rect x="1484" y="999.5" width="158" height="78" rx="5" fill="#161616"/>
<clipPath id="ip1484"><rect x="1485" y="1000.5" width="156" height="76" rx="4"/></clipPath>
<g clip-path="url(#ip1484)"><rect x="1484" y="999" width="158" height="79" fill="#c9c9c9"/><rect x="1484" y="999" width="158" height="19" fill="#59595b"/><rect x="1484" y="1018" width="158" height="2.2" fill="#9c9c9c"/></g>
<text x="1489" y="1014.5" font-size="16" fill="#e8e8e8" text-anchor="start" font-weight="normal" >Trigger</text>
<text x="1490" y="1036" font-size="15" fill="#111" text-anchor="start" font-weight="normal" >Aux</text>
<text x="1577.5" y="1036" font-size="15" fill="#111" text-anchor="start" font-weight="normal" >1 V</text>
<path d="M1551,1036.2 H1555 L1561.5,1027 H1566" fill="none" stroke="#3a3a8a" stroke-width="1.2"/>
<rect x="1649" y="999.5" width="148.5" height="78" rx="5" fill="#161616"/>
<clipPath id="ip1649"><rect x="1650" y="1000.5" width="146.5" height="76" rx="4"/></clipPath>
<g clip-path="url(#ip1649)"><rect x="1649" y="999" width="148.5" height="79" fill="#c9c9c9"/><rect x="1649" y="999" width="148.5" height="19" fill="#59595b"/><rect x="1649" y="1018" width="148.5" height="2.2" fill="#9c9c9c"/></g>
<text x="1654" y="1014.5" font-size="16" fill="#e8e8e8" text-anchor="start" font-weight="normal" >Acquisition</text>
<text x="1655" y="1036" font-size="15" fill="#111" text-anchor="start" font-weight="normal" >Manual,</text>
<text x="1791.5" y="1036" font-size="15" fill="#111" text-anchor="end" font-weight="normal" >Analyze</text>
<text x="1655" y="1055" font-size="15" fill="#111" text-anchor="start" font-weight="normal" >High Res: 16 bits</text>
<text x="1655" y="1073.5" font-size="15" fill="#111" text-anchor="start" font-weight="normal" >Single: 1 /1</text>
<rect x="1821.5" y="999" width="89" height="34.5" rx="7" fill="#ff1f28" stroke="#4f6b6b" stroke-width="1"/>
<text x="1866" y="1019" font-size="13.2" fill="#ffffff" text-anchor="middle" font-weight="bold" >Stopped</text>
<rect x="1821.5" y="1042" width="89" height="36" rx="5" fill="#c9c9c9"/>
<text x="1866" y="1056.7" font-size="15.3" fill="#111" text-anchor="middle" font-weight="normal" >28 May 2025</text>
<text x="1866" y="1073.7" font-size="15.3" fill="#111" text-anchor="middle" font-weight="normal" >7:42:23 AM</text>
</svg></body></html>
